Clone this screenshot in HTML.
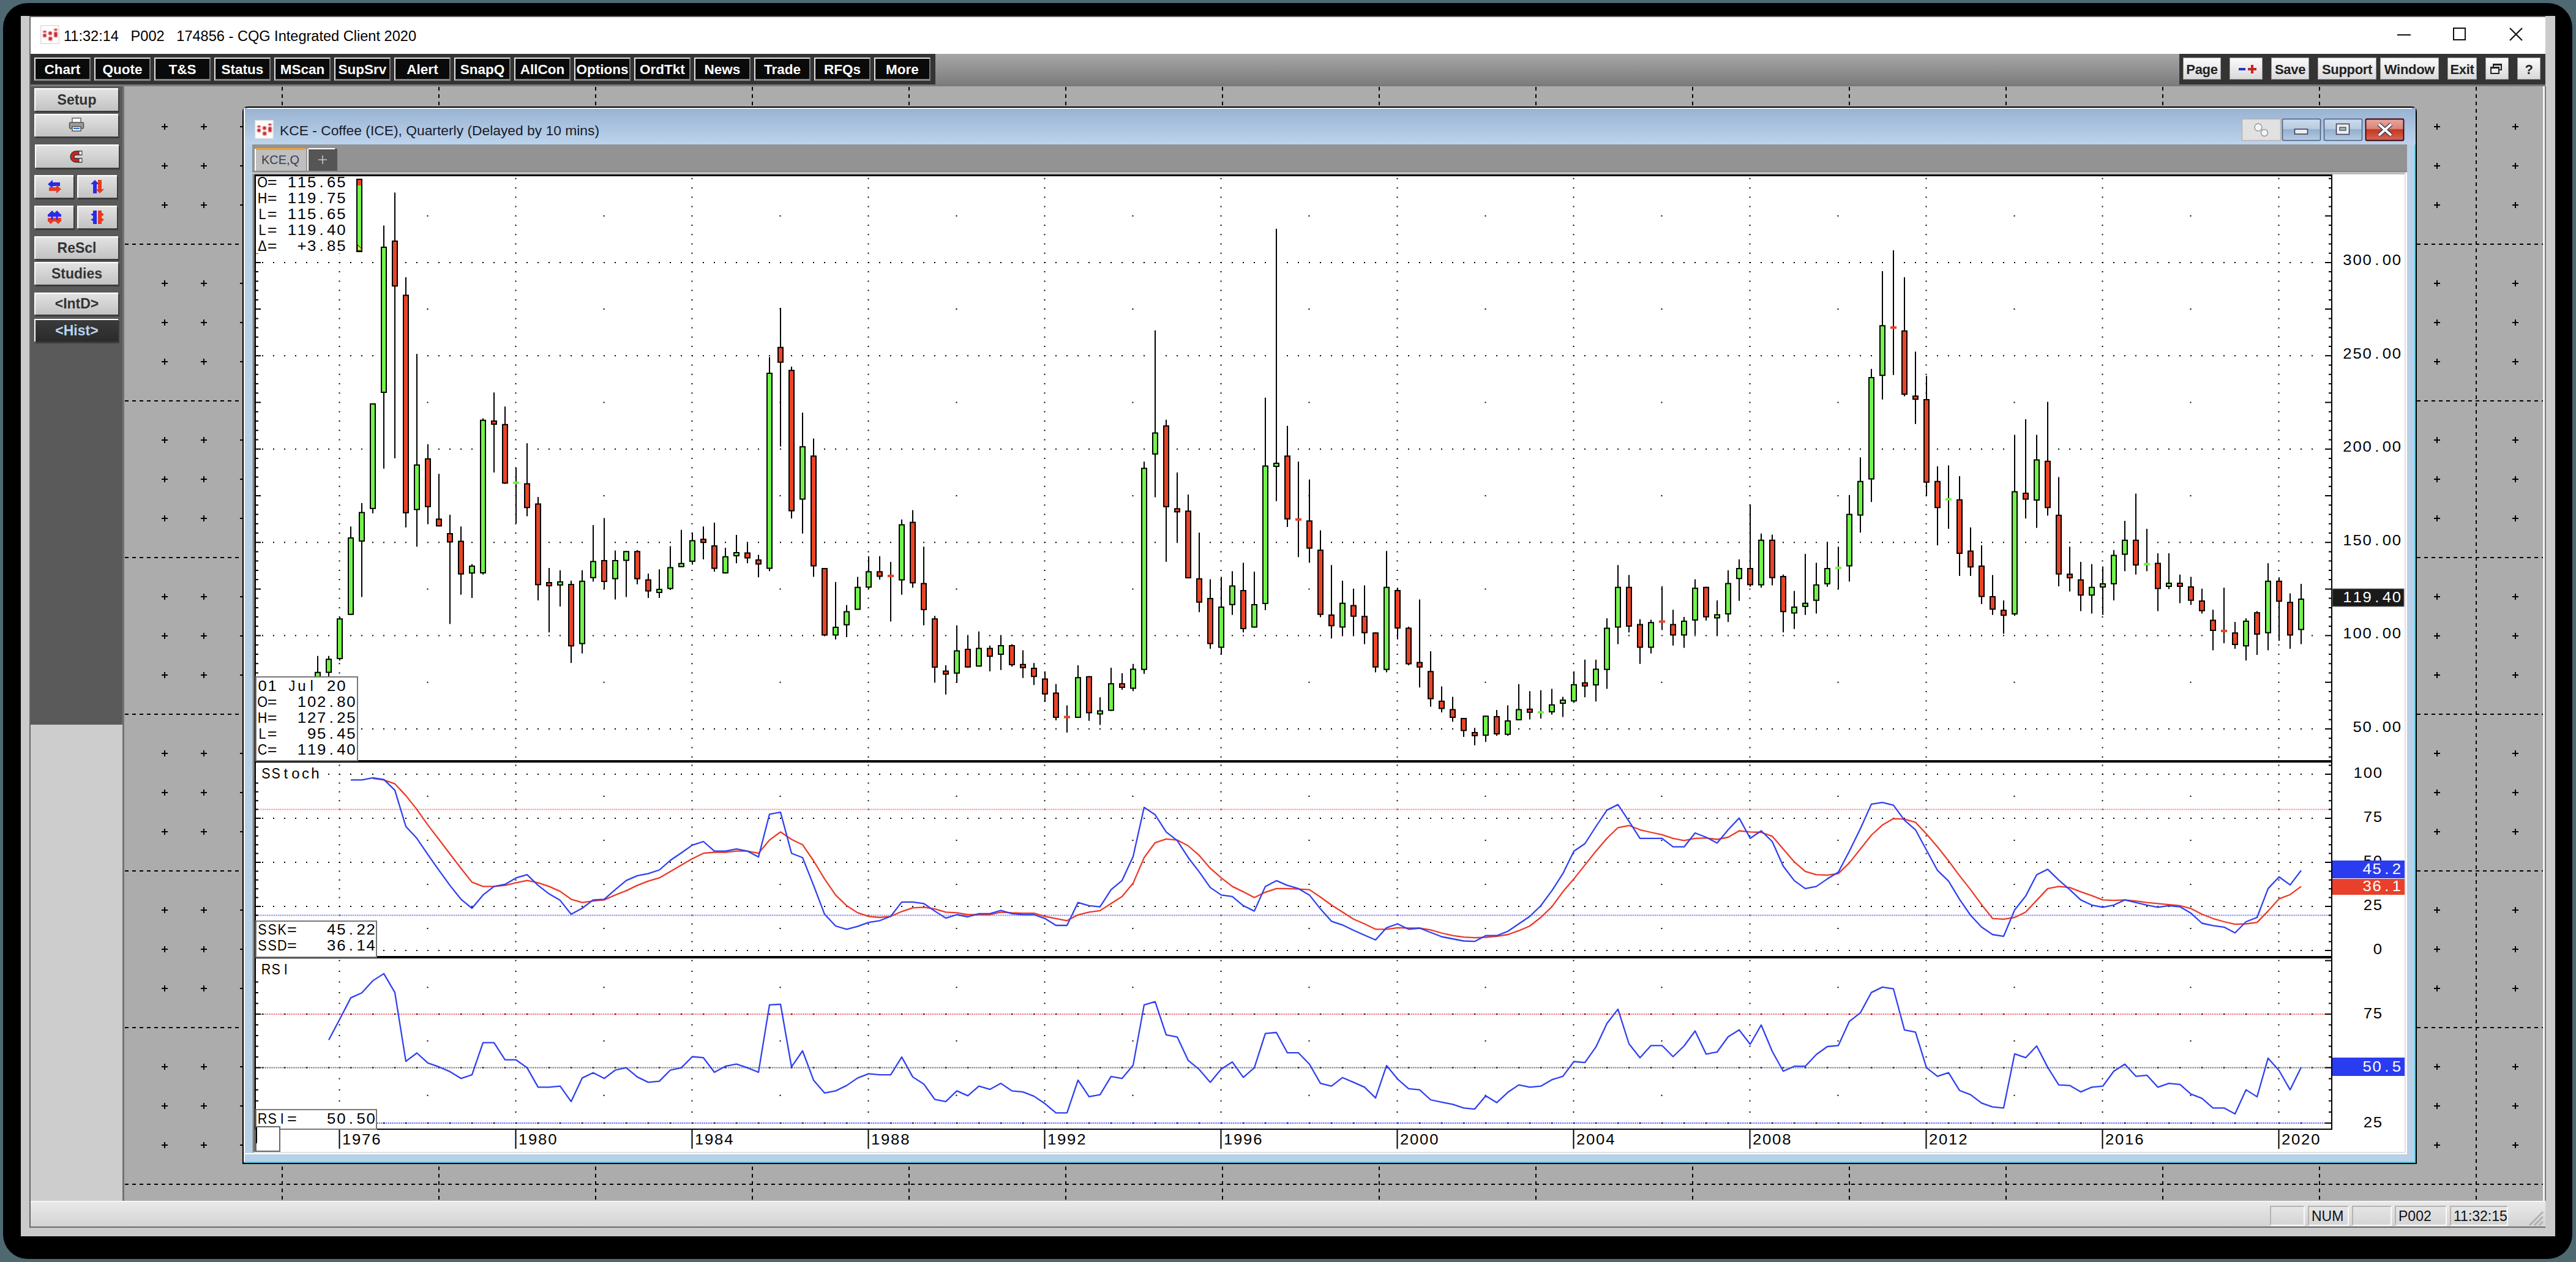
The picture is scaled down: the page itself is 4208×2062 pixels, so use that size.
<!DOCTYPE html><html><head><meta charset="utf-8"><style>html,body{margin:0;padding:0;}body{width:4208px;height:2062px;position:relative;overflow:hidden;background:#4e6971;font-family:"Liberation Sans",sans-serif;}</style></head><body>
<div style="position:absolute;left:5px;top:5px;width:4197px;height:2052px;background:#000;border-radius:40px;"></div>
<div style="position:absolute;left:34px;top:26px;width:4140px;height:1994px;background:#cbcbcb;"></div>
<div style="position:absolute;left:48px;top:26px;width:2px;height:1980px;background:#666;"></div>
<div style="position:absolute;left:50px;top:28px;width:4108px;height:60px;background:#fff;"></div>
<div style="position:absolute;left:48px;top:26px;width:4110px;height:2px;background:#666;"></div>
<svg style="position:absolute;left:66px;top:41px" width="31" height="31" viewBox="0 0 31 31"><rect x="0.75" y="0.75" width="29.5" height="29.5" fill="#fff" stroke="#dcdcdc" stroke-width="1.5"/><g fill="#c4303a" stroke="#f2b0b0" stroke-width="1.4"><ellipse cx="7" cy="10.7" rx="3" ry="1.8"/><rect x="4" y="14" width="6" height="6" rx="2"/><circle cx="16" cy="13.3" r="3.2"/><rect x="13" y="19" width="6.5" height="6.5" rx="2.5"/><ellipse cx="25" cy="7.5" rx="3" ry="1.8"/><rect x="22" y="11" width="6" height="9" rx="2"/></g></svg>
<svg style="position:absolute;left:100px;top:36px" width="700" height="44"><text x="4" y="31" font-family="'Liberation Sans', sans-serif" font-size="23.5" fill="#000" xml:space="preserve" textLength="576" lengthAdjust="spacingAndGlyphs">11:32:14   P002   174856 - CQG Integrated Client 2020</text></svg>
<div style="position:absolute;left:3916px;top:56px;width:22px;height:2px;background:#111;"></div>
<div style="position:absolute;left:4007px;top:45px;width:21px;height:21px;border:2px solid #111;box-sizing:border-box;"></div>
<svg style="position:absolute;left:4099px;top:45px" width="22" height="22"><path d="M1 1 L21 21 M21 1 L1 21" stroke="#111" stroke-width="2.2"/></svg>
<div style="position:absolute;left:50px;top:88px;width:4108px;height:50px;background:#343434;"></div>
<div style="position:absolute;left:1528px;top:88px;width:2032px;height:50px;background:linear-gradient(#a6a6a6,#7d7d7d);"></div>
<div style="position:absolute;left:56px;top:94px;width:92px;height:38px;box-sizing:border-box;background:#0a0a0a;border-top:2px solid #e6e6e6;border-left:2px solid #e6e6e6;border-right:2px solid #7a7a7a;border-bottom:3px solid #8a8a8a;color:#fff;font-family:'Liberation Sans', sans-serif;font-weight:bold;font-size:22.5px;line-height:35px;text-align:center;white-space:nowrap;letter-spacing:0px">Chart</div>
<div style="position:absolute;left:154px;top:94px;width:92px;height:38px;box-sizing:border-box;background:#0a0a0a;border-top:2px solid #e6e6e6;border-left:2px solid #e6e6e6;border-right:2px solid #7a7a7a;border-bottom:3px solid #8a8a8a;color:#fff;font-family:'Liberation Sans', sans-serif;font-weight:bold;font-size:22.5px;line-height:35px;text-align:center;white-space:nowrap;letter-spacing:0px">Quote</div>
<div style="position:absolute;left:252px;top:94px;width:92px;height:38px;box-sizing:border-box;background:#0a0a0a;border-top:2px solid #e6e6e6;border-left:2px solid #e6e6e6;border-right:2px solid #7a7a7a;border-bottom:3px solid #8a8a8a;color:#fff;font-family:'Liberation Sans', sans-serif;font-weight:bold;font-size:22.5px;line-height:35px;text-align:center;white-space:nowrap;letter-spacing:0px">T&amp;S</div>
<div style="position:absolute;left:350px;top:94px;width:92px;height:38px;box-sizing:border-box;background:#0a0a0a;border-top:2px solid #e6e6e6;border-left:2px solid #e6e6e6;border-right:2px solid #7a7a7a;border-bottom:3px solid #8a8a8a;color:#fff;font-family:'Liberation Sans', sans-serif;font-weight:bold;font-size:22.5px;line-height:35px;text-align:center;white-space:nowrap;letter-spacing:0px">Status</div>
<div style="position:absolute;left:448px;top:94px;width:92px;height:38px;box-sizing:border-box;background:#0a0a0a;border-top:2px solid #e6e6e6;border-left:2px solid #e6e6e6;border-right:2px solid #7a7a7a;border-bottom:3px solid #8a8a8a;color:#fff;font-family:'Liberation Sans', sans-serif;font-weight:bold;font-size:22.5px;line-height:35px;text-align:center;white-space:nowrap;letter-spacing:0px">MScan</div>
<div style="position:absolute;left:546px;top:94px;width:92px;height:38px;box-sizing:border-box;background:#0a0a0a;border-top:2px solid #e6e6e6;border-left:2px solid #e6e6e6;border-right:2px solid #7a7a7a;border-bottom:3px solid #8a8a8a;color:#fff;font-family:'Liberation Sans', sans-serif;font-weight:bold;font-size:22.5px;line-height:35px;text-align:center;white-space:nowrap;letter-spacing:0px">SupSrv</div>
<div style="position:absolute;left:644px;top:94px;width:92px;height:38px;box-sizing:border-box;background:#0a0a0a;border-top:2px solid #e6e6e6;border-left:2px solid #e6e6e6;border-right:2px solid #7a7a7a;border-bottom:3px solid #8a8a8a;color:#fff;font-family:'Liberation Sans', sans-serif;font-weight:bold;font-size:22.5px;line-height:35px;text-align:center;white-space:nowrap;letter-spacing:0px">Alert</div>
<div style="position:absolute;left:742px;top:94px;width:92px;height:38px;box-sizing:border-box;background:#0a0a0a;border-top:2px solid #e6e6e6;border-left:2px solid #e6e6e6;border-right:2px solid #7a7a7a;border-bottom:3px solid #8a8a8a;color:#fff;font-family:'Liberation Sans', sans-serif;font-weight:bold;font-size:22.5px;line-height:35px;text-align:center;white-space:nowrap;letter-spacing:0px">SnapQ</div>
<div style="position:absolute;left:840px;top:94px;width:92px;height:38px;box-sizing:border-box;background:#0a0a0a;border-top:2px solid #e6e6e6;border-left:2px solid #e6e6e6;border-right:2px solid #7a7a7a;border-bottom:3px solid #8a8a8a;color:#fff;font-family:'Liberation Sans', sans-serif;font-weight:bold;font-size:22.5px;line-height:35px;text-align:center;white-space:nowrap;letter-spacing:0px">AllCon</div>
<div style="position:absolute;left:938px;top:94px;width:92px;height:38px;box-sizing:border-box;background:#0a0a0a;border-top:2px solid #e6e6e6;border-left:2px solid #e6e6e6;border-right:2px solid #7a7a7a;border-bottom:3px solid #8a8a8a;color:#fff;font-family:'Liberation Sans', sans-serif;font-weight:bold;font-size:22.5px;line-height:35px;text-align:center;white-space:nowrap;letter-spacing:0px">Options</div>
<div style="position:absolute;left:1036px;top:94px;width:92px;height:38px;box-sizing:border-box;background:#0a0a0a;border-top:2px solid #e6e6e6;border-left:2px solid #e6e6e6;border-right:2px solid #7a7a7a;border-bottom:3px solid #8a8a8a;color:#fff;font-family:'Liberation Sans', sans-serif;font-weight:bold;font-size:22.5px;line-height:35px;text-align:center;white-space:nowrap;letter-spacing:0px">OrdTkt</div>
<div style="position:absolute;left:1134px;top:94px;width:92px;height:38px;box-sizing:border-box;background:#0a0a0a;border-top:2px solid #e6e6e6;border-left:2px solid #e6e6e6;border-right:2px solid #7a7a7a;border-bottom:3px solid #8a8a8a;color:#fff;font-family:'Liberation Sans', sans-serif;font-weight:bold;font-size:22.5px;line-height:35px;text-align:center;white-space:nowrap;letter-spacing:0px">News</div>
<div style="position:absolute;left:1232px;top:94px;width:92px;height:38px;box-sizing:border-box;background:#0a0a0a;border-top:2px solid #e6e6e6;border-left:2px solid #e6e6e6;border-right:2px solid #7a7a7a;border-bottom:3px solid #8a8a8a;color:#fff;font-family:'Liberation Sans', sans-serif;font-weight:bold;font-size:22.5px;line-height:35px;text-align:center;white-space:nowrap;letter-spacing:0px">Trade</div>
<div style="position:absolute;left:1330px;top:94px;width:92px;height:38px;box-sizing:border-box;background:#0a0a0a;border-top:2px solid #e6e6e6;border-left:2px solid #e6e6e6;border-right:2px solid #7a7a7a;border-bottom:3px solid #8a8a8a;color:#fff;font-family:'Liberation Sans', sans-serif;font-weight:bold;font-size:22.5px;line-height:35px;text-align:center;white-space:nowrap;letter-spacing:0px">RFQs</div>
<div style="position:absolute;left:1428px;top:94px;width:92px;height:38px;box-sizing:border-box;background:#0a0a0a;border-top:2px solid #e6e6e6;border-left:2px solid #e6e6e6;border-right:2px solid #7a7a7a;border-bottom:3px solid #8a8a8a;color:#fff;font-family:'Liberation Sans', sans-serif;font-weight:bold;font-size:22.5px;line-height:35px;text-align:center;white-space:nowrap;letter-spacing:0px">More</div>
<div style="position:absolute;left:3566px;top:94px;width:62px;height:36px;box-sizing:border-box;background:linear-gradient(#fbfbfb,#d9d9d9);border:1px solid #9a9a9a;color:#222;font-family:'Liberation Sans', sans-serif;font-weight:bold;font-size:22px;line-height:37px;text-align:center;white-space:nowrap;letter-spacing:-0.3px">Page</div>
<div style="position:absolute;left:3642px;top:94px;width:54px;height:36px;box-sizing:border-box;background:linear-gradient(#fbfbfb,#d9d9d9);border:1px solid #9a9a9a;color:#222;font-family:'Liberation Sans', sans-serif;font-weight:bold;font-size:22px;line-height:37px;text-align:center;white-space:nowrap;letter-spacing:-0.3px"></div>
<div style="position:absolute;left:3710px;top:94px;width:62px;height:36px;box-sizing:border-box;background:linear-gradient(#fbfbfb,#d9d9d9);border:1px solid #9a9a9a;color:#222;font-family:'Liberation Sans', sans-serif;font-weight:bold;font-size:22px;line-height:37px;text-align:center;white-space:nowrap;letter-spacing:-0.3px">Save</div>
<div style="position:absolute;left:3786px;top:94px;width:96px;height:36px;box-sizing:border-box;background:linear-gradient(#fbfbfb,#d9d9d9);border:1px solid #9a9a9a;color:#222;font-family:'Liberation Sans', sans-serif;font-weight:bold;font-size:22px;line-height:37px;text-align:center;white-space:nowrap;letter-spacing:-0.3px">Support</div>
<div style="position:absolute;left:3888px;top:94px;width:96px;height:36px;box-sizing:border-box;background:linear-gradient(#fbfbfb,#d9d9d9);border:1px solid #9a9a9a;color:#222;font-family:'Liberation Sans', sans-serif;font-weight:bold;font-size:22px;line-height:37px;text-align:center;white-space:nowrap;letter-spacing:-0.3px">Window</div>
<div style="position:absolute;left:3998px;top:94px;width:48px;height:36px;box-sizing:border-box;background:linear-gradient(#fbfbfb,#d9d9d9);border:1px solid #9a9a9a;color:#222;font-family:'Liberation Sans', sans-serif;font-weight:bold;font-size:22px;line-height:37px;text-align:center;white-space:nowrap;letter-spacing:-0.3px">Exit</div>
<div style="position:absolute;left:4060px;top:94px;width:38px;height:36px;box-sizing:border-box;background:linear-gradient(#fbfbfb,#d9d9d9);border:1px solid #9a9a9a;color:#222;font-family:'Liberation Sans', sans-serif;font-weight:bold;font-size:22px;line-height:37px;text-align:center;white-space:nowrap;letter-spacing:-0.3px"></div>
<div style="position:absolute;left:4112px;top:94px;width:38px;height:36px;box-sizing:border-box;background:linear-gradient(#fbfbfb,#d9d9d9);border:1px solid #9a9a9a;color:#222;font-family:'Liberation Sans', sans-serif;font-weight:bold;font-size:22px;line-height:37px;text-align:center;white-space:nowrap;letter-spacing:-0.3px">?</div>
<div style="position:absolute;left:3657px;top:111px;width:11px;height:4px;background:#2233cc;"></div>
<div style="position:absolute;left:3672px;top:111px;width:14px;height:4px;background:#cc2222;"></div>
<div style="position:absolute;left:3677px;top:106px;width:4px;height:14px;background:#cc2222;"></div>
<div style="position:absolute;left:4072px;top:104px;width:15px;height:11px;border:2px solid #222;border-top-width:3px;box-sizing:border-box;"></div>
<div style="position:absolute;left:4068px;top:109px;width:15px;height:12px;border:2px solid #222;border-top-width:3px;box-sizing:border-box;background:#eee;"></div>
<div style="position:absolute;left:50px;top:138px;width:4108px;height:3px;background:#7a7a7a;"></div>
<div style="position:absolute;left:50px;top:141px;width:151px;height:1043px;background:#5a5a5a;"></div>
<div style="position:absolute;left:50px;top:1184px;width:151px;height:779px;background:#cdcdcd;"></div>
<div style="position:absolute;left:200px;top:141px;width:3px;height:1822px;background:#737373;"></div>
<div style="position:absolute;left:56px;top:144px;width:137px;height:37px;box-sizing:border-box;background:linear-gradient(#e2e2e2,#c2c2c2);border-top:2px solid #fff;border-left:2px solid #fff;box-shadow:2px 3px 0 #3c3c3c;color:#333;font-family:'Liberation Sans', sans-serif;font-weight:bold;font-size:23px;line-height:34px;text-align:center;white-space:nowrap">Setup</div>
<div style="position:absolute;left:56px;top:186px;width:137px;height:37px;box-sizing:border-box;background:linear-gradient(#e2e2e2,#c2c2c2);border-top:2px solid #fff;border-left:2px solid #fff;box-shadow:2px 3px 0 #3c3c3c;color:#333;font-family:'Liberation Sans', sans-serif;font-weight:bold;font-size:23px;line-height:34px;text-align:center;white-space:nowrap"></div>
<div style="position:absolute;left:57px;top:236px;width:137px;height:38px;box-sizing:border-box;background:linear-gradient(#e2e2e2,#c2c2c2);border-top:2px solid #fff;border-left:2px solid #fff;box-shadow:2px 3px 0 #3c3c3c;color:#333;font-family:'Liberation Sans', sans-serif;font-weight:bold;font-size:23px;line-height:35px;text-align:center;white-space:nowrap"></div>
<div style="position:absolute;left:56px;top:286px;width:64px;height:37px;box-sizing:border-box;background:linear-gradient(#e2e2e2,#c2c2c2);border-top:2px solid #fff;border-left:2px solid #fff;box-shadow:2px 3px 0 #3c3c3c;color:#333;font-family:'Liberation Sans', sans-serif;font-weight:bold;font-size:23px;line-height:34px;text-align:center;white-space:nowrap"></div>
<div style="position:absolute;left:126px;top:286px;width:65px;height:37px;box-sizing:border-box;background:linear-gradient(#e2e2e2,#c2c2c2);border-top:2px solid #fff;border-left:2px solid #fff;box-shadow:2px 3px 0 #3c3c3c;color:#333;font-family:'Liberation Sans', sans-serif;font-weight:bold;font-size:23px;line-height:34px;text-align:center;white-space:nowrap"></div>
<div style="position:absolute;left:56px;top:336px;width:64px;height:37px;box-sizing:border-box;background:linear-gradient(#e2e2e2,#c2c2c2);border-top:2px solid #fff;border-left:2px solid #fff;box-shadow:2px 3px 0 #3c3c3c;color:#333;font-family:'Liberation Sans', sans-serif;font-weight:bold;font-size:23px;line-height:34px;text-align:center;white-space:nowrap"></div>
<div style="position:absolute;left:126px;top:336px;width:65px;height:37px;box-sizing:border-box;background:linear-gradient(#e2e2e2,#c2c2c2);border-top:2px solid #fff;border-left:2px solid #fff;box-shadow:2px 3px 0 #3c3c3c;color:#333;font-family:'Liberation Sans', sans-serif;font-weight:bold;font-size:23px;line-height:34px;text-align:center;white-space:nowrap"></div>
<div style="position:absolute;left:56px;top:386px;width:137px;height:37px;box-sizing:border-box;background:linear-gradient(#e2e2e2,#c2c2c2);border-top:2px solid #fff;border-left:2px solid #fff;box-shadow:2px 3px 0 #3c3c3c;color:#333;font-family:'Liberation Sans', sans-serif;font-weight:bold;font-size:23px;line-height:34px;text-align:center;white-space:nowrap">ReScl</div>
<div style="position:absolute;left:56px;top:428px;width:137px;height:37px;box-sizing:border-box;background:linear-gradient(#e2e2e2,#c2c2c2);border-top:2px solid #fff;border-left:2px solid #fff;box-shadow:2px 3px 0 #3c3c3c;color:#333;font-family:'Liberation Sans', sans-serif;font-weight:bold;font-size:23px;line-height:34px;text-align:center;white-space:nowrap">Studies</div>
<div style="position:absolute;left:56px;top:478px;width:137px;height:36px;box-sizing:border-box;background:linear-gradient(#e2e2e2,#c2c2c2);border-top:2px solid #fff;border-left:2px solid #fff;box-shadow:2px 3px 0 #3c3c3c;color:#333;font-family:'Liberation Sans', sans-serif;font-weight:bold;font-size:23px;line-height:33px;text-align:center;white-space:nowrap">&lt;IntD&gt;</div>
<div style="position:absolute;left:56px;top:521px;width:137px;height:37px;box-sizing:border-box;background:linear-gradient(#3a3a3a,#2a2a2a);border-top:2px solid #fff;border-left:2px solid #fff;box-shadow:2px 3px 0 #3c3c3c;color:#b8d4f0;font-family:'Liberation Sans', sans-serif;font-weight:bold;font-size:23px;line-height:34px;text-align:center;white-space:nowrap">&lt;Hist&gt;</div>
<svg style="position:absolute;left:112px;top:192px" width="26" height="24" viewBox="0 0 26 24"><rect x="6" y="1" width="14" height="8" fill="#fff" stroke="#666" stroke-width="1.5"/><rect x="1.5" y="8" width="23" height="10" rx="2" fill="#9a9a9a" stroke="#555" stroke-width="1.5"/><rect x="6" y="15" width="14" height="7" fill="#fff" stroke="#555" stroke-width="1.5"/><rect x="8" y="17" width="10" height="2" fill="#2a6fd0"/></svg>
<svg style="position:absolute;left:113px;top:244px" width="26" height="24" viewBox="0 0 26 24"><path d="M20 3 H11 A9 9 0 0 0 11 21 H20 V15 H11 A3 3 0 0 1 11 9 H20 Z" fill="#d42020" stroke="#333" stroke-width="1.3"/><rect x="16" y="3" width="5" height="6" fill="#eee" stroke="#333" stroke-width="1"/><rect x="16" y="15" width="5" height="6" fill="#eee" stroke="#333" stroke-width="1"/></svg>
<svg style="position:absolute;left:0;top:0" width="220" height="400"><path d="M78 301 L86 294 V298 H98 V304 H86 V308 Z" fill="#2a2ae8"/><path d="M100 309 L92 302 V306 H80 V312 H92 V316 Z" fill="#e83a22"/><path d="M155 294 L148 301 H152 V316 H158 V301 H162 Z" fill="#2a2ae8"/><path d="M163 316 L156 309 H160 V294 H166 V309 H170 Z" fill="#e83a22"/><path d="M78 356 H100 V362 H78 Z M83 366 L78 361 H88 Z M95 366 L90 361 H100 Z" fill="#e83a22"/><path d="M78 350 H100 V354 H78 Z M85 344 L79 350 H91 Z M93 344 L87 350 H99 Z M83.5 354 H86.5 V359 H83.5 Z M91.5 354 H94.5 V359 H91.5 Z" fill="#2a2ae8"/><g fill="#e83a22"><rect x="160" y="344" width="6" height="22"/><path d="M170 350.5 L163 345 V356 Z"/><path d="M170 359 L163 353.5 V364.5 Z"/></g><g fill="#2a2ae8"><rect x="152" y="344" width="6" height="22"/><path d="M148 350.5 L158 345 V356 Z"/><path d="M148 359 L158 353.5 V364.5 Z"/></g></svg>
<div style="position:absolute;left:203px;top:141px;width:3953px;height:1821px;background:#acacac;"></div>
<div style="position:absolute;left:4154px;top:141px;width:3px;height:1821px;background:#f4f4f4;"></div>
<div style="position:absolute;left:4157px;top:141px;width:2px;height:1821px;background:#7a7a7a;"></div>
<svg style="position:absolute;left:203px;top:141px" width="3953" height="1821"><g stroke="#000" stroke-width="2" stroke-dasharray="6 6"><line x1="258" y1="1" x2="258" y2="1821" /><line x1="514" y1="1" x2="514" y2="1821" /><line x1="770" y1="1" x2="770" y2="1821" /><line x1="1026" y1="1" x2="1026" y2="1821" /><line x1="1282" y1="1" x2="1282" y2="1821" /><line x1="1538" y1="1" x2="1538" y2="1821" /><line x1="1794" y1="1" x2="1794" y2="1821" /><line x1="2050" y1="1" x2="2050" y2="1821" /><line x1="2306" y1="1" x2="2306" y2="1821" /><line x1="2562" y1="1" x2="2562" y2="1821" /><line x1="2818" y1="1" x2="2818" y2="1821" /><line x1="3074" y1="1" x2="3074" y2="1821" /><line x1="3330" y1="1" x2="3330" y2="1821" /><line x1="3586" y1="1" x2="3586" y2="1821" /><line x1="3842" y1="1" x2="3842" y2="1821" /><line x1="1" y1="258" x2="3951" y2="258" /><line x1="1" y1="514" x2="3951" y2="514" /><line x1="1" y1="770" x2="3951" y2="770" /><line x1="1" y1="1026" x2="3951" y2="1026" /><line x1="1" y1="1282" x2="3951" y2="1282" /><line x1="1" y1="1538" x2="3951" y2="1538" /><line x1="1" y1="1794" x2="3951" y2="1794" /></g><path d="M61 66h10M66 61v10M61 130h10M66 125v10M61 194h10M66 189v10M61 322h10M66 317v10M61 386h10M66 381v10M61 450h10M66 445v10M61 578h10M66 573v10M61 642h10M66 637v10M61 706h10M66 701v10M61 834h10M66 829v10M61 898h10M66 893v10M61 962h10M66 957v10M61 1090h10M66 1085v10M61 1154h10M66 1149v10M61 1218h10M66 1213v10M61 1346h10M66 1341v10M61 1410h10M66 1405v10M61 1474h10M66 1469v10M61 1602h10M66 1597v10M61 1666h10M66 1661v10M61 1730h10M66 1725v10M125 66h10M130 61v10M125 130h10M130 125v10M125 194h10M130 189v10M125 322h10M130 317v10M125 386h10M130 381v10M125 450h10M130 445v10M125 578h10M130 573v10M125 642h10M130 637v10M125 706h10M130 701v10M125 834h10M130 829v10M125 898h10M130 893v10M125 962h10M130 957v10M125 1090h10M130 1085v10M125 1154h10M130 1149v10M125 1218h10M130 1213v10M125 1346h10M130 1341v10M125 1410h10M130 1405v10M125 1474h10M130 1469v10M125 1602h10M130 1597v10M125 1666h10M130 1661v10M125 1730h10M130 1725v10M189 66h10M194 61v10M189 130h10M194 125v10M189 194h10M194 189v10M189 322h10M194 317v10M189 386h10M194 381v10M189 450h10M194 445v10M189 578h10M194 573v10M189 642h10M194 637v10M189 706h10M194 701v10M189 834h10M194 829v10M189 898h10M194 893v10M189 962h10M194 957v10M189 1090h10M194 1085v10M189 1154h10M194 1149v10M189 1218h10M194 1213v10M189 1346h10M194 1341v10M189 1410h10M194 1405v10M189 1474h10M194 1469v10M189 1602h10M194 1597v10M189 1666h10M194 1661v10M189 1730h10M194 1725v10M317 66h10M322 61v10M317 130h10M322 125v10M317 194h10M322 189v10M317 322h10M322 317v10M317 386h10M322 381v10M317 450h10M322 445v10M317 578h10M322 573v10M317 642h10M322 637v10M317 706h10M322 701v10M317 834h10M322 829v10M317 898h10M322 893v10M317 962h10M322 957v10M317 1090h10M322 1085v10M317 1154h10M322 1149v10M317 1218h10M322 1213v10M317 1346h10M322 1341v10M317 1410h10M322 1405v10M317 1474h10M322 1469v10M317 1602h10M322 1597v10M317 1666h10M322 1661v10M317 1730h10M322 1725v10M381 66h10M386 61v10M381 130h10M386 125v10M381 194h10M386 189v10M381 322h10M386 317v10M381 386h10M386 381v10M381 450h10M386 445v10M381 578h10M386 573v10M381 642h10M386 637v10M381 706h10M386 701v10M381 834h10M386 829v10M381 898h10M386 893v10M381 962h10M386 957v10M381 1090h10M386 1085v10M381 1154h10M386 1149v10M381 1218h10M386 1213v10M381 1346h10M386 1341v10M381 1410h10M386 1405v10M381 1474h10M386 1469v10M381 1602h10M386 1597v10M381 1666h10M386 1661v10M381 1730h10M386 1725v10M445 66h10M450 61v10M445 130h10M450 125v10M445 194h10M450 189v10M445 322h10M450 317v10M445 386h10M450 381v10M445 450h10M450 445v10M445 578h10M450 573v10M445 642h10M450 637v10M445 706h10M450 701v10M445 834h10M450 829v10M445 898h10M450 893v10M445 962h10M450 957v10M445 1090h10M450 1085v10M445 1154h10M450 1149v10M445 1218h10M450 1213v10M445 1346h10M450 1341v10M445 1410h10M450 1405v10M445 1474h10M450 1469v10M445 1602h10M450 1597v10M445 1666h10M450 1661v10M445 1730h10M450 1725v10M573 66h10M578 61v10M573 130h10M578 125v10M573 194h10M578 189v10M573 322h10M578 317v10M573 386h10M578 381v10M573 450h10M578 445v10M573 578h10M578 573v10M573 642h10M578 637v10M573 706h10M578 701v10M573 834h10M578 829v10M573 898h10M578 893v10M573 962h10M578 957v10M573 1090h10M578 1085v10M573 1154h10M578 1149v10M573 1218h10M578 1213v10M573 1346h10M578 1341v10M573 1410h10M578 1405v10M573 1474h10M578 1469v10M573 1602h10M578 1597v10M573 1666h10M578 1661v10M573 1730h10M578 1725v10M637 66h10M642 61v10M637 130h10M642 125v10M637 194h10M642 189v10M637 322h10M642 317v10M637 386h10M642 381v10M637 450h10M642 445v10M637 578h10M642 573v10M637 642h10M642 637v10M637 706h10M642 701v10M637 834h10M642 829v10M637 898h10M642 893v10M637 962h10M642 957v10M637 1090h10M642 1085v10M637 1154h10M642 1149v10M637 1218h10M642 1213v10M637 1346h10M642 1341v10M637 1410h10M642 1405v10M637 1474h10M642 1469v10M637 1602h10M642 1597v10M637 1666h10M642 1661v10M637 1730h10M642 1725v10M701 66h10M706 61v10M701 130h10M706 125v10M701 194h10M706 189v10M701 322h10M706 317v10M701 386h10M706 381v10M701 450h10M706 445v10M701 578h10M706 573v10M701 642h10M706 637v10M701 706h10M706 701v10M701 834h10M706 829v10M701 898h10M706 893v10M701 962h10M706 957v10M701 1090h10M706 1085v10M701 1154h10M706 1149v10M701 1218h10M706 1213v10M701 1346h10M706 1341v10M701 1410h10M706 1405v10M701 1474h10M706 1469v10M701 1602h10M706 1597v10M701 1666h10M706 1661v10M701 1730h10M706 1725v10M829 66h10M834 61v10M829 130h10M834 125v10M829 194h10M834 189v10M829 322h10M834 317v10M829 386h10M834 381v10M829 450h10M834 445v10M829 578h10M834 573v10M829 642h10M834 637v10M829 706h10M834 701v10M829 834h10M834 829v10M829 898h10M834 893v10M829 962h10M834 957v10M829 1090h10M834 1085v10M829 1154h10M834 1149v10M829 1218h10M834 1213v10M829 1346h10M834 1341v10M829 1410h10M834 1405v10M829 1474h10M834 1469v10M829 1602h10M834 1597v10M829 1666h10M834 1661v10M829 1730h10M834 1725v10M893 66h10M898 61v10M893 130h10M898 125v10M893 194h10M898 189v10M893 322h10M898 317v10M893 386h10M898 381v10M893 450h10M898 445v10M893 578h10M898 573v10M893 642h10M898 637v10M893 706h10M898 701v10M893 834h10M898 829v10M893 898h10M898 893v10M893 962h10M898 957v10M893 1090h10M898 1085v10M893 1154h10M898 1149v10M893 1218h10M898 1213v10M893 1346h10M898 1341v10M893 1410h10M898 1405v10M893 1474h10M898 1469v10M893 1602h10M898 1597v10M893 1666h10M898 1661v10M893 1730h10M898 1725v10M957 66h10M962 61v10M957 130h10M962 125v10M957 194h10M962 189v10M957 322h10M962 317v10M957 386h10M962 381v10M957 450h10M962 445v10M957 578h10M962 573v10M957 642h10M962 637v10M957 706h10M962 701v10M957 834h10M962 829v10M957 898h10M962 893v10M957 962h10M962 957v10M957 1090h10M962 1085v10M957 1154h10M962 1149v10M957 1218h10M962 1213v10M957 1346h10M962 1341v10M957 1410h10M962 1405v10M957 1474h10M962 1469v10M957 1602h10M962 1597v10M957 1666h10M962 1661v10M957 1730h10M962 1725v10M1085 66h10M1090 61v10M1085 130h10M1090 125v10M1085 194h10M1090 189v10M1085 322h10M1090 317v10M1085 386h10M1090 381v10M1085 450h10M1090 445v10M1085 578h10M1090 573v10M1085 642h10M1090 637v10M1085 706h10M1090 701v10M1085 834h10M1090 829v10M1085 898h10M1090 893v10M1085 962h10M1090 957v10M1085 1090h10M1090 1085v10M1085 1154h10M1090 1149v10M1085 1218h10M1090 1213v10M1085 1346h10M1090 1341v10M1085 1410h10M1090 1405v10M1085 1474h10M1090 1469v10M1085 1602h10M1090 1597v10M1085 1666h10M1090 1661v10M1085 1730h10M1090 1725v10M1149 66h10M1154 61v10M1149 130h10M1154 125v10M1149 194h10M1154 189v10M1149 322h10M1154 317v10M1149 386h10M1154 381v10M1149 450h10M1154 445v10M1149 578h10M1154 573v10M1149 642h10M1154 637v10M1149 706h10M1154 701v10M1149 834h10M1154 829v10M1149 898h10M1154 893v10M1149 962h10M1154 957v10M1149 1090h10M1154 1085v10M1149 1154h10M1154 1149v10M1149 1218h10M1154 1213v10M1149 1346h10M1154 1341v10M1149 1410h10M1154 1405v10M1149 1474h10M1154 1469v10M1149 1602h10M1154 1597v10M1149 1666h10M1154 1661v10M1149 1730h10M1154 1725v10M1213 66h10M1218 61v10M1213 130h10M1218 125v10M1213 194h10M1218 189v10M1213 322h10M1218 317v10M1213 386h10M1218 381v10M1213 450h10M1218 445v10M1213 578h10M1218 573v10M1213 642h10M1218 637v10M1213 706h10M1218 701v10M1213 834h10M1218 829v10M1213 898h10M1218 893v10M1213 962h10M1218 957v10M1213 1090h10M1218 1085v10M1213 1154h10M1218 1149v10M1213 1218h10M1218 1213v10M1213 1346h10M1218 1341v10M1213 1410h10M1218 1405v10M1213 1474h10M1218 1469v10M1213 1602h10M1218 1597v10M1213 1666h10M1218 1661v10M1213 1730h10M1218 1725v10M1341 66h10M1346 61v10M1341 130h10M1346 125v10M1341 194h10M1346 189v10M1341 322h10M1346 317v10M1341 386h10M1346 381v10M1341 450h10M1346 445v10M1341 578h10M1346 573v10M1341 642h10M1346 637v10M1341 706h10M1346 701v10M1341 834h10M1346 829v10M1341 898h10M1346 893v10M1341 962h10M1346 957v10M1341 1090h10M1346 1085v10M1341 1154h10M1346 1149v10M1341 1218h10M1346 1213v10M1341 1346h10M1346 1341v10M1341 1410h10M1346 1405v10M1341 1474h10M1346 1469v10M1341 1602h10M1346 1597v10M1341 1666h10M1346 1661v10M1341 1730h10M1346 1725v10M1405 66h10M1410 61v10M1405 130h10M1410 125v10M1405 194h10M1410 189v10M1405 322h10M1410 317v10M1405 386h10M1410 381v10M1405 450h10M1410 445v10M1405 578h10M1410 573v10M1405 642h10M1410 637v10M1405 706h10M1410 701v10M1405 834h10M1410 829v10M1405 898h10M1410 893v10M1405 962h10M1410 957v10M1405 1090h10M1410 1085v10M1405 1154h10M1410 1149v10M1405 1218h10M1410 1213v10M1405 1346h10M1410 1341v10M1405 1410h10M1410 1405v10M1405 1474h10M1410 1469v10M1405 1602h10M1410 1597v10M1405 1666h10M1410 1661v10M1405 1730h10M1410 1725v10M1469 66h10M1474 61v10M1469 130h10M1474 125v10M1469 194h10M1474 189v10M1469 322h10M1474 317v10M1469 386h10M1474 381v10M1469 450h10M1474 445v10M1469 578h10M1474 573v10M1469 642h10M1474 637v10M1469 706h10M1474 701v10M1469 834h10M1474 829v10M1469 898h10M1474 893v10M1469 962h10M1474 957v10M1469 1090h10M1474 1085v10M1469 1154h10M1474 1149v10M1469 1218h10M1474 1213v10M1469 1346h10M1474 1341v10M1469 1410h10M1474 1405v10M1469 1474h10M1474 1469v10M1469 1602h10M1474 1597v10M1469 1666h10M1474 1661v10M1469 1730h10M1474 1725v10M1597 66h10M1602 61v10M1597 130h10M1602 125v10M1597 194h10M1602 189v10M1597 322h10M1602 317v10M1597 386h10M1602 381v10M1597 450h10M1602 445v10M1597 578h10M1602 573v10M1597 642h10M1602 637v10M1597 706h10M1602 701v10M1597 834h10M1602 829v10M1597 898h10M1602 893v10M1597 962h10M1602 957v10M1597 1090h10M1602 1085v10M1597 1154h10M1602 1149v10M1597 1218h10M1602 1213v10M1597 1346h10M1602 1341v10M1597 1410h10M1602 1405v10M1597 1474h10M1602 1469v10M1597 1602h10M1602 1597v10M1597 1666h10M1602 1661v10M1597 1730h10M1602 1725v10M1661 66h10M1666 61v10M1661 130h10M1666 125v10M1661 194h10M1666 189v10M1661 322h10M1666 317v10M1661 386h10M1666 381v10M1661 450h10M1666 445v10M1661 578h10M1666 573v10M1661 642h10M1666 637v10M1661 706h10M1666 701v10M1661 834h10M1666 829v10M1661 898h10M1666 893v10M1661 962h10M1666 957v10M1661 1090h10M1666 1085v10M1661 1154h10M1666 1149v10M1661 1218h10M1666 1213v10M1661 1346h10M1666 1341v10M1661 1410h10M1666 1405v10M1661 1474h10M1666 1469v10M1661 1602h10M1666 1597v10M1661 1666h10M1666 1661v10M1661 1730h10M1666 1725v10M1725 66h10M1730 61v10M1725 130h10M1730 125v10M1725 194h10M1730 189v10M1725 322h10M1730 317v10M1725 386h10M1730 381v10M1725 450h10M1730 445v10M1725 578h10M1730 573v10M1725 642h10M1730 637v10M1725 706h10M1730 701v10M1725 834h10M1730 829v10M1725 898h10M1730 893v10M1725 962h10M1730 957v10M1725 1090h10M1730 1085v10M1725 1154h10M1730 1149v10M1725 1218h10M1730 1213v10M1725 1346h10M1730 1341v10M1725 1410h10M1730 1405v10M1725 1474h10M1730 1469v10M1725 1602h10M1730 1597v10M1725 1666h10M1730 1661v10M1725 1730h10M1730 1725v10M1853 66h10M1858 61v10M1853 130h10M1858 125v10M1853 194h10M1858 189v10M1853 322h10M1858 317v10M1853 386h10M1858 381v10M1853 450h10M1858 445v10M1853 578h10M1858 573v10M1853 642h10M1858 637v10M1853 706h10M1858 701v10M1853 834h10M1858 829v10M1853 898h10M1858 893v10M1853 962h10M1858 957v10M1853 1090h10M1858 1085v10M1853 1154h10M1858 1149v10M1853 1218h10M1858 1213v10M1853 1346h10M1858 1341v10M1853 1410h10M1858 1405v10M1853 1474h10M1858 1469v10M1853 1602h10M1858 1597v10M1853 1666h10M1858 1661v10M1853 1730h10M1858 1725v10M1917 66h10M1922 61v10M1917 130h10M1922 125v10M1917 194h10M1922 189v10M1917 322h10M1922 317v10M1917 386h10M1922 381v10M1917 450h10M1922 445v10M1917 578h10M1922 573v10M1917 642h10M1922 637v10M1917 706h10M1922 701v10M1917 834h10M1922 829v10M1917 898h10M1922 893v10M1917 962h10M1922 957v10M1917 1090h10M1922 1085v10M1917 1154h10M1922 1149v10M1917 1218h10M1922 1213v10M1917 1346h10M1922 1341v10M1917 1410h10M1922 1405v10M1917 1474h10M1922 1469v10M1917 1602h10M1922 1597v10M1917 1666h10M1922 1661v10M1917 1730h10M1922 1725v10M1981 66h10M1986 61v10M1981 130h10M1986 125v10M1981 194h10M1986 189v10M1981 322h10M1986 317v10M1981 386h10M1986 381v10M1981 450h10M1986 445v10M1981 578h10M1986 573v10M1981 642h10M1986 637v10M1981 706h10M1986 701v10M1981 834h10M1986 829v10M1981 898h10M1986 893v10M1981 962h10M1986 957v10M1981 1090h10M1986 1085v10M1981 1154h10M1986 1149v10M1981 1218h10M1986 1213v10M1981 1346h10M1986 1341v10M1981 1410h10M1986 1405v10M1981 1474h10M1986 1469v10M1981 1602h10M1986 1597v10M1981 1666h10M1986 1661v10M1981 1730h10M1986 1725v10M2109 66h10M2114 61v10M2109 130h10M2114 125v10M2109 194h10M2114 189v10M2109 322h10M2114 317v10M2109 386h10M2114 381v10M2109 450h10M2114 445v10M2109 578h10M2114 573v10M2109 642h10M2114 637v10M2109 706h10M2114 701v10M2109 834h10M2114 829v10M2109 898h10M2114 893v10M2109 962h10M2114 957v10M2109 1090h10M2114 1085v10M2109 1154h10M2114 1149v10M2109 1218h10M2114 1213v10M2109 1346h10M2114 1341v10M2109 1410h10M2114 1405v10M2109 1474h10M2114 1469v10M2109 1602h10M2114 1597v10M2109 1666h10M2114 1661v10M2109 1730h10M2114 1725v10M2173 66h10M2178 61v10M2173 130h10M2178 125v10M2173 194h10M2178 189v10M2173 322h10M2178 317v10M2173 386h10M2178 381v10M2173 450h10M2178 445v10M2173 578h10M2178 573v10M2173 642h10M2178 637v10M2173 706h10M2178 701v10M2173 834h10M2178 829v10M2173 898h10M2178 893v10M2173 962h10M2178 957v10M2173 1090h10M2178 1085v10M2173 1154h10M2178 1149v10M2173 1218h10M2178 1213v10M2173 1346h10M2178 1341v10M2173 1410h10M2178 1405v10M2173 1474h10M2178 1469v10M2173 1602h10M2178 1597v10M2173 1666h10M2178 1661v10M2173 1730h10M2178 1725v10M2237 66h10M2242 61v10M2237 130h10M2242 125v10M2237 194h10M2242 189v10M2237 322h10M2242 317v10M2237 386h10M2242 381v10M2237 450h10M2242 445v10M2237 578h10M2242 573v10M2237 642h10M2242 637v10M2237 706h10M2242 701v10M2237 834h10M2242 829v10M2237 898h10M2242 893v10M2237 962h10M2242 957v10M2237 1090h10M2242 1085v10M2237 1154h10M2242 1149v10M2237 1218h10M2242 1213v10M2237 1346h10M2242 1341v10M2237 1410h10M2242 1405v10M2237 1474h10M2242 1469v10M2237 1602h10M2242 1597v10M2237 1666h10M2242 1661v10M2237 1730h10M2242 1725v10M2365 66h10M2370 61v10M2365 130h10M2370 125v10M2365 194h10M2370 189v10M2365 322h10M2370 317v10M2365 386h10M2370 381v10M2365 450h10M2370 445v10M2365 578h10M2370 573v10M2365 642h10M2370 637v10M2365 706h10M2370 701v10M2365 834h10M2370 829v10M2365 898h10M2370 893v10M2365 962h10M2370 957v10M2365 1090h10M2370 1085v10M2365 1154h10M2370 1149v10M2365 1218h10M2370 1213v10M2365 1346h10M2370 1341v10M2365 1410h10M2370 1405v10M2365 1474h10M2370 1469v10M2365 1602h10M2370 1597v10M2365 1666h10M2370 1661v10M2365 1730h10M2370 1725v10M2429 66h10M2434 61v10M2429 130h10M2434 125v10M2429 194h10M2434 189v10M2429 322h10M2434 317v10M2429 386h10M2434 381v10M2429 450h10M2434 445v10M2429 578h10M2434 573v10M2429 642h10M2434 637v10M2429 706h10M2434 701v10M2429 834h10M2434 829v10M2429 898h10M2434 893v10M2429 962h10M2434 957v10M2429 1090h10M2434 1085v10M2429 1154h10M2434 1149v10M2429 1218h10M2434 1213v10M2429 1346h10M2434 1341v10M2429 1410h10M2434 1405v10M2429 1474h10M2434 1469v10M2429 1602h10M2434 1597v10M2429 1666h10M2434 1661v10M2429 1730h10M2434 1725v10M2493 66h10M2498 61v10M2493 130h10M2498 125v10M2493 194h10M2498 189v10M2493 322h10M2498 317v10M2493 386h10M2498 381v10M2493 450h10M2498 445v10M2493 578h10M2498 573v10M2493 642h10M2498 637v10M2493 706h10M2498 701v10M2493 834h10M2498 829v10M2493 898h10M2498 893v10M2493 962h10M2498 957v10M2493 1090h10M2498 1085v10M2493 1154h10M2498 1149v10M2493 1218h10M2498 1213v10M2493 1346h10M2498 1341v10M2493 1410h10M2498 1405v10M2493 1474h10M2498 1469v10M2493 1602h10M2498 1597v10M2493 1666h10M2498 1661v10M2493 1730h10M2498 1725v10M2621 66h10M2626 61v10M2621 130h10M2626 125v10M2621 194h10M2626 189v10M2621 322h10M2626 317v10M2621 386h10M2626 381v10M2621 450h10M2626 445v10M2621 578h10M2626 573v10M2621 642h10M2626 637v10M2621 706h10M2626 701v10M2621 834h10M2626 829v10M2621 898h10M2626 893v10M2621 962h10M2626 957v10M2621 1090h10M2626 1085v10M2621 1154h10M2626 1149v10M2621 1218h10M2626 1213v10M2621 1346h10M2626 1341v10M2621 1410h10M2626 1405v10M2621 1474h10M2626 1469v10M2621 1602h10M2626 1597v10M2621 1666h10M2626 1661v10M2621 1730h10M2626 1725v10M2685 66h10M2690 61v10M2685 130h10M2690 125v10M2685 194h10M2690 189v10M2685 322h10M2690 317v10M2685 386h10M2690 381v10M2685 450h10M2690 445v10M2685 578h10M2690 573v10M2685 642h10M2690 637v10M2685 706h10M2690 701v10M2685 834h10M2690 829v10M2685 898h10M2690 893v10M2685 962h10M2690 957v10M2685 1090h10M2690 1085v10M2685 1154h10M2690 1149v10M2685 1218h10M2690 1213v10M2685 1346h10M2690 1341v10M2685 1410h10M2690 1405v10M2685 1474h10M2690 1469v10M2685 1602h10M2690 1597v10M2685 1666h10M2690 1661v10M2685 1730h10M2690 1725v10M2749 66h10M2754 61v10M2749 130h10M2754 125v10M2749 194h10M2754 189v10M2749 322h10M2754 317v10M2749 386h10M2754 381v10M2749 450h10M2754 445v10M2749 578h10M2754 573v10M2749 642h10M2754 637v10M2749 706h10M2754 701v10M2749 834h10M2754 829v10M2749 898h10M2754 893v10M2749 962h10M2754 957v10M2749 1090h10M2754 1085v10M2749 1154h10M2754 1149v10M2749 1218h10M2754 1213v10M2749 1346h10M2754 1341v10M2749 1410h10M2754 1405v10M2749 1474h10M2754 1469v10M2749 1602h10M2754 1597v10M2749 1666h10M2754 1661v10M2749 1730h10M2754 1725v10M2877 66h10M2882 61v10M2877 130h10M2882 125v10M2877 194h10M2882 189v10M2877 322h10M2882 317v10M2877 386h10M2882 381v10M2877 450h10M2882 445v10M2877 578h10M2882 573v10M2877 642h10M2882 637v10M2877 706h10M2882 701v10M2877 834h10M2882 829v10M2877 898h10M2882 893v10M2877 962h10M2882 957v10M2877 1090h10M2882 1085v10M2877 1154h10M2882 1149v10M2877 1218h10M2882 1213v10M2877 1346h10M2882 1341v10M2877 1410h10M2882 1405v10M2877 1474h10M2882 1469v10M2877 1602h10M2882 1597v10M2877 1666h10M2882 1661v10M2877 1730h10M2882 1725v10M2941 66h10M2946 61v10M2941 130h10M2946 125v10M2941 194h10M2946 189v10M2941 322h10M2946 317v10M2941 386h10M2946 381v10M2941 450h10M2946 445v10M2941 578h10M2946 573v10M2941 642h10M2946 637v10M2941 706h10M2946 701v10M2941 834h10M2946 829v10M2941 898h10M2946 893v10M2941 962h10M2946 957v10M2941 1090h10M2946 1085v10M2941 1154h10M2946 1149v10M2941 1218h10M2946 1213v10M2941 1346h10M2946 1341v10M2941 1410h10M2946 1405v10M2941 1474h10M2946 1469v10M2941 1602h10M2946 1597v10M2941 1666h10M2946 1661v10M2941 1730h10M2946 1725v10M3005 66h10M3010 61v10M3005 130h10M3010 125v10M3005 194h10M3010 189v10M3005 322h10M3010 317v10M3005 386h10M3010 381v10M3005 450h10M3010 445v10M3005 578h10M3010 573v10M3005 642h10M3010 637v10M3005 706h10M3010 701v10M3005 834h10M3010 829v10M3005 898h10M3010 893v10M3005 962h10M3010 957v10M3005 1090h10M3010 1085v10M3005 1154h10M3010 1149v10M3005 1218h10M3010 1213v10M3005 1346h10M3010 1341v10M3005 1410h10M3010 1405v10M3005 1474h10M3010 1469v10M3005 1602h10M3010 1597v10M3005 1666h10M3010 1661v10M3005 1730h10M3010 1725v10M3133 66h10M3138 61v10M3133 130h10M3138 125v10M3133 194h10M3138 189v10M3133 322h10M3138 317v10M3133 386h10M3138 381v10M3133 450h10M3138 445v10M3133 578h10M3138 573v10M3133 642h10M3138 637v10M3133 706h10M3138 701v10M3133 834h10M3138 829v10M3133 898h10M3138 893v10M3133 962h10M3138 957v10M3133 1090h10M3138 1085v10M3133 1154h10M3138 1149v10M3133 1218h10M3138 1213v10M3133 1346h10M3138 1341v10M3133 1410h10M3138 1405v10M3133 1474h10M3138 1469v10M3133 1602h10M3138 1597v10M3133 1666h10M3138 1661v10M3133 1730h10M3138 1725v10M3197 66h10M3202 61v10M3197 130h10M3202 125v10M3197 194h10M3202 189v10M3197 322h10M3202 317v10M3197 386h10M3202 381v10M3197 450h10M3202 445v10M3197 578h10M3202 573v10M3197 642h10M3202 637v10M3197 706h10M3202 701v10M3197 834h10M3202 829v10M3197 898h10M3202 893v10M3197 962h10M3202 957v10M3197 1090h10M3202 1085v10M3197 1154h10M3202 1149v10M3197 1218h10M3202 1213v10M3197 1346h10M3202 1341v10M3197 1410h10M3202 1405v10M3197 1474h10M3202 1469v10M3197 1602h10M3202 1597v10M3197 1666h10M3202 1661v10M3197 1730h10M3202 1725v10M3261 66h10M3266 61v10M3261 130h10M3266 125v10M3261 194h10M3266 189v10M3261 322h10M3266 317v10M3261 386h10M3266 381v10M3261 450h10M3266 445v10M3261 578h10M3266 573v10M3261 642h10M3266 637v10M3261 706h10M3266 701v10M3261 834h10M3266 829v10M3261 898h10M3266 893v10M3261 962h10M3266 957v10M3261 1090h10M3266 1085v10M3261 1154h10M3266 1149v10M3261 1218h10M3266 1213v10M3261 1346h10M3266 1341v10M3261 1410h10M3266 1405v10M3261 1474h10M3266 1469v10M3261 1602h10M3266 1597v10M3261 1666h10M3266 1661v10M3261 1730h10M3266 1725v10M3389 66h10M3394 61v10M3389 130h10M3394 125v10M3389 194h10M3394 189v10M3389 322h10M3394 317v10M3389 386h10M3394 381v10M3389 450h10M3394 445v10M3389 578h10M3394 573v10M3389 642h10M3394 637v10M3389 706h10M3394 701v10M3389 834h10M3394 829v10M3389 898h10M3394 893v10M3389 962h10M3394 957v10M3389 1090h10M3394 1085v10M3389 1154h10M3394 1149v10M3389 1218h10M3394 1213v10M3389 1346h10M3394 1341v10M3389 1410h10M3394 1405v10M3389 1474h10M3394 1469v10M3389 1602h10M3394 1597v10M3389 1666h10M3394 1661v10M3389 1730h10M3394 1725v10M3453 66h10M3458 61v10M3453 130h10M3458 125v10M3453 194h10M3458 189v10M3453 322h10M3458 317v10M3453 386h10M3458 381v10M3453 450h10M3458 445v10M3453 578h10M3458 573v10M3453 642h10M3458 637v10M3453 706h10M3458 701v10M3453 834h10M3458 829v10M3453 898h10M3458 893v10M3453 962h10M3458 957v10M3453 1090h10M3458 1085v10M3453 1154h10M3458 1149v10M3453 1218h10M3458 1213v10M3453 1346h10M3458 1341v10M3453 1410h10M3458 1405v10M3453 1474h10M3458 1469v10M3453 1602h10M3458 1597v10M3453 1666h10M3458 1661v10M3453 1730h10M3458 1725v10M3517 66h10M3522 61v10M3517 130h10M3522 125v10M3517 194h10M3522 189v10M3517 322h10M3522 317v10M3517 386h10M3522 381v10M3517 450h10M3522 445v10M3517 578h10M3522 573v10M3517 642h10M3522 637v10M3517 706h10M3522 701v10M3517 834h10M3522 829v10M3517 898h10M3522 893v10M3517 962h10M3522 957v10M3517 1090h10M3522 1085v10M3517 1154h10M3522 1149v10M3517 1218h10M3522 1213v10M3517 1346h10M3522 1341v10M3517 1410h10M3522 1405v10M3517 1474h10M3522 1469v10M3517 1602h10M3522 1597v10M3517 1666h10M3522 1661v10M3517 1730h10M3522 1725v10M3645 66h10M3650 61v10M3645 130h10M3650 125v10M3645 194h10M3650 189v10M3645 322h10M3650 317v10M3645 386h10M3650 381v10M3645 450h10M3650 445v10M3645 578h10M3650 573v10M3645 642h10M3650 637v10M3645 706h10M3650 701v10M3645 834h10M3650 829v10M3645 898h10M3650 893v10M3645 962h10M3650 957v10M3645 1090h10M3650 1085v10M3645 1154h10M3650 1149v10M3645 1218h10M3650 1213v10M3645 1346h10M3650 1341v10M3645 1410h10M3650 1405v10M3645 1474h10M3650 1469v10M3645 1602h10M3650 1597v10M3645 1666h10M3650 1661v10M3645 1730h10M3650 1725v10M3709 66h10M3714 61v10M3709 130h10M3714 125v10M3709 194h10M3714 189v10M3709 322h10M3714 317v10M3709 386h10M3714 381v10M3709 450h10M3714 445v10M3709 578h10M3714 573v10M3709 642h10M3714 637v10M3709 706h10M3714 701v10M3709 834h10M3714 829v10M3709 898h10M3714 893v10M3709 962h10M3714 957v10M3709 1090h10M3714 1085v10M3709 1154h10M3714 1149v10M3709 1218h10M3714 1213v10M3709 1346h10M3714 1341v10M3709 1410h10M3714 1405v10M3709 1474h10M3714 1469v10M3709 1602h10M3714 1597v10M3709 1666h10M3714 1661v10M3709 1730h10M3714 1725v10M3773 66h10M3778 61v10M3773 130h10M3778 125v10M3773 194h10M3778 189v10M3773 322h10M3778 317v10M3773 386h10M3778 381v10M3773 450h10M3778 445v10M3773 578h10M3778 573v10M3773 642h10M3778 637v10M3773 706h10M3778 701v10M3773 834h10M3778 829v10M3773 898h10M3778 893v10M3773 962h10M3778 957v10M3773 1090h10M3778 1085v10M3773 1154h10M3778 1149v10M3773 1218h10M3778 1213v10M3773 1346h10M3778 1341v10M3773 1410h10M3778 1405v10M3773 1474h10M3778 1469v10M3773 1602h10M3778 1597v10M3773 1666h10M3778 1661v10M3773 1730h10M3778 1725v10M3901 66h10M3906 61v10M3901 130h10M3906 125v10M3901 194h10M3906 189v10M3901 322h10M3906 317v10M3901 386h10M3906 381v10M3901 450h10M3906 445v10M3901 578h10M3906 573v10M3901 642h10M3906 637v10M3901 706h10M3906 701v10M3901 834h10M3906 829v10M3901 898h10M3906 893v10M3901 962h10M3906 957v10M3901 1090h10M3906 1085v10M3901 1154h10M3906 1149v10M3901 1218h10M3906 1213v10M3901 1346h10M3906 1341v10M3901 1410h10M3906 1405v10M3901 1474h10M3906 1469v10M3901 1602h10M3906 1597v10M3901 1666h10M3906 1661v10M3901 1730h10M3906 1725v10" stroke="#000" stroke-width="2" fill="none"/></svg>
<div style="position:absolute;left:50px;top:1962px;width:4108px;height:2px;background:#f4f4f4;"></div>
<div style="position:absolute;left:50px;top:1964px;width:4108px;height:41px;background:linear-gradient(#e9e9e9,#d3d3d3);"></div>
<div style="position:absolute;left:50px;top:2004px;width:4108px;height:2px;background:#6a6a6a;"></div>
<div style="position:absolute;left:3708px;top:1970px;width:57px;height:33px;box-sizing:border-box;border-top:2px solid #b4b4b4;border-left:2px solid #b4b4b4;border-right:2px solid #fafafa;border-bottom:2px solid #fafafa;color:#111;font-family:'Liberation Sans', sans-serif;font-size:23px;line-height:30px;padding-left:4px;white-space:nowrap"></div>
<div style="position:absolute;left:3770px;top:1970px;width:67px;height:33px;box-sizing:border-box;border-top:2px solid #b4b4b4;border-left:2px solid #b4b4b4;border-right:2px solid #fafafa;border-bottom:2px solid #fafafa;color:#111;font-family:'Liberation Sans', sans-serif;font-size:23px;line-height:30px;padding-left:4px;white-space:nowrap">NUM</div>
<div style="position:absolute;left:3842px;top:1970px;width:65px;height:33px;box-sizing:border-box;border-top:2px solid #b4b4b4;border-left:2px solid #b4b4b4;border-right:2px solid #fafafa;border-bottom:2px solid #fafafa;color:#111;font-family:'Liberation Sans', sans-serif;font-size:23px;line-height:30px;padding-left:4px;white-space:nowrap"></div>
<div style="position:absolute;left:3912px;top:1970px;width:85px;height:33px;box-sizing:border-box;border-top:2px solid #b4b4b4;border-left:2px solid #b4b4b4;border-right:2px solid #fafafa;border-bottom:2px solid #fafafa;color:#111;font-family:'Liberation Sans', sans-serif;font-size:23px;line-height:30px;padding-left:4px;white-space:nowrap">P002</div>
<div style="position:absolute;left:4002px;top:1970px;width:95px;height:33px;box-sizing:border-box;border-top:2px solid #b4b4b4;border-left:2px solid #b4b4b4;border-right:2px solid #fafafa;border-bottom:2px solid #fafafa;color:#111;font-family:'Liberation Sans', sans-serif;font-size:23px;line-height:30px;padding-left:4px;white-space:nowrap">11:32:15</div>
<svg style="position:absolute;left:4126px;top:1974px" width="30" height="30"><path d="M28 6 L6 28 M28 14 L14 28 M28 22 L22 28" stroke="#b0b0b0" stroke-width="3"/></svg>
<svg style="position:absolute;left:0;top:0" width="4208" height="2062"><defs><linearGradient id="tg" x1="0" y1="0" x2="0" y2="1"><stop offset="0" stop-color="#97b2d1"/><stop offset="1" stop-color="#bdd4ed"/></linearGradient><linearGradient id="bmin" x1="0" y1="0" x2="0" y2="1"><stop offset="0" stop-color="#cddcec"/><stop offset="0.45" stop-color="#b7cbe2"/><stop offset="0.5" stop-color="#93afcd"/><stop offset="1" stop-color="#b5cbe3"/></linearGradient><linearGradient id="bcls" x1="0" y1="0" x2="0" y2="1"><stop offset="0" stop-color="#eaa69c"/><stop offset="0.45" stop-color="#d88578"/><stop offset="0.5" stop-color="#c4371f"/><stop offset="1" stop-color="#d46a58"/></linearGradient></defs><path d="M397 1901 V183 Q397 175 405 175 H3939 Q3947 175 3947 183 V1901 Z" fill="#b9d0e9" stroke="#000" stroke-width="2"/><rect x="398" y="176" width="3548" height="60" fill="url(#tg)"/><rect x="398" y="177" width="2" height="1722" fill="#fff"/><rect x="404" y="176" width="3536" height="2" fill="#fff" opacity="0.8"/><rect x="398" y="1898" width="3548" height="2" fill="#52d2ea"/><rect x="3944" y="236" width="2" height="1663" fill="#52d2ea"/><g transform="translate(416,196)"><rect x="0.75" y="0.75" width="29.5" height="29.5" fill="#fff" stroke="#dcdcdc" stroke-width="1.5"/><g fill="#c4303a" stroke="#f2b0b0" stroke-width="1.4"><ellipse cx="7" cy="10.7" rx="3" ry="1.8"/><rect x="4" y="14" width="6" height="6" rx="2"/><circle cx="16" cy="13.3" r="3.2"/><rect x="13" y="19" width="6.5" height="6.5" rx="2.5"/><ellipse cx="25" cy="7.5" rx="3" ry="1.8"/><rect x="22" y="11" width="6" height="9" rx="2"/></g></g><text x="457" y="221" font-family='"Liberation Sans", sans-serif' font-size="22.5" fill="#1a1a2a" textLength="522" lengthAdjust="spacingAndGlyphs">KCE - Coffee (ICE), Quarterly (Delayed by 10 mins)</text><rect x="3662.5" y="194.5" width="63" height="35" fill="#e1e1e1" stroke="#b4b4b4" stroke-width="1.5"/><g fill="#f4f4f4" stroke="#9a9a9a" stroke-width="1.5"><circle cx="3689" cy="208" r="6"/><circle cx="3699" cy="217" r="5.5"/></g><rect x="3728.5" y="194.5" width="62" height="35" rx="2" fill="url(#bmin)" stroke="#4b5b7b" stroke-width="1.5"/><rect x="3748.5" y="211" width="21" height="8" fill="#eee" stroke="#3a3a5a" stroke-width="1.5"/><rect x="3796.5" y="194.5" width="62" height="35" rx="2" fill="url(#bmin)" stroke="#4b5b7b" stroke-width="1.5"/><rect x="3816.5" y="202.5" width="21" height="17" fill="#eee" stroke="#3a3a5a" stroke-width="1.5"/><rect x="3822" y="208" width="10" height="5" fill="#9bb" stroke="#3a3a5a" stroke-width="1.2"/><rect x="3864.5" y="194.5" width="62" height="35" rx="2" fill="url(#bcls)" stroke="#3a0010" stroke-width="1.8"/><path d="M3886 203 L3906 221 M3906 203 L3886 221" stroke="#3a3a5a" stroke-width="7"/><path d="M3886 203 L3906 221 M3906 203 L3886 221" stroke="#fff" stroke-width="4"/><rect x="412" y="236" width="3520" height="43" fill="#939393"/><rect x="412" y="279" width="3520" height="2" fill="#858585"/><rect x="412" y="281" width="3520" height="4" fill="#bdbdbd"/><rect x="416" y="243" width="84" height="36" fill="#bfbfbf"/><rect x="416" y="243" width="2" height="36" fill="#fff"/><rect x="418" y="242" width="80" height="3" fill="#f0a030"/><text x="427" y="268" font-family='"Liberation Sans", sans-serif' font-size="20.5" fill="#3a3a5a" textLength="62" lengthAdjust="spacingAndGlyphs">KCE,Q</text><rect x="502" y="243" width="49" height="36" fill="#555"/><rect x="502" y="243" width="2" height="36" fill="#fff"/><rect x="504" y="242" width="43" height="2" fill="#fff"/><path d="M520 261 H534 M527 254 V268" stroke="#c8c8c8" stroke-width="1.6"/><rect x="412" y="285" width="2" height="1599" fill="#a0a0a0"/><rect x="414" y="285" width="4" height="1599" fill="#6e6e6e"/><rect x="418" y="285" width="3510" height="1597" fill="#fff"/><rect x="3928" y="282" width="2" height="1602" fill="#e0e0e0"/><rect x="3930" y="282" width="2" height="1604" fill="#fff"/><rect x="414" y="1882" width="3516" height="2" fill="#e0e0e0"/><rect x="400" y="1884" width="3532" height="2" fill="#fff"/><path d="M428.0 1190.0h2v2h-2zM446.0 1190.0h2v2h-2zM464.0 1190.0h2v2h-2zM482.0 1190.0h2v2h-2zM500.0 1190.0h2v2h-2zM518.0 1190.0h2v2h-2zM536.0 1190.0h2v2h-2zM554.0 1190.0h2v2h-2zM572.0 1190.0h2v2h-2zM590.0 1190.0h2v2h-2zM608.0 1190.0h2v2h-2zM626.0 1190.0h2v2h-2zM644.0 1190.0h2v2h-2zM662.0 1190.0h2v2h-2zM680.0 1190.0h2v2h-2zM698.0 1190.0h2v2h-2zM716.0 1190.0h2v2h-2zM734.0 1190.0h2v2h-2zM752.0 1190.0h2v2h-2zM770.0 1190.0h2v2h-2zM788.0 1190.0h2v2h-2zM806.0 1190.0h2v2h-2zM824.0 1190.0h2v2h-2zM842.0 1190.0h2v2h-2zM860.0 1190.0h2v2h-2zM878.0 1190.0h2v2h-2zM896.0 1190.0h2v2h-2zM914.0 1190.0h2v2h-2zM932.0 1190.0h2v2h-2zM950.0 1190.0h2v2h-2zM968.0 1190.0h2v2h-2zM986.0 1190.0h2v2h-2zM1004.0 1190.0h2v2h-2zM1022.0 1190.0h2v2h-2zM1040.0 1190.0h2v2h-2zM1058.0 1190.0h2v2h-2zM1076.0 1190.0h2v2h-2zM1094.0 1190.0h2v2h-2zM1112.0 1190.0h2v2h-2zM1130.0 1190.0h2v2h-2zM1148.0 1190.0h2v2h-2zM1166.0 1190.0h2v2h-2zM1184.0 1190.0h2v2h-2zM1202.0 1190.0h2v2h-2zM1220.0 1190.0h2v2h-2zM1238.0 1190.0h2v2h-2zM1256.0 1190.0h2v2h-2zM1274.0 1190.0h2v2h-2zM1292.0 1190.0h2v2h-2zM1310.0 1190.0h2v2h-2zM1328.0 1190.0h2v2h-2zM1346.0 1190.0h2v2h-2zM1364.0 1190.0h2v2h-2zM1382.0 1190.0h2v2h-2zM1400.0 1190.0h2v2h-2zM1418.0 1190.0h2v2h-2zM1436.0 1190.0h2v2h-2zM1454.0 1190.0h2v2h-2zM1472.0 1190.0h2v2h-2zM1490.0 1190.0h2v2h-2zM1508.0 1190.0h2v2h-2zM1526.0 1190.0h2v2h-2zM1544.0 1190.0h2v2h-2zM1562.0 1190.0h2v2h-2zM1580.0 1190.0h2v2h-2zM1598.0 1190.0h2v2h-2zM1616.0 1190.0h2v2h-2zM1634.0 1190.0h2v2h-2zM1652.0 1190.0h2v2h-2zM1670.0 1190.0h2v2h-2zM1688.0 1190.0h2v2h-2zM1706.0 1190.0h2v2h-2zM1724.0 1190.0h2v2h-2zM1742.0 1190.0h2v2h-2zM1760.0 1190.0h2v2h-2zM1778.0 1190.0h2v2h-2zM1796.0 1190.0h2v2h-2zM1814.0 1190.0h2v2h-2zM1832.0 1190.0h2v2h-2zM1850.0 1190.0h2v2h-2zM1868.0 1190.0h2v2h-2zM1886.0 1190.0h2v2h-2zM1904.0 1190.0h2v2h-2zM1922.0 1190.0h2v2h-2zM1940.0 1190.0h2v2h-2zM1958.0 1190.0h2v2h-2zM1976.0 1190.0h2v2h-2zM1994.0 1190.0h2v2h-2zM2012.0 1190.0h2v2h-2zM2030.0 1190.0h2v2h-2zM2048.0 1190.0h2v2h-2zM2066.0 1190.0h2v2h-2zM2084.0 1190.0h2v2h-2zM2102.0 1190.0h2v2h-2zM2120.0 1190.0h2v2h-2zM2138.0 1190.0h2v2h-2zM2156.0 1190.0h2v2h-2zM2174.0 1190.0h2v2h-2zM2192.0 1190.0h2v2h-2zM2210.0 1190.0h2v2h-2zM2228.0 1190.0h2v2h-2zM2246.0 1190.0h2v2h-2zM2264.0 1190.0h2v2h-2zM2282.0 1190.0h2v2h-2zM2300.0 1190.0h2v2h-2zM2318.0 1190.0h2v2h-2zM2336.0 1190.0h2v2h-2zM2354.0 1190.0h2v2h-2zM2372.0 1190.0h2v2h-2zM2390.0 1190.0h2v2h-2zM2408.0 1190.0h2v2h-2zM2426.0 1190.0h2v2h-2zM2444.0 1190.0h2v2h-2zM2462.0 1190.0h2v2h-2zM2480.0 1190.0h2v2h-2zM2498.0 1190.0h2v2h-2zM2516.0 1190.0h2v2h-2zM2534.0 1190.0h2v2h-2zM2552.0 1190.0h2v2h-2zM2570.0 1190.0h2v2h-2zM2588.0 1190.0h2v2h-2zM2606.0 1190.0h2v2h-2zM2624.0 1190.0h2v2h-2zM2642.0 1190.0h2v2h-2zM2660.0 1190.0h2v2h-2zM2678.0 1190.0h2v2h-2zM2696.0 1190.0h2v2h-2zM2714.0 1190.0h2v2h-2zM2732.0 1190.0h2v2h-2zM2750.0 1190.0h2v2h-2zM2768.0 1190.0h2v2h-2zM2786.0 1190.0h2v2h-2zM2804.0 1190.0h2v2h-2zM2822.0 1190.0h2v2h-2zM2840.0 1190.0h2v2h-2zM2858.0 1190.0h2v2h-2zM2876.0 1190.0h2v2h-2zM2894.0 1190.0h2v2h-2zM2912.0 1190.0h2v2h-2zM2930.0 1190.0h2v2h-2zM2948.0 1190.0h2v2h-2zM2966.0 1190.0h2v2h-2zM2984.0 1190.0h2v2h-2zM3002.0 1190.0h2v2h-2zM3020.0 1190.0h2v2h-2zM3038.0 1190.0h2v2h-2zM3056.0 1190.0h2v2h-2zM3074.0 1190.0h2v2h-2zM3092.0 1190.0h2v2h-2zM3110.0 1190.0h2v2h-2zM3128.0 1190.0h2v2h-2zM3146.0 1190.0h2v2h-2zM3164.0 1190.0h2v2h-2zM3182.0 1190.0h2v2h-2zM3200.0 1190.0h2v2h-2zM3218.0 1190.0h2v2h-2zM3236.0 1190.0h2v2h-2zM3254.0 1190.0h2v2h-2zM3272.0 1190.0h2v2h-2zM3290.0 1190.0h2v2h-2zM3308.0 1190.0h2v2h-2zM3326.0 1190.0h2v2h-2zM3344.0 1190.0h2v2h-2zM3362.0 1190.0h2v2h-2zM3380.0 1190.0h2v2h-2zM3398.0 1190.0h2v2h-2zM3416.0 1190.0h2v2h-2zM3434.0 1190.0h2v2h-2zM3452.0 1190.0h2v2h-2zM3470.0 1190.0h2v2h-2zM3488.0 1190.0h2v2h-2zM3506.0 1190.0h2v2h-2zM3524.0 1190.0h2v2h-2zM3542.0 1190.0h2v2h-2zM3560.0 1190.0h2v2h-2zM3578.0 1190.0h2v2h-2zM3596.0 1190.0h2v2h-2zM3614.0 1190.0h2v2h-2zM3632.0 1190.0h2v2h-2zM3650.0 1190.0h2v2h-2zM3668.0 1190.0h2v2h-2zM3686.0 1190.0h2v2h-2zM3704.0 1190.0h2v2h-2zM3722.0 1190.0h2v2h-2zM3740.0 1190.0h2v2h-2zM3758.0 1190.0h2v2h-2zM3776.0 1190.0h2v2h-2zM428.0 1037.6h2v2h-2zM446.0 1037.6h2v2h-2zM464.0 1037.6h2v2h-2zM482.0 1037.6h2v2h-2zM500.0 1037.6h2v2h-2zM518.0 1037.6h2v2h-2zM536.0 1037.6h2v2h-2zM554.0 1037.6h2v2h-2zM572.0 1037.6h2v2h-2zM590.0 1037.6h2v2h-2zM608.0 1037.6h2v2h-2zM626.0 1037.6h2v2h-2zM644.0 1037.6h2v2h-2zM662.0 1037.6h2v2h-2zM680.0 1037.6h2v2h-2zM698.0 1037.6h2v2h-2zM716.0 1037.6h2v2h-2zM734.0 1037.6h2v2h-2zM752.0 1037.6h2v2h-2zM770.0 1037.6h2v2h-2zM788.0 1037.6h2v2h-2zM806.0 1037.6h2v2h-2zM824.0 1037.6h2v2h-2zM842.0 1037.6h2v2h-2zM860.0 1037.6h2v2h-2zM878.0 1037.6h2v2h-2zM896.0 1037.6h2v2h-2zM914.0 1037.6h2v2h-2zM932.0 1037.6h2v2h-2zM950.0 1037.6h2v2h-2zM968.0 1037.6h2v2h-2zM986.0 1037.6h2v2h-2zM1004.0 1037.6h2v2h-2zM1022.0 1037.6h2v2h-2zM1040.0 1037.6h2v2h-2zM1058.0 1037.6h2v2h-2zM1076.0 1037.6h2v2h-2zM1094.0 1037.6h2v2h-2zM1112.0 1037.6h2v2h-2zM1130.0 1037.6h2v2h-2zM1148.0 1037.6h2v2h-2zM1166.0 1037.6h2v2h-2zM1184.0 1037.6h2v2h-2zM1202.0 1037.6h2v2h-2zM1220.0 1037.6h2v2h-2zM1238.0 1037.6h2v2h-2zM1256.0 1037.6h2v2h-2zM1274.0 1037.6h2v2h-2zM1292.0 1037.6h2v2h-2zM1310.0 1037.6h2v2h-2zM1328.0 1037.6h2v2h-2zM1346.0 1037.6h2v2h-2zM1364.0 1037.6h2v2h-2zM1382.0 1037.6h2v2h-2zM1400.0 1037.6h2v2h-2zM1418.0 1037.6h2v2h-2zM1436.0 1037.6h2v2h-2zM1454.0 1037.6h2v2h-2zM1472.0 1037.6h2v2h-2zM1490.0 1037.6h2v2h-2zM1508.0 1037.6h2v2h-2zM1526.0 1037.6h2v2h-2zM1544.0 1037.6h2v2h-2zM1562.0 1037.6h2v2h-2zM1580.0 1037.6h2v2h-2zM1598.0 1037.6h2v2h-2zM1616.0 1037.6h2v2h-2zM1634.0 1037.6h2v2h-2zM1652.0 1037.6h2v2h-2zM1670.0 1037.6h2v2h-2zM1688.0 1037.6h2v2h-2zM1706.0 1037.6h2v2h-2zM1724.0 1037.6h2v2h-2zM1742.0 1037.6h2v2h-2zM1760.0 1037.6h2v2h-2zM1778.0 1037.6h2v2h-2zM1796.0 1037.6h2v2h-2zM1814.0 1037.6h2v2h-2zM1832.0 1037.6h2v2h-2zM1850.0 1037.6h2v2h-2zM1868.0 1037.6h2v2h-2zM1886.0 1037.6h2v2h-2zM1904.0 1037.6h2v2h-2zM1922.0 1037.6h2v2h-2zM1940.0 1037.6h2v2h-2zM1958.0 1037.6h2v2h-2zM1976.0 1037.6h2v2h-2zM1994.0 1037.6h2v2h-2zM2012.0 1037.6h2v2h-2zM2030.0 1037.6h2v2h-2zM2048.0 1037.6h2v2h-2zM2066.0 1037.6h2v2h-2zM2084.0 1037.6h2v2h-2zM2102.0 1037.6h2v2h-2zM2120.0 1037.6h2v2h-2zM2138.0 1037.6h2v2h-2zM2156.0 1037.6h2v2h-2zM2174.0 1037.6h2v2h-2zM2192.0 1037.6h2v2h-2zM2210.0 1037.6h2v2h-2zM2228.0 1037.6h2v2h-2zM2246.0 1037.6h2v2h-2zM2264.0 1037.6h2v2h-2zM2282.0 1037.6h2v2h-2zM2300.0 1037.6h2v2h-2zM2318.0 1037.6h2v2h-2zM2336.0 1037.6h2v2h-2zM2354.0 1037.6h2v2h-2zM2372.0 1037.6h2v2h-2zM2390.0 1037.6h2v2h-2zM2408.0 1037.6h2v2h-2zM2426.0 1037.6h2v2h-2zM2444.0 1037.6h2v2h-2zM2462.0 1037.6h2v2h-2zM2480.0 1037.6h2v2h-2zM2498.0 1037.6h2v2h-2zM2516.0 1037.6h2v2h-2zM2534.0 1037.6h2v2h-2zM2552.0 1037.6h2v2h-2zM2570.0 1037.6h2v2h-2zM2588.0 1037.6h2v2h-2zM2606.0 1037.6h2v2h-2zM2624.0 1037.6h2v2h-2zM2642.0 1037.6h2v2h-2zM2660.0 1037.6h2v2h-2zM2678.0 1037.6h2v2h-2zM2696.0 1037.6h2v2h-2zM2714.0 1037.6h2v2h-2zM2732.0 1037.6h2v2h-2zM2750.0 1037.6h2v2h-2zM2768.0 1037.6h2v2h-2zM2786.0 1037.6h2v2h-2zM2804.0 1037.6h2v2h-2zM2822.0 1037.6h2v2h-2zM2840.0 1037.6h2v2h-2zM2858.0 1037.6h2v2h-2zM2876.0 1037.6h2v2h-2zM2894.0 1037.6h2v2h-2zM2912.0 1037.6h2v2h-2zM2930.0 1037.6h2v2h-2zM2948.0 1037.6h2v2h-2zM2966.0 1037.6h2v2h-2zM2984.0 1037.6h2v2h-2zM3002.0 1037.6h2v2h-2zM3020.0 1037.6h2v2h-2zM3038.0 1037.6h2v2h-2zM3056.0 1037.6h2v2h-2zM3074.0 1037.6h2v2h-2zM3092.0 1037.6h2v2h-2zM3110.0 1037.6h2v2h-2zM3128.0 1037.6h2v2h-2zM3146.0 1037.6h2v2h-2zM3164.0 1037.6h2v2h-2zM3182.0 1037.6h2v2h-2zM3200.0 1037.6h2v2h-2zM3218.0 1037.6h2v2h-2zM3236.0 1037.6h2v2h-2zM3254.0 1037.6h2v2h-2zM3272.0 1037.6h2v2h-2zM3290.0 1037.6h2v2h-2zM3308.0 1037.6h2v2h-2zM3326.0 1037.6h2v2h-2zM3344.0 1037.6h2v2h-2zM3362.0 1037.6h2v2h-2zM3380.0 1037.6h2v2h-2zM3398.0 1037.6h2v2h-2zM3416.0 1037.6h2v2h-2zM3434.0 1037.6h2v2h-2zM3452.0 1037.6h2v2h-2zM3470.0 1037.6h2v2h-2zM3488.0 1037.6h2v2h-2zM3506.0 1037.6h2v2h-2zM3524.0 1037.6h2v2h-2zM3542.0 1037.6h2v2h-2zM3560.0 1037.6h2v2h-2zM3578.0 1037.6h2v2h-2zM3596.0 1037.6h2v2h-2zM3614.0 1037.6h2v2h-2zM3632.0 1037.6h2v2h-2zM3650.0 1037.6h2v2h-2zM3668.0 1037.6h2v2h-2zM3686.0 1037.6h2v2h-2zM3704.0 1037.6h2v2h-2zM3722.0 1037.6h2v2h-2zM3740.0 1037.6h2v2h-2zM3758.0 1037.6h2v2h-2zM3776.0 1037.6h2v2h-2zM428.0 885.2h2v2h-2zM446.0 885.2h2v2h-2zM464.0 885.2h2v2h-2zM482.0 885.2h2v2h-2zM500.0 885.2h2v2h-2zM518.0 885.2h2v2h-2zM536.0 885.2h2v2h-2zM554.0 885.2h2v2h-2zM572.0 885.2h2v2h-2zM590.0 885.2h2v2h-2zM608.0 885.2h2v2h-2zM626.0 885.2h2v2h-2zM644.0 885.2h2v2h-2zM662.0 885.2h2v2h-2zM680.0 885.2h2v2h-2zM698.0 885.2h2v2h-2zM716.0 885.2h2v2h-2zM734.0 885.2h2v2h-2zM752.0 885.2h2v2h-2zM770.0 885.2h2v2h-2zM788.0 885.2h2v2h-2zM806.0 885.2h2v2h-2zM824.0 885.2h2v2h-2zM842.0 885.2h2v2h-2zM860.0 885.2h2v2h-2zM878.0 885.2h2v2h-2zM896.0 885.2h2v2h-2zM914.0 885.2h2v2h-2zM932.0 885.2h2v2h-2zM950.0 885.2h2v2h-2zM968.0 885.2h2v2h-2zM986.0 885.2h2v2h-2zM1004.0 885.2h2v2h-2zM1022.0 885.2h2v2h-2zM1040.0 885.2h2v2h-2zM1058.0 885.2h2v2h-2zM1076.0 885.2h2v2h-2zM1094.0 885.2h2v2h-2zM1112.0 885.2h2v2h-2zM1130.0 885.2h2v2h-2zM1148.0 885.2h2v2h-2zM1166.0 885.2h2v2h-2zM1184.0 885.2h2v2h-2zM1202.0 885.2h2v2h-2zM1220.0 885.2h2v2h-2zM1238.0 885.2h2v2h-2zM1256.0 885.2h2v2h-2zM1274.0 885.2h2v2h-2zM1292.0 885.2h2v2h-2zM1310.0 885.2h2v2h-2zM1328.0 885.2h2v2h-2zM1346.0 885.2h2v2h-2zM1364.0 885.2h2v2h-2zM1382.0 885.2h2v2h-2zM1400.0 885.2h2v2h-2zM1418.0 885.2h2v2h-2zM1436.0 885.2h2v2h-2zM1454.0 885.2h2v2h-2zM1472.0 885.2h2v2h-2zM1490.0 885.2h2v2h-2zM1508.0 885.2h2v2h-2zM1526.0 885.2h2v2h-2zM1544.0 885.2h2v2h-2zM1562.0 885.2h2v2h-2zM1580.0 885.2h2v2h-2zM1598.0 885.2h2v2h-2zM1616.0 885.2h2v2h-2zM1634.0 885.2h2v2h-2zM1652.0 885.2h2v2h-2zM1670.0 885.2h2v2h-2zM1688.0 885.2h2v2h-2zM1706.0 885.2h2v2h-2zM1724.0 885.2h2v2h-2zM1742.0 885.2h2v2h-2zM1760.0 885.2h2v2h-2zM1778.0 885.2h2v2h-2zM1796.0 885.2h2v2h-2zM1814.0 885.2h2v2h-2zM1832.0 885.2h2v2h-2zM1850.0 885.2h2v2h-2zM1868.0 885.2h2v2h-2zM1886.0 885.2h2v2h-2zM1904.0 885.2h2v2h-2zM1922.0 885.2h2v2h-2zM1940.0 885.2h2v2h-2zM1958.0 885.2h2v2h-2zM1976.0 885.2h2v2h-2zM1994.0 885.2h2v2h-2zM2012.0 885.2h2v2h-2zM2030.0 885.2h2v2h-2zM2048.0 885.2h2v2h-2zM2066.0 885.2h2v2h-2zM2084.0 885.2h2v2h-2zM2102.0 885.2h2v2h-2zM2120.0 885.2h2v2h-2zM2138.0 885.2h2v2h-2zM2156.0 885.2h2v2h-2zM2174.0 885.2h2v2h-2zM2192.0 885.2h2v2h-2zM2210.0 885.2h2v2h-2zM2228.0 885.2h2v2h-2zM2246.0 885.2h2v2h-2zM2264.0 885.2h2v2h-2zM2282.0 885.2h2v2h-2zM2300.0 885.2h2v2h-2zM2318.0 885.2h2v2h-2zM2336.0 885.2h2v2h-2zM2354.0 885.2h2v2h-2zM2372.0 885.2h2v2h-2zM2390.0 885.2h2v2h-2zM2408.0 885.2h2v2h-2zM2426.0 885.2h2v2h-2zM2444.0 885.2h2v2h-2zM2462.0 885.2h2v2h-2zM2480.0 885.2h2v2h-2zM2498.0 885.2h2v2h-2zM2516.0 885.2h2v2h-2zM2534.0 885.2h2v2h-2zM2552.0 885.2h2v2h-2zM2570.0 885.2h2v2h-2zM2588.0 885.2h2v2h-2zM2606.0 885.2h2v2h-2zM2624.0 885.2h2v2h-2zM2642.0 885.2h2v2h-2zM2660.0 885.2h2v2h-2zM2678.0 885.2h2v2h-2zM2696.0 885.2h2v2h-2zM2714.0 885.2h2v2h-2zM2732.0 885.2h2v2h-2zM2750.0 885.2h2v2h-2zM2768.0 885.2h2v2h-2zM2786.0 885.2h2v2h-2zM2804.0 885.2h2v2h-2zM2822.0 885.2h2v2h-2zM2840.0 885.2h2v2h-2zM2858.0 885.2h2v2h-2zM2876.0 885.2h2v2h-2zM2894.0 885.2h2v2h-2zM2912.0 885.2h2v2h-2zM2930.0 885.2h2v2h-2zM2948.0 885.2h2v2h-2zM2966.0 885.2h2v2h-2zM2984.0 885.2h2v2h-2zM3002.0 885.2h2v2h-2zM3020.0 885.2h2v2h-2zM3038.0 885.2h2v2h-2zM3056.0 885.2h2v2h-2zM3074.0 885.2h2v2h-2zM3092.0 885.2h2v2h-2zM3110.0 885.2h2v2h-2zM3128.0 885.2h2v2h-2zM3146.0 885.2h2v2h-2zM3164.0 885.2h2v2h-2zM3182.0 885.2h2v2h-2zM3200.0 885.2h2v2h-2zM3218.0 885.2h2v2h-2zM3236.0 885.2h2v2h-2zM3254.0 885.2h2v2h-2zM3272.0 885.2h2v2h-2zM3290.0 885.2h2v2h-2zM3308.0 885.2h2v2h-2zM3326.0 885.2h2v2h-2zM3344.0 885.2h2v2h-2zM3362.0 885.2h2v2h-2zM3380.0 885.2h2v2h-2zM3398.0 885.2h2v2h-2zM3416.0 885.2h2v2h-2zM3434.0 885.2h2v2h-2zM3452.0 885.2h2v2h-2zM3470.0 885.2h2v2h-2zM3488.0 885.2h2v2h-2zM3506.0 885.2h2v2h-2zM3524.0 885.2h2v2h-2zM3542.0 885.2h2v2h-2zM3560.0 885.2h2v2h-2zM3578.0 885.2h2v2h-2zM3596.0 885.2h2v2h-2zM3614.0 885.2h2v2h-2zM3632.0 885.2h2v2h-2zM3650.0 885.2h2v2h-2zM3668.0 885.2h2v2h-2zM3686.0 885.2h2v2h-2zM3704.0 885.2h2v2h-2zM3722.0 885.2h2v2h-2zM3740.0 885.2h2v2h-2zM3758.0 885.2h2v2h-2zM3776.0 885.2h2v2h-2zM428.0 732.7h2v2h-2zM446.0 732.7h2v2h-2zM464.0 732.7h2v2h-2zM482.0 732.7h2v2h-2zM500.0 732.7h2v2h-2zM518.0 732.7h2v2h-2zM536.0 732.7h2v2h-2zM554.0 732.7h2v2h-2zM572.0 732.7h2v2h-2zM590.0 732.7h2v2h-2zM608.0 732.7h2v2h-2zM626.0 732.7h2v2h-2zM644.0 732.7h2v2h-2zM662.0 732.7h2v2h-2zM680.0 732.7h2v2h-2zM698.0 732.7h2v2h-2zM716.0 732.7h2v2h-2zM734.0 732.7h2v2h-2zM752.0 732.7h2v2h-2zM770.0 732.7h2v2h-2zM788.0 732.7h2v2h-2zM806.0 732.7h2v2h-2zM824.0 732.7h2v2h-2zM842.0 732.7h2v2h-2zM860.0 732.7h2v2h-2zM878.0 732.7h2v2h-2zM896.0 732.7h2v2h-2zM914.0 732.7h2v2h-2zM932.0 732.7h2v2h-2zM950.0 732.7h2v2h-2zM968.0 732.7h2v2h-2zM986.0 732.7h2v2h-2zM1004.0 732.7h2v2h-2zM1022.0 732.7h2v2h-2zM1040.0 732.7h2v2h-2zM1058.0 732.7h2v2h-2zM1076.0 732.7h2v2h-2zM1094.0 732.7h2v2h-2zM1112.0 732.7h2v2h-2zM1130.0 732.7h2v2h-2zM1148.0 732.7h2v2h-2zM1166.0 732.7h2v2h-2zM1184.0 732.7h2v2h-2zM1202.0 732.7h2v2h-2zM1220.0 732.7h2v2h-2zM1238.0 732.7h2v2h-2zM1256.0 732.7h2v2h-2zM1274.0 732.7h2v2h-2zM1292.0 732.7h2v2h-2zM1310.0 732.7h2v2h-2zM1328.0 732.7h2v2h-2zM1346.0 732.7h2v2h-2zM1364.0 732.7h2v2h-2zM1382.0 732.7h2v2h-2zM1400.0 732.7h2v2h-2zM1418.0 732.7h2v2h-2zM1436.0 732.7h2v2h-2zM1454.0 732.7h2v2h-2zM1472.0 732.7h2v2h-2zM1490.0 732.7h2v2h-2zM1508.0 732.7h2v2h-2zM1526.0 732.7h2v2h-2zM1544.0 732.7h2v2h-2zM1562.0 732.7h2v2h-2zM1580.0 732.7h2v2h-2zM1598.0 732.7h2v2h-2zM1616.0 732.7h2v2h-2zM1634.0 732.7h2v2h-2zM1652.0 732.7h2v2h-2zM1670.0 732.7h2v2h-2zM1688.0 732.7h2v2h-2zM1706.0 732.7h2v2h-2zM1724.0 732.7h2v2h-2zM1742.0 732.7h2v2h-2zM1760.0 732.7h2v2h-2zM1778.0 732.7h2v2h-2zM1796.0 732.7h2v2h-2zM1814.0 732.7h2v2h-2zM1832.0 732.7h2v2h-2zM1850.0 732.7h2v2h-2zM1868.0 732.7h2v2h-2zM1886.0 732.7h2v2h-2zM1904.0 732.7h2v2h-2zM1922.0 732.7h2v2h-2zM1940.0 732.7h2v2h-2zM1958.0 732.7h2v2h-2zM1976.0 732.7h2v2h-2zM1994.0 732.7h2v2h-2zM2012.0 732.7h2v2h-2zM2030.0 732.7h2v2h-2zM2048.0 732.7h2v2h-2zM2066.0 732.7h2v2h-2zM2084.0 732.7h2v2h-2zM2102.0 732.7h2v2h-2zM2120.0 732.7h2v2h-2zM2138.0 732.7h2v2h-2zM2156.0 732.7h2v2h-2zM2174.0 732.7h2v2h-2zM2192.0 732.7h2v2h-2zM2210.0 732.7h2v2h-2zM2228.0 732.7h2v2h-2zM2246.0 732.7h2v2h-2zM2264.0 732.7h2v2h-2zM2282.0 732.7h2v2h-2zM2300.0 732.7h2v2h-2zM2318.0 732.7h2v2h-2zM2336.0 732.7h2v2h-2zM2354.0 732.7h2v2h-2zM2372.0 732.7h2v2h-2zM2390.0 732.7h2v2h-2zM2408.0 732.7h2v2h-2zM2426.0 732.7h2v2h-2zM2444.0 732.7h2v2h-2zM2462.0 732.7h2v2h-2zM2480.0 732.7h2v2h-2zM2498.0 732.7h2v2h-2zM2516.0 732.7h2v2h-2zM2534.0 732.7h2v2h-2zM2552.0 732.7h2v2h-2zM2570.0 732.7h2v2h-2zM2588.0 732.7h2v2h-2zM2606.0 732.7h2v2h-2zM2624.0 732.7h2v2h-2zM2642.0 732.7h2v2h-2zM2660.0 732.7h2v2h-2zM2678.0 732.7h2v2h-2zM2696.0 732.7h2v2h-2zM2714.0 732.7h2v2h-2zM2732.0 732.7h2v2h-2zM2750.0 732.7h2v2h-2zM2768.0 732.7h2v2h-2zM2786.0 732.7h2v2h-2zM2804.0 732.7h2v2h-2zM2822.0 732.7h2v2h-2zM2840.0 732.7h2v2h-2zM2858.0 732.7h2v2h-2zM2876.0 732.7h2v2h-2zM2894.0 732.7h2v2h-2zM2912.0 732.7h2v2h-2zM2930.0 732.7h2v2h-2zM2948.0 732.7h2v2h-2zM2966.0 732.7h2v2h-2zM2984.0 732.7h2v2h-2zM3002.0 732.7h2v2h-2zM3020.0 732.7h2v2h-2zM3038.0 732.7h2v2h-2zM3056.0 732.7h2v2h-2zM3074.0 732.7h2v2h-2zM3092.0 732.7h2v2h-2zM3110.0 732.7h2v2h-2zM3128.0 732.7h2v2h-2zM3146.0 732.7h2v2h-2zM3164.0 732.7h2v2h-2zM3182.0 732.7h2v2h-2zM3200.0 732.7h2v2h-2zM3218.0 732.7h2v2h-2zM3236.0 732.7h2v2h-2zM3254.0 732.7h2v2h-2zM3272.0 732.7h2v2h-2zM3290.0 732.7h2v2h-2zM3308.0 732.7h2v2h-2zM3326.0 732.7h2v2h-2zM3344.0 732.7h2v2h-2zM3362.0 732.7h2v2h-2zM3380.0 732.7h2v2h-2zM3398.0 732.7h2v2h-2zM3416.0 732.7h2v2h-2zM3434.0 732.7h2v2h-2zM3452.0 732.7h2v2h-2zM3470.0 732.7h2v2h-2zM3488.0 732.7h2v2h-2zM3506.0 732.7h2v2h-2zM3524.0 732.7h2v2h-2zM3542.0 732.7h2v2h-2zM3560.0 732.7h2v2h-2zM3578.0 732.7h2v2h-2zM3596.0 732.7h2v2h-2zM3614.0 732.7h2v2h-2zM3632.0 732.7h2v2h-2zM3650.0 732.7h2v2h-2zM3668.0 732.7h2v2h-2zM3686.0 732.7h2v2h-2zM3704.0 732.7h2v2h-2zM3722.0 732.7h2v2h-2zM3740.0 732.7h2v2h-2zM3758.0 732.7h2v2h-2zM3776.0 732.7h2v2h-2zM428.0 580.3h2v2h-2zM446.0 580.3h2v2h-2zM464.0 580.3h2v2h-2zM482.0 580.3h2v2h-2zM500.0 580.3h2v2h-2zM518.0 580.3h2v2h-2zM536.0 580.3h2v2h-2zM554.0 580.3h2v2h-2zM572.0 580.3h2v2h-2zM590.0 580.3h2v2h-2zM608.0 580.3h2v2h-2zM626.0 580.3h2v2h-2zM644.0 580.3h2v2h-2zM662.0 580.3h2v2h-2zM680.0 580.3h2v2h-2zM698.0 580.3h2v2h-2zM716.0 580.3h2v2h-2zM734.0 580.3h2v2h-2zM752.0 580.3h2v2h-2zM770.0 580.3h2v2h-2zM788.0 580.3h2v2h-2zM806.0 580.3h2v2h-2zM824.0 580.3h2v2h-2zM842.0 580.3h2v2h-2zM860.0 580.3h2v2h-2zM878.0 580.3h2v2h-2zM896.0 580.3h2v2h-2zM914.0 580.3h2v2h-2zM932.0 580.3h2v2h-2zM950.0 580.3h2v2h-2zM968.0 580.3h2v2h-2zM986.0 580.3h2v2h-2zM1004.0 580.3h2v2h-2zM1022.0 580.3h2v2h-2zM1040.0 580.3h2v2h-2zM1058.0 580.3h2v2h-2zM1076.0 580.3h2v2h-2zM1094.0 580.3h2v2h-2zM1112.0 580.3h2v2h-2zM1130.0 580.3h2v2h-2zM1148.0 580.3h2v2h-2zM1166.0 580.3h2v2h-2zM1184.0 580.3h2v2h-2zM1202.0 580.3h2v2h-2zM1220.0 580.3h2v2h-2zM1238.0 580.3h2v2h-2zM1256.0 580.3h2v2h-2zM1274.0 580.3h2v2h-2zM1292.0 580.3h2v2h-2zM1310.0 580.3h2v2h-2zM1328.0 580.3h2v2h-2zM1346.0 580.3h2v2h-2zM1364.0 580.3h2v2h-2zM1382.0 580.3h2v2h-2zM1400.0 580.3h2v2h-2zM1418.0 580.3h2v2h-2zM1436.0 580.3h2v2h-2zM1454.0 580.3h2v2h-2zM1472.0 580.3h2v2h-2zM1490.0 580.3h2v2h-2zM1508.0 580.3h2v2h-2zM1526.0 580.3h2v2h-2zM1544.0 580.3h2v2h-2zM1562.0 580.3h2v2h-2zM1580.0 580.3h2v2h-2zM1598.0 580.3h2v2h-2zM1616.0 580.3h2v2h-2zM1634.0 580.3h2v2h-2zM1652.0 580.3h2v2h-2zM1670.0 580.3h2v2h-2zM1688.0 580.3h2v2h-2zM1706.0 580.3h2v2h-2zM1724.0 580.3h2v2h-2zM1742.0 580.3h2v2h-2zM1760.0 580.3h2v2h-2zM1778.0 580.3h2v2h-2zM1796.0 580.3h2v2h-2zM1814.0 580.3h2v2h-2zM1832.0 580.3h2v2h-2zM1850.0 580.3h2v2h-2zM1868.0 580.3h2v2h-2zM1886.0 580.3h2v2h-2zM1904.0 580.3h2v2h-2zM1922.0 580.3h2v2h-2zM1940.0 580.3h2v2h-2zM1958.0 580.3h2v2h-2zM1976.0 580.3h2v2h-2zM1994.0 580.3h2v2h-2zM2012.0 580.3h2v2h-2zM2030.0 580.3h2v2h-2zM2048.0 580.3h2v2h-2zM2066.0 580.3h2v2h-2zM2084.0 580.3h2v2h-2zM2102.0 580.3h2v2h-2zM2120.0 580.3h2v2h-2zM2138.0 580.3h2v2h-2zM2156.0 580.3h2v2h-2zM2174.0 580.3h2v2h-2zM2192.0 580.3h2v2h-2zM2210.0 580.3h2v2h-2zM2228.0 580.3h2v2h-2zM2246.0 580.3h2v2h-2zM2264.0 580.3h2v2h-2zM2282.0 580.3h2v2h-2zM2300.0 580.3h2v2h-2zM2318.0 580.3h2v2h-2zM2336.0 580.3h2v2h-2zM2354.0 580.3h2v2h-2zM2372.0 580.3h2v2h-2zM2390.0 580.3h2v2h-2zM2408.0 580.3h2v2h-2zM2426.0 580.3h2v2h-2zM2444.0 580.3h2v2h-2zM2462.0 580.3h2v2h-2zM2480.0 580.3h2v2h-2zM2498.0 580.3h2v2h-2zM2516.0 580.3h2v2h-2zM2534.0 580.3h2v2h-2zM2552.0 580.3h2v2h-2zM2570.0 580.3h2v2h-2zM2588.0 580.3h2v2h-2zM2606.0 580.3h2v2h-2zM2624.0 580.3h2v2h-2zM2642.0 580.3h2v2h-2zM2660.0 580.3h2v2h-2zM2678.0 580.3h2v2h-2zM2696.0 580.3h2v2h-2zM2714.0 580.3h2v2h-2zM2732.0 580.3h2v2h-2zM2750.0 580.3h2v2h-2zM2768.0 580.3h2v2h-2zM2786.0 580.3h2v2h-2zM2804.0 580.3h2v2h-2zM2822.0 580.3h2v2h-2zM2840.0 580.3h2v2h-2zM2858.0 580.3h2v2h-2zM2876.0 580.3h2v2h-2zM2894.0 580.3h2v2h-2zM2912.0 580.3h2v2h-2zM2930.0 580.3h2v2h-2zM2948.0 580.3h2v2h-2zM2966.0 580.3h2v2h-2zM2984.0 580.3h2v2h-2zM3002.0 580.3h2v2h-2zM3020.0 580.3h2v2h-2zM3038.0 580.3h2v2h-2zM3056.0 580.3h2v2h-2zM3074.0 580.3h2v2h-2zM3092.0 580.3h2v2h-2zM3110.0 580.3h2v2h-2zM3128.0 580.3h2v2h-2zM3146.0 580.3h2v2h-2zM3164.0 580.3h2v2h-2zM3182.0 580.3h2v2h-2zM3200.0 580.3h2v2h-2zM3218.0 580.3h2v2h-2zM3236.0 580.3h2v2h-2zM3254.0 580.3h2v2h-2zM3272.0 580.3h2v2h-2zM3290.0 580.3h2v2h-2zM3308.0 580.3h2v2h-2zM3326.0 580.3h2v2h-2zM3344.0 580.3h2v2h-2zM3362.0 580.3h2v2h-2zM3380.0 580.3h2v2h-2zM3398.0 580.3h2v2h-2zM3416.0 580.3h2v2h-2zM3434.0 580.3h2v2h-2zM3452.0 580.3h2v2h-2zM3470.0 580.3h2v2h-2zM3488.0 580.3h2v2h-2zM3506.0 580.3h2v2h-2zM3524.0 580.3h2v2h-2zM3542.0 580.3h2v2h-2zM3560.0 580.3h2v2h-2zM3578.0 580.3h2v2h-2zM3596.0 580.3h2v2h-2zM3614.0 580.3h2v2h-2zM3632.0 580.3h2v2h-2zM3650.0 580.3h2v2h-2zM3668.0 580.3h2v2h-2zM3686.0 580.3h2v2h-2zM3704.0 580.3h2v2h-2zM3722.0 580.3h2v2h-2zM3740.0 580.3h2v2h-2zM3758.0 580.3h2v2h-2zM3776.0 580.3h2v2h-2zM428.0 427.9h2v2h-2zM446.0 427.9h2v2h-2zM464.0 427.9h2v2h-2zM482.0 427.9h2v2h-2zM500.0 427.9h2v2h-2zM518.0 427.9h2v2h-2zM536.0 427.9h2v2h-2zM554.0 427.9h2v2h-2zM572.0 427.9h2v2h-2zM590.0 427.9h2v2h-2zM608.0 427.9h2v2h-2zM626.0 427.9h2v2h-2zM644.0 427.9h2v2h-2zM662.0 427.9h2v2h-2zM680.0 427.9h2v2h-2zM698.0 427.9h2v2h-2zM716.0 427.9h2v2h-2zM734.0 427.9h2v2h-2zM752.0 427.9h2v2h-2zM770.0 427.9h2v2h-2zM788.0 427.9h2v2h-2zM806.0 427.9h2v2h-2zM824.0 427.9h2v2h-2zM842.0 427.9h2v2h-2zM860.0 427.9h2v2h-2zM878.0 427.9h2v2h-2zM896.0 427.9h2v2h-2zM914.0 427.9h2v2h-2zM932.0 427.9h2v2h-2zM950.0 427.9h2v2h-2zM968.0 427.9h2v2h-2zM986.0 427.9h2v2h-2zM1004.0 427.9h2v2h-2zM1022.0 427.9h2v2h-2zM1040.0 427.9h2v2h-2zM1058.0 427.9h2v2h-2zM1076.0 427.9h2v2h-2zM1094.0 427.9h2v2h-2zM1112.0 427.9h2v2h-2zM1130.0 427.9h2v2h-2zM1148.0 427.9h2v2h-2zM1166.0 427.9h2v2h-2zM1184.0 427.9h2v2h-2zM1202.0 427.9h2v2h-2zM1220.0 427.9h2v2h-2zM1238.0 427.9h2v2h-2zM1256.0 427.9h2v2h-2zM1274.0 427.9h2v2h-2zM1292.0 427.9h2v2h-2zM1310.0 427.9h2v2h-2zM1328.0 427.9h2v2h-2zM1346.0 427.9h2v2h-2zM1364.0 427.9h2v2h-2zM1382.0 427.9h2v2h-2zM1400.0 427.9h2v2h-2zM1418.0 427.9h2v2h-2zM1436.0 427.9h2v2h-2zM1454.0 427.9h2v2h-2zM1472.0 427.9h2v2h-2zM1490.0 427.9h2v2h-2zM1508.0 427.9h2v2h-2zM1526.0 427.9h2v2h-2zM1544.0 427.9h2v2h-2zM1562.0 427.9h2v2h-2zM1580.0 427.9h2v2h-2zM1598.0 427.9h2v2h-2zM1616.0 427.9h2v2h-2zM1634.0 427.9h2v2h-2zM1652.0 427.9h2v2h-2zM1670.0 427.9h2v2h-2zM1688.0 427.9h2v2h-2zM1706.0 427.9h2v2h-2zM1724.0 427.9h2v2h-2zM1742.0 427.9h2v2h-2zM1760.0 427.9h2v2h-2zM1778.0 427.9h2v2h-2zM1796.0 427.9h2v2h-2zM1814.0 427.9h2v2h-2zM1832.0 427.9h2v2h-2zM1850.0 427.9h2v2h-2zM1868.0 427.9h2v2h-2zM1886.0 427.9h2v2h-2zM1904.0 427.9h2v2h-2zM1922.0 427.9h2v2h-2zM1940.0 427.9h2v2h-2zM1958.0 427.9h2v2h-2zM1976.0 427.9h2v2h-2zM1994.0 427.9h2v2h-2zM2012.0 427.9h2v2h-2zM2030.0 427.9h2v2h-2zM2048.0 427.9h2v2h-2zM2066.0 427.9h2v2h-2zM2084.0 427.9h2v2h-2zM2102.0 427.9h2v2h-2zM2120.0 427.9h2v2h-2zM2138.0 427.9h2v2h-2zM2156.0 427.9h2v2h-2zM2174.0 427.9h2v2h-2zM2192.0 427.9h2v2h-2zM2210.0 427.9h2v2h-2zM2228.0 427.9h2v2h-2zM2246.0 427.9h2v2h-2zM2264.0 427.9h2v2h-2zM2282.0 427.9h2v2h-2zM2300.0 427.9h2v2h-2zM2318.0 427.9h2v2h-2zM2336.0 427.9h2v2h-2zM2354.0 427.9h2v2h-2zM2372.0 427.9h2v2h-2zM2390.0 427.9h2v2h-2zM2408.0 427.9h2v2h-2zM2426.0 427.9h2v2h-2zM2444.0 427.9h2v2h-2zM2462.0 427.9h2v2h-2zM2480.0 427.9h2v2h-2zM2498.0 427.9h2v2h-2zM2516.0 427.9h2v2h-2zM2534.0 427.9h2v2h-2zM2552.0 427.9h2v2h-2zM2570.0 427.9h2v2h-2zM2588.0 427.9h2v2h-2zM2606.0 427.9h2v2h-2zM2624.0 427.9h2v2h-2zM2642.0 427.9h2v2h-2zM2660.0 427.9h2v2h-2zM2678.0 427.9h2v2h-2zM2696.0 427.9h2v2h-2zM2714.0 427.9h2v2h-2zM2732.0 427.9h2v2h-2zM2750.0 427.9h2v2h-2zM2768.0 427.9h2v2h-2zM2786.0 427.9h2v2h-2zM2804.0 427.9h2v2h-2zM2822.0 427.9h2v2h-2zM2840.0 427.9h2v2h-2zM2858.0 427.9h2v2h-2zM2876.0 427.9h2v2h-2zM2894.0 427.9h2v2h-2zM2912.0 427.9h2v2h-2zM2930.0 427.9h2v2h-2zM2948.0 427.9h2v2h-2zM2966.0 427.9h2v2h-2zM2984.0 427.9h2v2h-2zM3002.0 427.9h2v2h-2zM3020.0 427.9h2v2h-2zM3038.0 427.9h2v2h-2zM3056.0 427.9h2v2h-2zM3074.0 427.9h2v2h-2zM3092.0 427.9h2v2h-2zM3110.0 427.9h2v2h-2zM3128.0 427.9h2v2h-2zM3146.0 427.9h2v2h-2zM3164.0 427.9h2v2h-2zM3182.0 427.9h2v2h-2zM3200.0 427.9h2v2h-2zM3218.0 427.9h2v2h-2zM3236.0 427.9h2v2h-2zM3254.0 427.9h2v2h-2zM3272.0 427.9h2v2h-2zM3290.0 427.9h2v2h-2zM3308.0 427.9h2v2h-2zM3326.0 427.9h2v2h-2zM3344.0 427.9h2v2h-2zM3362.0 427.9h2v2h-2zM3380.0 427.9h2v2h-2zM3398.0 427.9h2v2h-2zM3416.0 427.9h2v2h-2zM3434.0 427.9h2v2h-2zM3452.0 427.9h2v2h-2zM3470.0 427.9h2v2h-2zM3488.0 427.9h2v2h-2zM3506.0 427.9h2v2h-2zM3524.0 427.9h2v2h-2zM3542.0 427.9h2v2h-2zM3560.0 427.9h2v2h-2zM3578.0 427.9h2v2h-2zM3596.0 427.9h2v2h-2zM3614.0 427.9h2v2h-2zM3632.0 427.9h2v2h-2zM3650.0 427.9h2v2h-2zM3668.0 427.9h2v2h-2zM3686.0 427.9h2v2h-2zM3704.0 427.9h2v2h-2zM3722.0 427.9h2v2h-2zM3740.0 427.9h2v2h-2zM3758.0 427.9h2v2h-2zM3776.0 427.9h2v2h-2zM553.5 1235.7h2v2h-2zM553.5 1220.5h2v2h-2zM553.5 1205.2h2v2h-2zM553.5 1190.0h2v2h-2zM553.5 1174.8h2v2h-2zM553.5 1159.5h2v2h-2zM553.5 1144.3h2v2h-2zM553.5 1129.0h2v2h-2zM553.5 1113.8h2v2h-2zM553.5 1098.5h2v2h-2zM553.5 1083.3h2v2h-2zM553.5 1068.1h2v2h-2zM553.5 1052.8h2v2h-2zM553.5 1037.6h2v2h-2zM553.5 1022.3h2v2h-2zM553.5 1007.1h2v2h-2zM553.5 991.9h2v2h-2zM553.5 976.6h2v2h-2zM553.5 961.4h2v2h-2zM553.5 946.1h2v2h-2zM553.5 930.9h2v2h-2zM553.5 915.6h2v2h-2zM553.5 900.4h2v2h-2zM553.5 885.2h2v2h-2zM553.5 869.9h2v2h-2zM553.5 854.7h2v2h-2zM553.5 839.4h2v2h-2zM553.5 824.2h2v2h-2zM553.5 809.0h2v2h-2zM553.5 793.7h2v2h-2zM553.5 778.5h2v2h-2zM553.5 763.2h2v2h-2zM553.5 748.0h2v2h-2zM553.5 732.7h2v2h-2zM553.5 717.5h2v2h-2zM553.5 702.3h2v2h-2zM553.5 687.0h2v2h-2zM553.5 671.8h2v2h-2zM553.5 656.5h2v2h-2zM553.5 641.3h2v2h-2zM553.5 626.0h2v2h-2zM553.5 610.8h2v2h-2zM553.5 595.6h2v2h-2zM553.5 580.3h2v2h-2zM553.5 565.1h2v2h-2zM553.5 549.8h2v2h-2zM553.5 534.6h2v2h-2zM553.5 519.4h2v2h-2zM553.5 504.1h2v2h-2zM553.5 488.9h2v2h-2zM553.5 473.6h2v2h-2zM553.5 458.4h2v2h-2zM553.5 443.1h2v2h-2zM553.5 427.9h2v2h-2zM553.5 412.7h2v2h-2zM553.5 397.4h2v2h-2zM553.5 382.2h2v2h-2zM553.5 366.9h2v2h-2zM553.5 351.7h2v2h-2zM553.5 336.4h2v2h-2zM553.5 321.2h2v2h-2zM553.5 306.0h2v2h-2zM553.5 290.7h2v2h-2zM841.5 1235.7h2v2h-2zM841.5 1220.5h2v2h-2zM841.5 1205.2h2v2h-2zM841.5 1190.0h2v2h-2zM841.5 1174.8h2v2h-2zM841.5 1159.5h2v2h-2zM841.5 1144.3h2v2h-2zM841.5 1129.0h2v2h-2zM841.5 1113.8h2v2h-2zM841.5 1098.5h2v2h-2zM841.5 1083.3h2v2h-2zM841.5 1068.1h2v2h-2zM841.5 1052.8h2v2h-2zM841.5 1037.6h2v2h-2zM841.5 1022.3h2v2h-2zM841.5 1007.1h2v2h-2zM841.5 991.9h2v2h-2zM841.5 976.6h2v2h-2zM841.5 961.4h2v2h-2zM841.5 946.1h2v2h-2zM841.5 930.9h2v2h-2zM841.5 915.6h2v2h-2zM841.5 900.4h2v2h-2zM841.5 885.2h2v2h-2zM841.5 869.9h2v2h-2zM841.5 854.7h2v2h-2zM841.5 839.4h2v2h-2zM841.5 824.2h2v2h-2zM841.5 809.0h2v2h-2zM841.5 793.7h2v2h-2zM841.5 778.5h2v2h-2zM841.5 763.2h2v2h-2zM841.5 748.0h2v2h-2zM841.5 732.7h2v2h-2zM841.5 717.5h2v2h-2zM841.5 702.3h2v2h-2zM841.5 687.0h2v2h-2zM841.5 671.8h2v2h-2zM841.5 656.5h2v2h-2zM841.5 641.3h2v2h-2zM841.5 626.0h2v2h-2zM841.5 610.8h2v2h-2zM841.5 595.6h2v2h-2zM841.5 580.3h2v2h-2zM841.5 565.1h2v2h-2zM841.5 549.8h2v2h-2zM841.5 534.6h2v2h-2zM841.5 519.4h2v2h-2zM841.5 504.1h2v2h-2zM841.5 488.9h2v2h-2zM841.5 473.6h2v2h-2zM841.5 458.4h2v2h-2zM841.5 443.1h2v2h-2zM841.5 427.9h2v2h-2zM841.5 412.7h2v2h-2zM841.5 397.4h2v2h-2zM841.5 382.2h2v2h-2zM841.5 366.9h2v2h-2zM841.5 351.7h2v2h-2zM841.5 336.4h2v2h-2zM841.5 321.2h2v2h-2zM841.5 306.0h2v2h-2zM841.5 290.7h2v2h-2zM1129.5 1235.7h2v2h-2zM1129.5 1220.5h2v2h-2zM1129.5 1205.2h2v2h-2zM1129.5 1190.0h2v2h-2zM1129.5 1174.8h2v2h-2zM1129.5 1159.5h2v2h-2zM1129.5 1144.3h2v2h-2zM1129.5 1129.0h2v2h-2zM1129.5 1113.8h2v2h-2zM1129.5 1098.5h2v2h-2zM1129.5 1083.3h2v2h-2zM1129.5 1068.1h2v2h-2zM1129.5 1052.8h2v2h-2zM1129.5 1037.6h2v2h-2zM1129.5 1022.3h2v2h-2zM1129.5 1007.1h2v2h-2zM1129.5 991.9h2v2h-2zM1129.5 976.6h2v2h-2zM1129.5 961.4h2v2h-2zM1129.5 946.1h2v2h-2zM1129.5 930.9h2v2h-2zM1129.5 915.6h2v2h-2zM1129.5 900.4h2v2h-2zM1129.5 885.2h2v2h-2zM1129.5 869.9h2v2h-2zM1129.5 854.7h2v2h-2zM1129.5 839.4h2v2h-2zM1129.5 824.2h2v2h-2zM1129.5 809.0h2v2h-2zM1129.5 793.7h2v2h-2zM1129.5 778.5h2v2h-2zM1129.5 763.2h2v2h-2zM1129.5 748.0h2v2h-2zM1129.5 732.7h2v2h-2zM1129.5 717.5h2v2h-2zM1129.5 702.3h2v2h-2zM1129.5 687.0h2v2h-2zM1129.5 671.8h2v2h-2zM1129.5 656.5h2v2h-2zM1129.5 641.3h2v2h-2zM1129.5 626.0h2v2h-2zM1129.5 610.8h2v2h-2zM1129.5 595.6h2v2h-2zM1129.5 580.3h2v2h-2zM1129.5 565.1h2v2h-2zM1129.5 549.8h2v2h-2zM1129.5 534.6h2v2h-2zM1129.5 519.4h2v2h-2zM1129.5 504.1h2v2h-2zM1129.5 488.9h2v2h-2zM1129.5 473.6h2v2h-2zM1129.5 458.4h2v2h-2zM1129.5 443.1h2v2h-2zM1129.5 427.9h2v2h-2zM1129.5 412.7h2v2h-2zM1129.5 397.4h2v2h-2zM1129.5 382.2h2v2h-2zM1129.5 366.9h2v2h-2zM1129.5 351.7h2v2h-2zM1129.5 336.4h2v2h-2zM1129.5 321.2h2v2h-2zM1129.5 306.0h2v2h-2zM1129.5 290.7h2v2h-2zM1417.5 1235.7h2v2h-2zM1417.5 1220.5h2v2h-2zM1417.5 1205.2h2v2h-2zM1417.5 1190.0h2v2h-2zM1417.5 1174.8h2v2h-2zM1417.5 1159.5h2v2h-2zM1417.5 1144.3h2v2h-2zM1417.5 1129.0h2v2h-2zM1417.5 1113.8h2v2h-2zM1417.5 1098.5h2v2h-2zM1417.5 1083.3h2v2h-2zM1417.5 1068.1h2v2h-2zM1417.5 1052.8h2v2h-2zM1417.5 1037.6h2v2h-2zM1417.5 1022.3h2v2h-2zM1417.5 1007.1h2v2h-2zM1417.5 991.9h2v2h-2zM1417.5 976.6h2v2h-2zM1417.5 961.4h2v2h-2zM1417.5 946.1h2v2h-2zM1417.5 930.9h2v2h-2zM1417.5 915.6h2v2h-2zM1417.5 900.4h2v2h-2zM1417.5 885.2h2v2h-2zM1417.5 869.9h2v2h-2zM1417.5 854.7h2v2h-2zM1417.5 839.4h2v2h-2zM1417.5 824.2h2v2h-2zM1417.5 809.0h2v2h-2zM1417.5 793.7h2v2h-2zM1417.5 778.5h2v2h-2zM1417.5 763.2h2v2h-2zM1417.5 748.0h2v2h-2zM1417.5 732.7h2v2h-2zM1417.5 717.5h2v2h-2zM1417.5 702.3h2v2h-2zM1417.5 687.0h2v2h-2zM1417.5 671.8h2v2h-2zM1417.5 656.5h2v2h-2zM1417.5 641.3h2v2h-2zM1417.5 626.0h2v2h-2zM1417.5 610.8h2v2h-2zM1417.5 595.6h2v2h-2zM1417.5 580.3h2v2h-2zM1417.5 565.1h2v2h-2zM1417.5 549.8h2v2h-2zM1417.5 534.6h2v2h-2zM1417.5 519.4h2v2h-2zM1417.5 504.1h2v2h-2zM1417.5 488.9h2v2h-2zM1417.5 473.6h2v2h-2zM1417.5 458.4h2v2h-2zM1417.5 443.1h2v2h-2zM1417.5 427.9h2v2h-2zM1417.5 412.7h2v2h-2zM1417.5 397.4h2v2h-2zM1417.5 382.2h2v2h-2zM1417.5 366.9h2v2h-2zM1417.5 351.7h2v2h-2zM1417.5 336.4h2v2h-2zM1417.5 321.2h2v2h-2zM1417.5 306.0h2v2h-2zM1417.5 290.7h2v2h-2zM1705.5 1235.7h2v2h-2zM1705.5 1220.5h2v2h-2zM1705.5 1205.2h2v2h-2zM1705.5 1190.0h2v2h-2zM1705.5 1174.8h2v2h-2zM1705.5 1159.5h2v2h-2zM1705.5 1144.3h2v2h-2zM1705.5 1129.0h2v2h-2zM1705.5 1113.8h2v2h-2zM1705.5 1098.5h2v2h-2zM1705.5 1083.3h2v2h-2zM1705.5 1068.1h2v2h-2zM1705.5 1052.8h2v2h-2zM1705.5 1037.6h2v2h-2zM1705.5 1022.3h2v2h-2zM1705.5 1007.1h2v2h-2zM1705.5 991.9h2v2h-2zM1705.5 976.6h2v2h-2zM1705.5 961.4h2v2h-2zM1705.5 946.1h2v2h-2zM1705.5 930.9h2v2h-2zM1705.5 915.6h2v2h-2zM1705.5 900.4h2v2h-2zM1705.5 885.2h2v2h-2zM1705.5 869.9h2v2h-2zM1705.5 854.7h2v2h-2zM1705.5 839.4h2v2h-2zM1705.5 824.2h2v2h-2zM1705.5 809.0h2v2h-2zM1705.5 793.7h2v2h-2zM1705.5 778.5h2v2h-2zM1705.5 763.2h2v2h-2zM1705.5 748.0h2v2h-2zM1705.5 732.7h2v2h-2zM1705.5 717.5h2v2h-2zM1705.5 702.3h2v2h-2zM1705.5 687.0h2v2h-2zM1705.5 671.8h2v2h-2zM1705.5 656.5h2v2h-2zM1705.5 641.3h2v2h-2zM1705.5 626.0h2v2h-2zM1705.5 610.8h2v2h-2zM1705.5 595.6h2v2h-2zM1705.5 580.3h2v2h-2zM1705.5 565.1h2v2h-2zM1705.5 549.8h2v2h-2zM1705.5 534.6h2v2h-2zM1705.5 519.4h2v2h-2zM1705.5 504.1h2v2h-2zM1705.5 488.9h2v2h-2zM1705.5 473.6h2v2h-2zM1705.5 458.4h2v2h-2zM1705.5 443.1h2v2h-2zM1705.5 427.9h2v2h-2zM1705.5 412.7h2v2h-2zM1705.5 397.4h2v2h-2zM1705.5 382.2h2v2h-2zM1705.5 366.9h2v2h-2zM1705.5 351.7h2v2h-2zM1705.5 336.4h2v2h-2zM1705.5 321.2h2v2h-2zM1705.5 306.0h2v2h-2zM1705.5 290.7h2v2h-2zM1993.5 1235.7h2v2h-2zM1993.5 1220.5h2v2h-2zM1993.5 1205.2h2v2h-2zM1993.5 1190.0h2v2h-2zM1993.5 1174.8h2v2h-2zM1993.5 1159.5h2v2h-2zM1993.5 1144.3h2v2h-2zM1993.5 1129.0h2v2h-2zM1993.5 1113.8h2v2h-2zM1993.5 1098.5h2v2h-2zM1993.5 1083.3h2v2h-2zM1993.5 1068.1h2v2h-2zM1993.5 1052.8h2v2h-2zM1993.5 1037.6h2v2h-2zM1993.5 1022.3h2v2h-2zM1993.5 1007.1h2v2h-2zM1993.5 991.9h2v2h-2zM1993.5 976.6h2v2h-2zM1993.5 961.4h2v2h-2zM1993.5 946.1h2v2h-2zM1993.5 930.9h2v2h-2zM1993.5 915.6h2v2h-2zM1993.5 900.4h2v2h-2zM1993.5 885.2h2v2h-2zM1993.5 869.9h2v2h-2zM1993.5 854.7h2v2h-2zM1993.5 839.4h2v2h-2zM1993.5 824.2h2v2h-2zM1993.5 809.0h2v2h-2zM1993.5 793.7h2v2h-2zM1993.5 778.5h2v2h-2zM1993.5 763.2h2v2h-2zM1993.5 748.0h2v2h-2zM1993.5 732.7h2v2h-2zM1993.5 717.5h2v2h-2zM1993.5 702.3h2v2h-2zM1993.5 687.0h2v2h-2zM1993.5 671.8h2v2h-2zM1993.5 656.5h2v2h-2zM1993.5 641.3h2v2h-2zM1993.5 626.0h2v2h-2zM1993.5 610.8h2v2h-2zM1993.5 595.6h2v2h-2zM1993.5 580.3h2v2h-2zM1993.5 565.1h2v2h-2zM1993.5 549.8h2v2h-2zM1993.5 534.6h2v2h-2zM1993.5 519.4h2v2h-2zM1993.5 504.1h2v2h-2zM1993.5 488.9h2v2h-2zM1993.5 473.6h2v2h-2zM1993.5 458.4h2v2h-2zM1993.5 443.1h2v2h-2zM1993.5 427.9h2v2h-2zM1993.5 412.7h2v2h-2zM1993.5 397.4h2v2h-2zM1993.5 382.2h2v2h-2zM1993.5 366.9h2v2h-2zM1993.5 351.7h2v2h-2zM1993.5 336.4h2v2h-2zM1993.5 321.2h2v2h-2zM1993.5 306.0h2v2h-2zM1993.5 290.7h2v2h-2zM2281.5 1235.7h2v2h-2zM2281.5 1220.5h2v2h-2zM2281.5 1205.2h2v2h-2zM2281.5 1190.0h2v2h-2zM2281.5 1174.8h2v2h-2zM2281.5 1159.5h2v2h-2zM2281.5 1144.3h2v2h-2zM2281.5 1129.0h2v2h-2zM2281.5 1113.8h2v2h-2zM2281.5 1098.5h2v2h-2zM2281.5 1083.3h2v2h-2zM2281.5 1068.1h2v2h-2zM2281.5 1052.8h2v2h-2zM2281.5 1037.6h2v2h-2zM2281.5 1022.3h2v2h-2zM2281.5 1007.1h2v2h-2zM2281.5 991.9h2v2h-2zM2281.5 976.6h2v2h-2zM2281.5 961.4h2v2h-2zM2281.5 946.1h2v2h-2zM2281.5 930.9h2v2h-2zM2281.5 915.6h2v2h-2zM2281.5 900.4h2v2h-2zM2281.5 885.2h2v2h-2zM2281.5 869.9h2v2h-2zM2281.5 854.7h2v2h-2zM2281.5 839.4h2v2h-2zM2281.5 824.2h2v2h-2zM2281.5 809.0h2v2h-2zM2281.5 793.7h2v2h-2zM2281.5 778.5h2v2h-2zM2281.5 763.2h2v2h-2zM2281.5 748.0h2v2h-2zM2281.5 732.7h2v2h-2zM2281.5 717.5h2v2h-2zM2281.5 702.3h2v2h-2zM2281.5 687.0h2v2h-2zM2281.5 671.8h2v2h-2zM2281.5 656.5h2v2h-2zM2281.5 641.3h2v2h-2zM2281.5 626.0h2v2h-2zM2281.5 610.8h2v2h-2zM2281.5 595.6h2v2h-2zM2281.5 580.3h2v2h-2zM2281.5 565.1h2v2h-2zM2281.5 549.8h2v2h-2zM2281.5 534.6h2v2h-2zM2281.5 519.4h2v2h-2zM2281.5 504.1h2v2h-2zM2281.5 488.9h2v2h-2zM2281.5 473.6h2v2h-2zM2281.5 458.4h2v2h-2zM2281.5 443.1h2v2h-2zM2281.5 427.9h2v2h-2zM2281.5 412.7h2v2h-2zM2281.5 397.4h2v2h-2zM2281.5 382.2h2v2h-2zM2281.5 366.9h2v2h-2zM2281.5 351.7h2v2h-2zM2281.5 336.4h2v2h-2zM2281.5 321.2h2v2h-2zM2281.5 306.0h2v2h-2zM2281.5 290.7h2v2h-2zM2569.5 1235.7h2v2h-2zM2569.5 1220.5h2v2h-2zM2569.5 1205.2h2v2h-2zM2569.5 1190.0h2v2h-2zM2569.5 1174.8h2v2h-2zM2569.5 1159.5h2v2h-2zM2569.5 1144.3h2v2h-2zM2569.5 1129.0h2v2h-2zM2569.5 1113.8h2v2h-2zM2569.5 1098.5h2v2h-2zM2569.5 1083.3h2v2h-2zM2569.5 1068.1h2v2h-2zM2569.5 1052.8h2v2h-2zM2569.5 1037.6h2v2h-2zM2569.5 1022.3h2v2h-2zM2569.5 1007.1h2v2h-2zM2569.5 991.9h2v2h-2zM2569.5 976.6h2v2h-2zM2569.5 961.4h2v2h-2zM2569.5 946.1h2v2h-2zM2569.5 930.9h2v2h-2zM2569.5 915.6h2v2h-2zM2569.5 900.4h2v2h-2zM2569.5 885.2h2v2h-2zM2569.5 869.9h2v2h-2zM2569.5 854.7h2v2h-2zM2569.5 839.4h2v2h-2zM2569.5 824.2h2v2h-2zM2569.5 809.0h2v2h-2zM2569.5 793.7h2v2h-2zM2569.5 778.5h2v2h-2zM2569.5 763.2h2v2h-2zM2569.5 748.0h2v2h-2zM2569.5 732.7h2v2h-2zM2569.5 717.5h2v2h-2zM2569.5 702.3h2v2h-2zM2569.5 687.0h2v2h-2zM2569.5 671.8h2v2h-2zM2569.5 656.5h2v2h-2zM2569.5 641.3h2v2h-2zM2569.5 626.0h2v2h-2zM2569.5 610.8h2v2h-2zM2569.5 595.6h2v2h-2zM2569.5 580.3h2v2h-2zM2569.5 565.1h2v2h-2zM2569.5 549.8h2v2h-2zM2569.5 534.6h2v2h-2zM2569.5 519.4h2v2h-2zM2569.5 504.1h2v2h-2zM2569.5 488.9h2v2h-2zM2569.5 473.6h2v2h-2zM2569.5 458.4h2v2h-2zM2569.5 443.1h2v2h-2zM2569.5 427.9h2v2h-2zM2569.5 412.7h2v2h-2zM2569.5 397.4h2v2h-2zM2569.5 382.2h2v2h-2zM2569.5 366.9h2v2h-2zM2569.5 351.7h2v2h-2zM2569.5 336.4h2v2h-2zM2569.5 321.2h2v2h-2zM2569.5 306.0h2v2h-2zM2569.5 290.7h2v2h-2zM2857.5 1235.7h2v2h-2zM2857.5 1220.5h2v2h-2zM2857.5 1205.2h2v2h-2zM2857.5 1190.0h2v2h-2zM2857.5 1174.8h2v2h-2zM2857.5 1159.5h2v2h-2zM2857.5 1144.3h2v2h-2zM2857.5 1129.0h2v2h-2zM2857.5 1113.8h2v2h-2zM2857.5 1098.5h2v2h-2zM2857.5 1083.3h2v2h-2zM2857.5 1068.1h2v2h-2zM2857.5 1052.8h2v2h-2zM2857.5 1037.6h2v2h-2zM2857.5 1022.3h2v2h-2zM2857.5 1007.1h2v2h-2zM2857.5 991.9h2v2h-2zM2857.5 976.6h2v2h-2zM2857.5 961.4h2v2h-2zM2857.5 946.1h2v2h-2zM2857.5 930.9h2v2h-2zM2857.5 915.6h2v2h-2zM2857.5 900.4h2v2h-2zM2857.5 885.2h2v2h-2zM2857.5 869.9h2v2h-2zM2857.5 854.7h2v2h-2zM2857.5 839.4h2v2h-2zM2857.5 824.2h2v2h-2zM2857.5 809.0h2v2h-2zM2857.5 793.7h2v2h-2zM2857.5 778.5h2v2h-2zM2857.5 763.2h2v2h-2zM2857.5 748.0h2v2h-2zM2857.5 732.7h2v2h-2zM2857.5 717.5h2v2h-2zM2857.5 702.3h2v2h-2zM2857.5 687.0h2v2h-2zM2857.5 671.8h2v2h-2zM2857.5 656.5h2v2h-2zM2857.5 641.3h2v2h-2zM2857.5 626.0h2v2h-2zM2857.5 610.8h2v2h-2zM2857.5 595.6h2v2h-2zM2857.5 580.3h2v2h-2zM2857.5 565.1h2v2h-2zM2857.5 549.8h2v2h-2zM2857.5 534.6h2v2h-2zM2857.5 519.4h2v2h-2zM2857.5 504.1h2v2h-2zM2857.5 488.9h2v2h-2zM2857.5 473.6h2v2h-2zM2857.5 458.4h2v2h-2zM2857.5 443.1h2v2h-2zM2857.5 427.9h2v2h-2zM2857.5 412.7h2v2h-2zM2857.5 397.4h2v2h-2zM2857.5 382.2h2v2h-2zM2857.5 366.9h2v2h-2zM2857.5 351.7h2v2h-2zM2857.5 336.4h2v2h-2zM2857.5 321.2h2v2h-2zM2857.5 306.0h2v2h-2zM2857.5 290.7h2v2h-2zM3145.5 1235.7h2v2h-2zM3145.5 1220.5h2v2h-2zM3145.5 1205.2h2v2h-2zM3145.5 1190.0h2v2h-2zM3145.5 1174.8h2v2h-2zM3145.5 1159.5h2v2h-2zM3145.5 1144.3h2v2h-2zM3145.5 1129.0h2v2h-2zM3145.5 1113.8h2v2h-2zM3145.5 1098.5h2v2h-2zM3145.5 1083.3h2v2h-2zM3145.5 1068.1h2v2h-2zM3145.5 1052.8h2v2h-2zM3145.5 1037.6h2v2h-2zM3145.5 1022.3h2v2h-2zM3145.5 1007.1h2v2h-2zM3145.5 991.9h2v2h-2zM3145.5 976.6h2v2h-2zM3145.5 961.4h2v2h-2zM3145.5 946.1h2v2h-2zM3145.5 930.9h2v2h-2zM3145.5 915.6h2v2h-2zM3145.5 900.4h2v2h-2zM3145.5 885.2h2v2h-2zM3145.5 869.9h2v2h-2zM3145.5 854.7h2v2h-2zM3145.5 839.4h2v2h-2zM3145.5 824.2h2v2h-2zM3145.5 809.0h2v2h-2zM3145.5 793.7h2v2h-2zM3145.5 778.5h2v2h-2zM3145.5 763.2h2v2h-2zM3145.5 748.0h2v2h-2zM3145.5 732.7h2v2h-2zM3145.5 717.5h2v2h-2zM3145.5 702.3h2v2h-2zM3145.5 687.0h2v2h-2zM3145.5 671.8h2v2h-2zM3145.5 656.5h2v2h-2zM3145.5 641.3h2v2h-2zM3145.5 626.0h2v2h-2zM3145.5 610.8h2v2h-2zM3145.5 595.6h2v2h-2zM3145.5 580.3h2v2h-2zM3145.5 565.1h2v2h-2zM3145.5 549.8h2v2h-2zM3145.5 534.6h2v2h-2zM3145.5 519.4h2v2h-2zM3145.5 504.1h2v2h-2zM3145.5 488.9h2v2h-2zM3145.5 473.6h2v2h-2zM3145.5 458.4h2v2h-2zM3145.5 443.1h2v2h-2zM3145.5 427.9h2v2h-2zM3145.5 412.7h2v2h-2zM3145.5 397.4h2v2h-2zM3145.5 382.2h2v2h-2zM3145.5 366.9h2v2h-2zM3145.5 351.7h2v2h-2zM3145.5 336.4h2v2h-2zM3145.5 321.2h2v2h-2zM3145.5 306.0h2v2h-2zM3145.5 290.7h2v2h-2zM3433.5 1235.7h2v2h-2zM3433.5 1220.5h2v2h-2zM3433.5 1205.2h2v2h-2zM3433.5 1190.0h2v2h-2zM3433.5 1174.8h2v2h-2zM3433.5 1159.5h2v2h-2zM3433.5 1144.3h2v2h-2zM3433.5 1129.0h2v2h-2zM3433.5 1113.8h2v2h-2zM3433.5 1098.5h2v2h-2zM3433.5 1083.3h2v2h-2zM3433.5 1068.1h2v2h-2zM3433.5 1052.8h2v2h-2zM3433.5 1037.6h2v2h-2zM3433.5 1022.3h2v2h-2zM3433.5 1007.1h2v2h-2zM3433.5 991.9h2v2h-2zM3433.5 976.6h2v2h-2zM3433.5 961.4h2v2h-2zM3433.5 946.1h2v2h-2zM3433.5 930.9h2v2h-2zM3433.5 915.6h2v2h-2zM3433.5 900.4h2v2h-2zM3433.5 885.2h2v2h-2zM3433.5 869.9h2v2h-2zM3433.5 854.7h2v2h-2zM3433.5 839.4h2v2h-2zM3433.5 824.2h2v2h-2zM3433.5 809.0h2v2h-2zM3433.5 793.7h2v2h-2zM3433.5 778.5h2v2h-2zM3433.5 763.2h2v2h-2zM3433.5 748.0h2v2h-2zM3433.5 732.7h2v2h-2zM3433.5 717.5h2v2h-2zM3433.5 702.3h2v2h-2zM3433.5 687.0h2v2h-2zM3433.5 671.8h2v2h-2zM3433.5 656.5h2v2h-2zM3433.5 641.3h2v2h-2zM3433.5 626.0h2v2h-2zM3433.5 610.8h2v2h-2zM3433.5 595.6h2v2h-2zM3433.5 580.3h2v2h-2zM3433.5 565.1h2v2h-2zM3433.5 549.8h2v2h-2zM3433.5 534.6h2v2h-2zM3433.5 519.4h2v2h-2zM3433.5 504.1h2v2h-2zM3433.5 488.9h2v2h-2zM3433.5 473.6h2v2h-2zM3433.5 458.4h2v2h-2zM3433.5 443.1h2v2h-2zM3433.5 427.9h2v2h-2zM3433.5 412.7h2v2h-2zM3433.5 397.4h2v2h-2zM3433.5 382.2h2v2h-2zM3433.5 366.9h2v2h-2zM3433.5 351.7h2v2h-2zM3433.5 336.4h2v2h-2zM3433.5 321.2h2v2h-2zM3433.5 306.0h2v2h-2zM3433.5 290.7h2v2h-2zM3721.5 1235.7h2v2h-2zM3721.5 1220.5h2v2h-2zM3721.5 1205.2h2v2h-2zM3721.5 1190.0h2v2h-2zM3721.5 1174.8h2v2h-2zM3721.5 1159.5h2v2h-2zM3721.5 1144.3h2v2h-2zM3721.5 1129.0h2v2h-2zM3721.5 1113.8h2v2h-2zM3721.5 1098.5h2v2h-2zM3721.5 1083.3h2v2h-2zM3721.5 1068.1h2v2h-2zM3721.5 1052.8h2v2h-2zM3721.5 1037.6h2v2h-2zM3721.5 1022.3h2v2h-2zM3721.5 1007.1h2v2h-2zM3721.5 991.9h2v2h-2zM3721.5 976.6h2v2h-2zM3721.5 961.4h2v2h-2zM3721.5 946.1h2v2h-2zM3721.5 930.9h2v2h-2zM3721.5 915.6h2v2h-2zM3721.5 900.4h2v2h-2zM3721.5 885.2h2v2h-2zM3721.5 869.9h2v2h-2zM3721.5 854.7h2v2h-2zM3721.5 839.4h2v2h-2zM3721.5 824.2h2v2h-2zM3721.5 809.0h2v2h-2zM3721.5 793.7h2v2h-2zM3721.5 778.5h2v2h-2zM3721.5 763.2h2v2h-2zM3721.5 748.0h2v2h-2zM3721.5 732.7h2v2h-2zM3721.5 717.5h2v2h-2zM3721.5 702.3h2v2h-2zM3721.5 687.0h2v2h-2zM3721.5 671.8h2v2h-2zM3721.5 656.5h2v2h-2zM3721.5 641.3h2v2h-2zM3721.5 626.0h2v2h-2zM3721.5 610.8h2v2h-2zM3721.5 595.6h2v2h-2zM3721.5 580.3h2v2h-2zM3721.5 565.1h2v2h-2zM3721.5 549.8h2v2h-2zM3721.5 534.6h2v2h-2zM3721.5 519.4h2v2h-2zM3721.5 504.1h2v2h-2zM3721.5 488.9h2v2h-2zM3721.5 473.6h2v2h-2zM3721.5 458.4h2v2h-2zM3721.5 443.1h2v2h-2zM3721.5 427.9h2v2h-2zM3721.5 412.7h2v2h-2zM3721.5 397.4h2v2h-2zM3721.5 382.2h2v2h-2zM3721.5 366.9h2v2h-2zM3721.5 351.7h2v2h-2zM3721.5 336.4h2v2h-2zM3721.5 321.2h2v2h-2zM3721.5 306.0h2v2h-2zM3721.5 290.7h2v2h-2zM697.5 1113.8h2v2h-2zM697.5 961.4h2v2h-2zM697.5 809.0h2v2h-2zM697.5 656.5h2v2h-2zM697.5 504.1h2v2h-2zM697.5 351.7h2v2h-2zM985.5 1113.8h2v2h-2zM985.5 961.4h2v2h-2zM985.5 809.0h2v2h-2zM985.5 656.5h2v2h-2zM985.5 504.1h2v2h-2zM985.5 351.7h2v2h-2zM1273.5 1113.8h2v2h-2zM1273.5 961.4h2v2h-2zM1273.5 809.0h2v2h-2zM1273.5 656.5h2v2h-2zM1273.5 504.1h2v2h-2zM1273.5 351.7h2v2h-2zM1561.5 1113.8h2v2h-2zM1561.5 961.4h2v2h-2zM1561.5 809.0h2v2h-2zM1561.5 656.5h2v2h-2zM1561.5 504.1h2v2h-2zM1561.5 351.7h2v2h-2zM1849.5 1113.8h2v2h-2zM1849.5 961.4h2v2h-2zM1849.5 809.0h2v2h-2zM1849.5 656.5h2v2h-2zM1849.5 504.1h2v2h-2zM1849.5 351.7h2v2h-2zM2137.5 1113.8h2v2h-2zM2137.5 961.4h2v2h-2zM2137.5 809.0h2v2h-2zM2137.5 656.5h2v2h-2zM2137.5 504.1h2v2h-2zM2137.5 351.7h2v2h-2zM2425.5 1113.8h2v2h-2zM2425.5 961.4h2v2h-2zM2425.5 809.0h2v2h-2zM2425.5 656.5h2v2h-2zM2425.5 504.1h2v2h-2zM2425.5 351.7h2v2h-2zM2713.5 1113.8h2v2h-2zM2713.5 961.4h2v2h-2zM2713.5 809.0h2v2h-2zM2713.5 656.5h2v2h-2zM2713.5 504.1h2v2h-2zM2713.5 351.7h2v2h-2zM3001.5 1113.8h2v2h-2zM3001.5 961.4h2v2h-2zM3001.5 809.0h2v2h-2zM3001.5 656.5h2v2h-2zM3001.5 504.1h2v2h-2zM3001.5 351.7h2v2h-2zM3289.5 1113.8h2v2h-2zM3289.5 961.4h2v2h-2zM3289.5 809.0h2v2h-2zM3289.5 656.5h2v2h-2zM3289.5 504.1h2v2h-2zM3289.5 351.7h2v2h-2zM3577.5 1113.8h2v2h-2zM3577.5 961.4h2v2h-2zM3577.5 809.0h2v2h-2zM3577.5 656.5h2v2h-2zM3577.5 504.1h2v2h-2zM3577.5 351.7h2v2h-2zM428.0 1552.0h2v2h-2zM446.0 1552.0h2v2h-2zM464.0 1552.0h2v2h-2zM482.0 1552.0h2v2h-2zM500.0 1552.0h2v2h-2zM518.0 1552.0h2v2h-2zM536.0 1552.0h2v2h-2zM554.0 1552.0h2v2h-2zM572.0 1552.0h2v2h-2zM590.0 1552.0h2v2h-2zM608.0 1552.0h2v2h-2zM626.0 1552.0h2v2h-2zM644.0 1552.0h2v2h-2zM662.0 1552.0h2v2h-2zM680.0 1552.0h2v2h-2zM698.0 1552.0h2v2h-2zM716.0 1552.0h2v2h-2zM734.0 1552.0h2v2h-2zM752.0 1552.0h2v2h-2zM770.0 1552.0h2v2h-2zM788.0 1552.0h2v2h-2zM806.0 1552.0h2v2h-2zM824.0 1552.0h2v2h-2zM842.0 1552.0h2v2h-2zM860.0 1552.0h2v2h-2zM878.0 1552.0h2v2h-2zM896.0 1552.0h2v2h-2zM914.0 1552.0h2v2h-2zM932.0 1552.0h2v2h-2zM950.0 1552.0h2v2h-2zM968.0 1552.0h2v2h-2zM986.0 1552.0h2v2h-2zM1004.0 1552.0h2v2h-2zM1022.0 1552.0h2v2h-2zM1040.0 1552.0h2v2h-2zM1058.0 1552.0h2v2h-2zM1076.0 1552.0h2v2h-2zM1094.0 1552.0h2v2h-2zM1112.0 1552.0h2v2h-2zM1130.0 1552.0h2v2h-2zM1148.0 1552.0h2v2h-2zM1166.0 1552.0h2v2h-2zM1184.0 1552.0h2v2h-2zM1202.0 1552.0h2v2h-2zM1220.0 1552.0h2v2h-2zM1238.0 1552.0h2v2h-2zM1256.0 1552.0h2v2h-2zM1274.0 1552.0h2v2h-2zM1292.0 1552.0h2v2h-2zM1310.0 1552.0h2v2h-2zM1328.0 1552.0h2v2h-2zM1346.0 1552.0h2v2h-2zM1364.0 1552.0h2v2h-2zM1382.0 1552.0h2v2h-2zM1400.0 1552.0h2v2h-2zM1418.0 1552.0h2v2h-2zM1436.0 1552.0h2v2h-2zM1454.0 1552.0h2v2h-2zM1472.0 1552.0h2v2h-2zM1490.0 1552.0h2v2h-2zM1508.0 1552.0h2v2h-2zM1526.0 1552.0h2v2h-2zM1544.0 1552.0h2v2h-2zM1562.0 1552.0h2v2h-2zM1580.0 1552.0h2v2h-2zM1598.0 1552.0h2v2h-2zM1616.0 1552.0h2v2h-2zM1634.0 1552.0h2v2h-2zM1652.0 1552.0h2v2h-2zM1670.0 1552.0h2v2h-2zM1688.0 1552.0h2v2h-2zM1706.0 1552.0h2v2h-2zM1724.0 1552.0h2v2h-2zM1742.0 1552.0h2v2h-2zM1760.0 1552.0h2v2h-2zM1778.0 1552.0h2v2h-2zM1796.0 1552.0h2v2h-2zM1814.0 1552.0h2v2h-2zM1832.0 1552.0h2v2h-2zM1850.0 1552.0h2v2h-2zM1868.0 1552.0h2v2h-2zM1886.0 1552.0h2v2h-2zM1904.0 1552.0h2v2h-2zM1922.0 1552.0h2v2h-2zM1940.0 1552.0h2v2h-2zM1958.0 1552.0h2v2h-2zM1976.0 1552.0h2v2h-2zM1994.0 1552.0h2v2h-2zM2012.0 1552.0h2v2h-2zM2030.0 1552.0h2v2h-2zM2048.0 1552.0h2v2h-2zM2066.0 1552.0h2v2h-2zM2084.0 1552.0h2v2h-2zM2102.0 1552.0h2v2h-2zM2120.0 1552.0h2v2h-2zM2138.0 1552.0h2v2h-2zM2156.0 1552.0h2v2h-2zM2174.0 1552.0h2v2h-2zM2192.0 1552.0h2v2h-2zM2210.0 1552.0h2v2h-2zM2228.0 1552.0h2v2h-2zM2246.0 1552.0h2v2h-2zM2264.0 1552.0h2v2h-2zM2282.0 1552.0h2v2h-2zM2300.0 1552.0h2v2h-2zM2318.0 1552.0h2v2h-2zM2336.0 1552.0h2v2h-2zM2354.0 1552.0h2v2h-2zM2372.0 1552.0h2v2h-2zM2390.0 1552.0h2v2h-2zM2408.0 1552.0h2v2h-2zM2426.0 1552.0h2v2h-2zM2444.0 1552.0h2v2h-2zM2462.0 1552.0h2v2h-2zM2480.0 1552.0h2v2h-2zM2498.0 1552.0h2v2h-2zM2516.0 1552.0h2v2h-2zM2534.0 1552.0h2v2h-2zM2552.0 1552.0h2v2h-2zM2570.0 1552.0h2v2h-2zM2588.0 1552.0h2v2h-2zM2606.0 1552.0h2v2h-2zM2624.0 1552.0h2v2h-2zM2642.0 1552.0h2v2h-2zM2660.0 1552.0h2v2h-2zM2678.0 1552.0h2v2h-2zM2696.0 1552.0h2v2h-2zM2714.0 1552.0h2v2h-2zM2732.0 1552.0h2v2h-2zM2750.0 1552.0h2v2h-2zM2768.0 1552.0h2v2h-2zM2786.0 1552.0h2v2h-2zM2804.0 1552.0h2v2h-2zM2822.0 1552.0h2v2h-2zM2840.0 1552.0h2v2h-2zM2858.0 1552.0h2v2h-2zM2876.0 1552.0h2v2h-2zM2894.0 1552.0h2v2h-2zM2912.0 1552.0h2v2h-2zM2930.0 1552.0h2v2h-2zM2948.0 1552.0h2v2h-2zM2966.0 1552.0h2v2h-2zM2984.0 1552.0h2v2h-2zM3002.0 1552.0h2v2h-2zM3020.0 1552.0h2v2h-2zM3038.0 1552.0h2v2h-2zM3056.0 1552.0h2v2h-2zM3074.0 1552.0h2v2h-2zM3092.0 1552.0h2v2h-2zM3110.0 1552.0h2v2h-2zM3128.0 1552.0h2v2h-2zM3146.0 1552.0h2v2h-2zM3164.0 1552.0h2v2h-2zM3182.0 1552.0h2v2h-2zM3200.0 1552.0h2v2h-2zM3218.0 1552.0h2v2h-2zM3236.0 1552.0h2v2h-2zM3254.0 1552.0h2v2h-2zM3272.0 1552.0h2v2h-2zM3290.0 1552.0h2v2h-2zM3308.0 1552.0h2v2h-2zM3326.0 1552.0h2v2h-2zM3344.0 1552.0h2v2h-2zM3362.0 1552.0h2v2h-2zM3380.0 1552.0h2v2h-2zM3398.0 1552.0h2v2h-2zM3416.0 1552.0h2v2h-2zM3434.0 1552.0h2v2h-2zM3452.0 1552.0h2v2h-2zM3470.0 1552.0h2v2h-2zM3488.0 1552.0h2v2h-2zM3506.0 1552.0h2v2h-2zM3524.0 1552.0h2v2h-2zM3542.0 1552.0h2v2h-2zM3560.0 1552.0h2v2h-2zM3578.0 1552.0h2v2h-2zM3596.0 1552.0h2v2h-2zM3614.0 1552.0h2v2h-2zM3632.0 1552.0h2v2h-2zM3650.0 1552.0h2v2h-2zM3668.0 1552.0h2v2h-2zM3686.0 1552.0h2v2h-2zM3704.0 1552.0h2v2h-2zM3722.0 1552.0h2v2h-2zM3740.0 1552.0h2v2h-2zM3758.0 1552.0h2v2h-2zM3776.0 1552.0h2v2h-2zM428.0 1480.0h2v2h-2zM446.0 1480.0h2v2h-2zM464.0 1480.0h2v2h-2zM482.0 1480.0h2v2h-2zM500.0 1480.0h2v2h-2zM518.0 1480.0h2v2h-2zM536.0 1480.0h2v2h-2zM554.0 1480.0h2v2h-2zM572.0 1480.0h2v2h-2zM590.0 1480.0h2v2h-2zM608.0 1480.0h2v2h-2zM626.0 1480.0h2v2h-2zM644.0 1480.0h2v2h-2zM662.0 1480.0h2v2h-2zM680.0 1480.0h2v2h-2zM698.0 1480.0h2v2h-2zM716.0 1480.0h2v2h-2zM734.0 1480.0h2v2h-2zM752.0 1480.0h2v2h-2zM770.0 1480.0h2v2h-2zM788.0 1480.0h2v2h-2zM806.0 1480.0h2v2h-2zM824.0 1480.0h2v2h-2zM842.0 1480.0h2v2h-2zM860.0 1480.0h2v2h-2zM878.0 1480.0h2v2h-2zM896.0 1480.0h2v2h-2zM914.0 1480.0h2v2h-2zM932.0 1480.0h2v2h-2zM950.0 1480.0h2v2h-2zM968.0 1480.0h2v2h-2zM986.0 1480.0h2v2h-2zM1004.0 1480.0h2v2h-2zM1022.0 1480.0h2v2h-2zM1040.0 1480.0h2v2h-2zM1058.0 1480.0h2v2h-2zM1076.0 1480.0h2v2h-2zM1094.0 1480.0h2v2h-2zM1112.0 1480.0h2v2h-2zM1130.0 1480.0h2v2h-2zM1148.0 1480.0h2v2h-2zM1166.0 1480.0h2v2h-2zM1184.0 1480.0h2v2h-2zM1202.0 1480.0h2v2h-2zM1220.0 1480.0h2v2h-2zM1238.0 1480.0h2v2h-2zM1256.0 1480.0h2v2h-2zM1274.0 1480.0h2v2h-2zM1292.0 1480.0h2v2h-2zM1310.0 1480.0h2v2h-2zM1328.0 1480.0h2v2h-2zM1346.0 1480.0h2v2h-2zM1364.0 1480.0h2v2h-2zM1382.0 1480.0h2v2h-2zM1400.0 1480.0h2v2h-2zM1418.0 1480.0h2v2h-2zM1436.0 1480.0h2v2h-2zM1454.0 1480.0h2v2h-2zM1472.0 1480.0h2v2h-2zM1490.0 1480.0h2v2h-2zM1508.0 1480.0h2v2h-2zM1526.0 1480.0h2v2h-2zM1544.0 1480.0h2v2h-2zM1562.0 1480.0h2v2h-2zM1580.0 1480.0h2v2h-2zM1598.0 1480.0h2v2h-2zM1616.0 1480.0h2v2h-2zM1634.0 1480.0h2v2h-2zM1652.0 1480.0h2v2h-2zM1670.0 1480.0h2v2h-2zM1688.0 1480.0h2v2h-2zM1706.0 1480.0h2v2h-2zM1724.0 1480.0h2v2h-2zM1742.0 1480.0h2v2h-2zM1760.0 1480.0h2v2h-2zM1778.0 1480.0h2v2h-2zM1796.0 1480.0h2v2h-2zM1814.0 1480.0h2v2h-2zM1832.0 1480.0h2v2h-2zM1850.0 1480.0h2v2h-2zM1868.0 1480.0h2v2h-2zM1886.0 1480.0h2v2h-2zM1904.0 1480.0h2v2h-2zM1922.0 1480.0h2v2h-2zM1940.0 1480.0h2v2h-2zM1958.0 1480.0h2v2h-2zM1976.0 1480.0h2v2h-2zM1994.0 1480.0h2v2h-2zM2012.0 1480.0h2v2h-2zM2030.0 1480.0h2v2h-2zM2048.0 1480.0h2v2h-2zM2066.0 1480.0h2v2h-2zM2084.0 1480.0h2v2h-2zM2102.0 1480.0h2v2h-2zM2120.0 1480.0h2v2h-2zM2138.0 1480.0h2v2h-2zM2156.0 1480.0h2v2h-2zM2174.0 1480.0h2v2h-2zM2192.0 1480.0h2v2h-2zM2210.0 1480.0h2v2h-2zM2228.0 1480.0h2v2h-2zM2246.0 1480.0h2v2h-2zM2264.0 1480.0h2v2h-2zM2282.0 1480.0h2v2h-2zM2300.0 1480.0h2v2h-2zM2318.0 1480.0h2v2h-2zM2336.0 1480.0h2v2h-2zM2354.0 1480.0h2v2h-2zM2372.0 1480.0h2v2h-2zM2390.0 1480.0h2v2h-2zM2408.0 1480.0h2v2h-2zM2426.0 1480.0h2v2h-2zM2444.0 1480.0h2v2h-2zM2462.0 1480.0h2v2h-2zM2480.0 1480.0h2v2h-2zM2498.0 1480.0h2v2h-2zM2516.0 1480.0h2v2h-2zM2534.0 1480.0h2v2h-2zM2552.0 1480.0h2v2h-2zM2570.0 1480.0h2v2h-2zM2588.0 1480.0h2v2h-2zM2606.0 1480.0h2v2h-2zM2624.0 1480.0h2v2h-2zM2642.0 1480.0h2v2h-2zM2660.0 1480.0h2v2h-2zM2678.0 1480.0h2v2h-2zM2696.0 1480.0h2v2h-2zM2714.0 1480.0h2v2h-2zM2732.0 1480.0h2v2h-2zM2750.0 1480.0h2v2h-2zM2768.0 1480.0h2v2h-2zM2786.0 1480.0h2v2h-2zM2804.0 1480.0h2v2h-2zM2822.0 1480.0h2v2h-2zM2840.0 1480.0h2v2h-2zM2858.0 1480.0h2v2h-2zM2876.0 1480.0h2v2h-2zM2894.0 1480.0h2v2h-2zM2912.0 1480.0h2v2h-2zM2930.0 1480.0h2v2h-2zM2948.0 1480.0h2v2h-2zM2966.0 1480.0h2v2h-2zM2984.0 1480.0h2v2h-2zM3002.0 1480.0h2v2h-2zM3020.0 1480.0h2v2h-2zM3038.0 1480.0h2v2h-2zM3056.0 1480.0h2v2h-2zM3074.0 1480.0h2v2h-2zM3092.0 1480.0h2v2h-2zM3110.0 1480.0h2v2h-2zM3128.0 1480.0h2v2h-2zM3146.0 1480.0h2v2h-2zM3164.0 1480.0h2v2h-2zM3182.0 1480.0h2v2h-2zM3200.0 1480.0h2v2h-2zM3218.0 1480.0h2v2h-2zM3236.0 1480.0h2v2h-2zM3254.0 1480.0h2v2h-2zM3272.0 1480.0h2v2h-2zM3290.0 1480.0h2v2h-2zM3308.0 1480.0h2v2h-2zM3326.0 1480.0h2v2h-2zM3344.0 1480.0h2v2h-2zM3362.0 1480.0h2v2h-2zM3380.0 1480.0h2v2h-2zM3398.0 1480.0h2v2h-2zM3416.0 1480.0h2v2h-2zM3434.0 1480.0h2v2h-2zM3452.0 1480.0h2v2h-2zM3470.0 1480.0h2v2h-2zM3488.0 1480.0h2v2h-2zM3506.0 1480.0h2v2h-2zM3524.0 1480.0h2v2h-2zM3542.0 1480.0h2v2h-2zM3560.0 1480.0h2v2h-2zM3578.0 1480.0h2v2h-2zM3596.0 1480.0h2v2h-2zM3614.0 1480.0h2v2h-2zM3632.0 1480.0h2v2h-2zM3650.0 1480.0h2v2h-2zM3668.0 1480.0h2v2h-2zM3686.0 1480.0h2v2h-2zM3704.0 1480.0h2v2h-2zM3722.0 1480.0h2v2h-2zM3740.0 1480.0h2v2h-2zM3758.0 1480.0h2v2h-2zM3776.0 1480.0h2v2h-2zM428.0 1408.0h2v2h-2zM446.0 1408.0h2v2h-2zM464.0 1408.0h2v2h-2zM482.0 1408.0h2v2h-2zM500.0 1408.0h2v2h-2zM518.0 1408.0h2v2h-2zM536.0 1408.0h2v2h-2zM554.0 1408.0h2v2h-2zM572.0 1408.0h2v2h-2zM590.0 1408.0h2v2h-2zM608.0 1408.0h2v2h-2zM626.0 1408.0h2v2h-2zM644.0 1408.0h2v2h-2zM662.0 1408.0h2v2h-2zM680.0 1408.0h2v2h-2zM698.0 1408.0h2v2h-2zM716.0 1408.0h2v2h-2zM734.0 1408.0h2v2h-2zM752.0 1408.0h2v2h-2zM770.0 1408.0h2v2h-2zM788.0 1408.0h2v2h-2zM806.0 1408.0h2v2h-2zM824.0 1408.0h2v2h-2zM842.0 1408.0h2v2h-2zM860.0 1408.0h2v2h-2zM878.0 1408.0h2v2h-2zM896.0 1408.0h2v2h-2zM914.0 1408.0h2v2h-2zM932.0 1408.0h2v2h-2zM950.0 1408.0h2v2h-2zM968.0 1408.0h2v2h-2zM986.0 1408.0h2v2h-2zM1004.0 1408.0h2v2h-2zM1022.0 1408.0h2v2h-2zM1040.0 1408.0h2v2h-2zM1058.0 1408.0h2v2h-2zM1076.0 1408.0h2v2h-2zM1094.0 1408.0h2v2h-2zM1112.0 1408.0h2v2h-2zM1130.0 1408.0h2v2h-2zM1148.0 1408.0h2v2h-2zM1166.0 1408.0h2v2h-2zM1184.0 1408.0h2v2h-2zM1202.0 1408.0h2v2h-2zM1220.0 1408.0h2v2h-2zM1238.0 1408.0h2v2h-2zM1256.0 1408.0h2v2h-2zM1274.0 1408.0h2v2h-2zM1292.0 1408.0h2v2h-2zM1310.0 1408.0h2v2h-2zM1328.0 1408.0h2v2h-2zM1346.0 1408.0h2v2h-2zM1364.0 1408.0h2v2h-2zM1382.0 1408.0h2v2h-2zM1400.0 1408.0h2v2h-2zM1418.0 1408.0h2v2h-2zM1436.0 1408.0h2v2h-2zM1454.0 1408.0h2v2h-2zM1472.0 1408.0h2v2h-2zM1490.0 1408.0h2v2h-2zM1508.0 1408.0h2v2h-2zM1526.0 1408.0h2v2h-2zM1544.0 1408.0h2v2h-2zM1562.0 1408.0h2v2h-2zM1580.0 1408.0h2v2h-2zM1598.0 1408.0h2v2h-2zM1616.0 1408.0h2v2h-2zM1634.0 1408.0h2v2h-2zM1652.0 1408.0h2v2h-2zM1670.0 1408.0h2v2h-2zM1688.0 1408.0h2v2h-2zM1706.0 1408.0h2v2h-2zM1724.0 1408.0h2v2h-2zM1742.0 1408.0h2v2h-2zM1760.0 1408.0h2v2h-2zM1778.0 1408.0h2v2h-2zM1796.0 1408.0h2v2h-2zM1814.0 1408.0h2v2h-2zM1832.0 1408.0h2v2h-2zM1850.0 1408.0h2v2h-2zM1868.0 1408.0h2v2h-2zM1886.0 1408.0h2v2h-2zM1904.0 1408.0h2v2h-2zM1922.0 1408.0h2v2h-2zM1940.0 1408.0h2v2h-2zM1958.0 1408.0h2v2h-2zM1976.0 1408.0h2v2h-2zM1994.0 1408.0h2v2h-2zM2012.0 1408.0h2v2h-2zM2030.0 1408.0h2v2h-2zM2048.0 1408.0h2v2h-2zM2066.0 1408.0h2v2h-2zM2084.0 1408.0h2v2h-2zM2102.0 1408.0h2v2h-2zM2120.0 1408.0h2v2h-2zM2138.0 1408.0h2v2h-2zM2156.0 1408.0h2v2h-2zM2174.0 1408.0h2v2h-2zM2192.0 1408.0h2v2h-2zM2210.0 1408.0h2v2h-2zM2228.0 1408.0h2v2h-2zM2246.0 1408.0h2v2h-2zM2264.0 1408.0h2v2h-2zM2282.0 1408.0h2v2h-2zM2300.0 1408.0h2v2h-2zM2318.0 1408.0h2v2h-2zM2336.0 1408.0h2v2h-2zM2354.0 1408.0h2v2h-2zM2372.0 1408.0h2v2h-2zM2390.0 1408.0h2v2h-2zM2408.0 1408.0h2v2h-2zM2426.0 1408.0h2v2h-2zM2444.0 1408.0h2v2h-2zM2462.0 1408.0h2v2h-2zM2480.0 1408.0h2v2h-2zM2498.0 1408.0h2v2h-2zM2516.0 1408.0h2v2h-2zM2534.0 1408.0h2v2h-2zM2552.0 1408.0h2v2h-2zM2570.0 1408.0h2v2h-2zM2588.0 1408.0h2v2h-2zM2606.0 1408.0h2v2h-2zM2624.0 1408.0h2v2h-2zM2642.0 1408.0h2v2h-2zM2660.0 1408.0h2v2h-2zM2678.0 1408.0h2v2h-2zM2696.0 1408.0h2v2h-2zM2714.0 1408.0h2v2h-2zM2732.0 1408.0h2v2h-2zM2750.0 1408.0h2v2h-2zM2768.0 1408.0h2v2h-2zM2786.0 1408.0h2v2h-2zM2804.0 1408.0h2v2h-2zM2822.0 1408.0h2v2h-2zM2840.0 1408.0h2v2h-2zM2858.0 1408.0h2v2h-2zM2876.0 1408.0h2v2h-2zM2894.0 1408.0h2v2h-2zM2912.0 1408.0h2v2h-2zM2930.0 1408.0h2v2h-2zM2948.0 1408.0h2v2h-2zM2966.0 1408.0h2v2h-2zM2984.0 1408.0h2v2h-2zM3002.0 1408.0h2v2h-2zM3020.0 1408.0h2v2h-2zM3038.0 1408.0h2v2h-2zM3056.0 1408.0h2v2h-2zM3074.0 1408.0h2v2h-2zM3092.0 1408.0h2v2h-2zM3110.0 1408.0h2v2h-2zM3128.0 1408.0h2v2h-2zM3146.0 1408.0h2v2h-2zM3164.0 1408.0h2v2h-2zM3182.0 1408.0h2v2h-2zM3200.0 1408.0h2v2h-2zM3218.0 1408.0h2v2h-2zM3236.0 1408.0h2v2h-2zM3254.0 1408.0h2v2h-2zM3272.0 1408.0h2v2h-2zM3290.0 1408.0h2v2h-2zM3308.0 1408.0h2v2h-2zM3326.0 1408.0h2v2h-2zM3344.0 1408.0h2v2h-2zM3362.0 1408.0h2v2h-2zM3380.0 1408.0h2v2h-2zM3398.0 1408.0h2v2h-2zM3416.0 1408.0h2v2h-2zM3434.0 1408.0h2v2h-2zM3452.0 1408.0h2v2h-2zM3470.0 1408.0h2v2h-2zM3488.0 1408.0h2v2h-2zM3506.0 1408.0h2v2h-2zM3524.0 1408.0h2v2h-2zM3542.0 1408.0h2v2h-2zM3560.0 1408.0h2v2h-2zM3578.0 1408.0h2v2h-2zM3596.0 1408.0h2v2h-2zM3614.0 1408.0h2v2h-2zM3632.0 1408.0h2v2h-2zM3650.0 1408.0h2v2h-2zM3668.0 1408.0h2v2h-2zM3686.0 1408.0h2v2h-2zM3704.0 1408.0h2v2h-2zM3722.0 1408.0h2v2h-2zM3740.0 1408.0h2v2h-2zM3758.0 1408.0h2v2h-2zM3776.0 1408.0h2v2h-2zM428.0 1336.0h2v2h-2zM446.0 1336.0h2v2h-2zM464.0 1336.0h2v2h-2zM482.0 1336.0h2v2h-2zM500.0 1336.0h2v2h-2zM518.0 1336.0h2v2h-2zM536.0 1336.0h2v2h-2zM554.0 1336.0h2v2h-2zM572.0 1336.0h2v2h-2zM590.0 1336.0h2v2h-2zM608.0 1336.0h2v2h-2zM626.0 1336.0h2v2h-2zM644.0 1336.0h2v2h-2zM662.0 1336.0h2v2h-2zM680.0 1336.0h2v2h-2zM698.0 1336.0h2v2h-2zM716.0 1336.0h2v2h-2zM734.0 1336.0h2v2h-2zM752.0 1336.0h2v2h-2zM770.0 1336.0h2v2h-2zM788.0 1336.0h2v2h-2zM806.0 1336.0h2v2h-2zM824.0 1336.0h2v2h-2zM842.0 1336.0h2v2h-2zM860.0 1336.0h2v2h-2zM878.0 1336.0h2v2h-2zM896.0 1336.0h2v2h-2zM914.0 1336.0h2v2h-2zM932.0 1336.0h2v2h-2zM950.0 1336.0h2v2h-2zM968.0 1336.0h2v2h-2zM986.0 1336.0h2v2h-2zM1004.0 1336.0h2v2h-2zM1022.0 1336.0h2v2h-2zM1040.0 1336.0h2v2h-2zM1058.0 1336.0h2v2h-2zM1076.0 1336.0h2v2h-2zM1094.0 1336.0h2v2h-2zM1112.0 1336.0h2v2h-2zM1130.0 1336.0h2v2h-2zM1148.0 1336.0h2v2h-2zM1166.0 1336.0h2v2h-2zM1184.0 1336.0h2v2h-2zM1202.0 1336.0h2v2h-2zM1220.0 1336.0h2v2h-2zM1238.0 1336.0h2v2h-2zM1256.0 1336.0h2v2h-2zM1274.0 1336.0h2v2h-2zM1292.0 1336.0h2v2h-2zM1310.0 1336.0h2v2h-2zM1328.0 1336.0h2v2h-2zM1346.0 1336.0h2v2h-2zM1364.0 1336.0h2v2h-2zM1382.0 1336.0h2v2h-2zM1400.0 1336.0h2v2h-2zM1418.0 1336.0h2v2h-2zM1436.0 1336.0h2v2h-2zM1454.0 1336.0h2v2h-2zM1472.0 1336.0h2v2h-2zM1490.0 1336.0h2v2h-2zM1508.0 1336.0h2v2h-2zM1526.0 1336.0h2v2h-2zM1544.0 1336.0h2v2h-2zM1562.0 1336.0h2v2h-2zM1580.0 1336.0h2v2h-2zM1598.0 1336.0h2v2h-2zM1616.0 1336.0h2v2h-2zM1634.0 1336.0h2v2h-2zM1652.0 1336.0h2v2h-2zM1670.0 1336.0h2v2h-2zM1688.0 1336.0h2v2h-2zM1706.0 1336.0h2v2h-2zM1724.0 1336.0h2v2h-2zM1742.0 1336.0h2v2h-2zM1760.0 1336.0h2v2h-2zM1778.0 1336.0h2v2h-2zM1796.0 1336.0h2v2h-2zM1814.0 1336.0h2v2h-2zM1832.0 1336.0h2v2h-2zM1850.0 1336.0h2v2h-2zM1868.0 1336.0h2v2h-2zM1886.0 1336.0h2v2h-2zM1904.0 1336.0h2v2h-2zM1922.0 1336.0h2v2h-2zM1940.0 1336.0h2v2h-2zM1958.0 1336.0h2v2h-2zM1976.0 1336.0h2v2h-2zM1994.0 1336.0h2v2h-2zM2012.0 1336.0h2v2h-2zM2030.0 1336.0h2v2h-2zM2048.0 1336.0h2v2h-2zM2066.0 1336.0h2v2h-2zM2084.0 1336.0h2v2h-2zM2102.0 1336.0h2v2h-2zM2120.0 1336.0h2v2h-2zM2138.0 1336.0h2v2h-2zM2156.0 1336.0h2v2h-2zM2174.0 1336.0h2v2h-2zM2192.0 1336.0h2v2h-2zM2210.0 1336.0h2v2h-2zM2228.0 1336.0h2v2h-2zM2246.0 1336.0h2v2h-2zM2264.0 1336.0h2v2h-2zM2282.0 1336.0h2v2h-2zM2300.0 1336.0h2v2h-2zM2318.0 1336.0h2v2h-2zM2336.0 1336.0h2v2h-2zM2354.0 1336.0h2v2h-2zM2372.0 1336.0h2v2h-2zM2390.0 1336.0h2v2h-2zM2408.0 1336.0h2v2h-2zM2426.0 1336.0h2v2h-2zM2444.0 1336.0h2v2h-2zM2462.0 1336.0h2v2h-2zM2480.0 1336.0h2v2h-2zM2498.0 1336.0h2v2h-2zM2516.0 1336.0h2v2h-2zM2534.0 1336.0h2v2h-2zM2552.0 1336.0h2v2h-2zM2570.0 1336.0h2v2h-2zM2588.0 1336.0h2v2h-2zM2606.0 1336.0h2v2h-2zM2624.0 1336.0h2v2h-2zM2642.0 1336.0h2v2h-2zM2660.0 1336.0h2v2h-2zM2678.0 1336.0h2v2h-2zM2696.0 1336.0h2v2h-2zM2714.0 1336.0h2v2h-2zM2732.0 1336.0h2v2h-2zM2750.0 1336.0h2v2h-2zM2768.0 1336.0h2v2h-2zM2786.0 1336.0h2v2h-2zM2804.0 1336.0h2v2h-2zM2822.0 1336.0h2v2h-2zM2840.0 1336.0h2v2h-2zM2858.0 1336.0h2v2h-2zM2876.0 1336.0h2v2h-2zM2894.0 1336.0h2v2h-2zM2912.0 1336.0h2v2h-2zM2930.0 1336.0h2v2h-2zM2948.0 1336.0h2v2h-2zM2966.0 1336.0h2v2h-2zM2984.0 1336.0h2v2h-2zM3002.0 1336.0h2v2h-2zM3020.0 1336.0h2v2h-2zM3038.0 1336.0h2v2h-2zM3056.0 1336.0h2v2h-2zM3074.0 1336.0h2v2h-2zM3092.0 1336.0h2v2h-2zM3110.0 1336.0h2v2h-2zM3128.0 1336.0h2v2h-2zM3146.0 1336.0h2v2h-2zM3164.0 1336.0h2v2h-2zM3182.0 1336.0h2v2h-2zM3200.0 1336.0h2v2h-2zM3218.0 1336.0h2v2h-2zM3236.0 1336.0h2v2h-2zM3254.0 1336.0h2v2h-2zM3272.0 1336.0h2v2h-2zM3290.0 1336.0h2v2h-2zM3308.0 1336.0h2v2h-2zM3326.0 1336.0h2v2h-2zM3344.0 1336.0h2v2h-2zM3362.0 1336.0h2v2h-2zM3380.0 1336.0h2v2h-2zM3398.0 1336.0h2v2h-2zM3416.0 1336.0h2v2h-2zM3434.0 1336.0h2v2h-2zM3452.0 1336.0h2v2h-2zM3470.0 1336.0h2v2h-2zM3488.0 1336.0h2v2h-2zM3506.0 1336.0h2v2h-2zM3524.0 1336.0h2v2h-2zM3542.0 1336.0h2v2h-2zM3560.0 1336.0h2v2h-2zM3578.0 1336.0h2v2h-2zM3596.0 1336.0h2v2h-2zM3614.0 1336.0h2v2h-2zM3632.0 1336.0h2v2h-2zM3650.0 1336.0h2v2h-2zM3668.0 1336.0h2v2h-2zM3686.0 1336.0h2v2h-2zM3704.0 1336.0h2v2h-2zM3722.0 1336.0h2v2h-2zM3740.0 1336.0h2v2h-2zM3758.0 1336.0h2v2h-2zM3776.0 1336.0h2v2h-2zM428.0 1264.0h2v2h-2zM446.0 1264.0h2v2h-2zM464.0 1264.0h2v2h-2zM482.0 1264.0h2v2h-2zM500.0 1264.0h2v2h-2zM518.0 1264.0h2v2h-2zM536.0 1264.0h2v2h-2zM554.0 1264.0h2v2h-2zM572.0 1264.0h2v2h-2zM590.0 1264.0h2v2h-2zM608.0 1264.0h2v2h-2zM626.0 1264.0h2v2h-2zM644.0 1264.0h2v2h-2zM662.0 1264.0h2v2h-2zM680.0 1264.0h2v2h-2zM698.0 1264.0h2v2h-2zM716.0 1264.0h2v2h-2zM734.0 1264.0h2v2h-2zM752.0 1264.0h2v2h-2zM770.0 1264.0h2v2h-2zM788.0 1264.0h2v2h-2zM806.0 1264.0h2v2h-2zM824.0 1264.0h2v2h-2zM842.0 1264.0h2v2h-2zM860.0 1264.0h2v2h-2zM878.0 1264.0h2v2h-2zM896.0 1264.0h2v2h-2zM914.0 1264.0h2v2h-2zM932.0 1264.0h2v2h-2zM950.0 1264.0h2v2h-2zM968.0 1264.0h2v2h-2zM986.0 1264.0h2v2h-2zM1004.0 1264.0h2v2h-2zM1022.0 1264.0h2v2h-2zM1040.0 1264.0h2v2h-2zM1058.0 1264.0h2v2h-2zM1076.0 1264.0h2v2h-2zM1094.0 1264.0h2v2h-2zM1112.0 1264.0h2v2h-2zM1130.0 1264.0h2v2h-2zM1148.0 1264.0h2v2h-2zM1166.0 1264.0h2v2h-2zM1184.0 1264.0h2v2h-2zM1202.0 1264.0h2v2h-2zM1220.0 1264.0h2v2h-2zM1238.0 1264.0h2v2h-2zM1256.0 1264.0h2v2h-2zM1274.0 1264.0h2v2h-2zM1292.0 1264.0h2v2h-2zM1310.0 1264.0h2v2h-2zM1328.0 1264.0h2v2h-2zM1346.0 1264.0h2v2h-2zM1364.0 1264.0h2v2h-2zM1382.0 1264.0h2v2h-2zM1400.0 1264.0h2v2h-2zM1418.0 1264.0h2v2h-2zM1436.0 1264.0h2v2h-2zM1454.0 1264.0h2v2h-2zM1472.0 1264.0h2v2h-2zM1490.0 1264.0h2v2h-2zM1508.0 1264.0h2v2h-2zM1526.0 1264.0h2v2h-2zM1544.0 1264.0h2v2h-2zM1562.0 1264.0h2v2h-2zM1580.0 1264.0h2v2h-2zM1598.0 1264.0h2v2h-2zM1616.0 1264.0h2v2h-2zM1634.0 1264.0h2v2h-2zM1652.0 1264.0h2v2h-2zM1670.0 1264.0h2v2h-2zM1688.0 1264.0h2v2h-2zM1706.0 1264.0h2v2h-2zM1724.0 1264.0h2v2h-2zM1742.0 1264.0h2v2h-2zM1760.0 1264.0h2v2h-2zM1778.0 1264.0h2v2h-2zM1796.0 1264.0h2v2h-2zM1814.0 1264.0h2v2h-2zM1832.0 1264.0h2v2h-2zM1850.0 1264.0h2v2h-2zM1868.0 1264.0h2v2h-2zM1886.0 1264.0h2v2h-2zM1904.0 1264.0h2v2h-2zM1922.0 1264.0h2v2h-2zM1940.0 1264.0h2v2h-2zM1958.0 1264.0h2v2h-2zM1976.0 1264.0h2v2h-2zM1994.0 1264.0h2v2h-2zM2012.0 1264.0h2v2h-2zM2030.0 1264.0h2v2h-2zM2048.0 1264.0h2v2h-2zM2066.0 1264.0h2v2h-2zM2084.0 1264.0h2v2h-2zM2102.0 1264.0h2v2h-2zM2120.0 1264.0h2v2h-2zM2138.0 1264.0h2v2h-2zM2156.0 1264.0h2v2h-2zM2174.0 1264.0h2v2h-2zM2192.0 1264.0h2v2h-2zM2210.0 1264.0h2v2h-2zM2228.0 1264.0h2v2h-2zM2246.0 1264.0h2v2h-2zM2264.0 1264.0h2v2h-2zM2282.0 1264.0h2v2h-2zM2300.0 1264.0h2v2h-2zM2318.0 1264.0h2v2h-2zM2336.0 1264.0h2v2h-2zM2354.0 1264.0h2v2h-2zM2372.0 1264.0h2v2h-2zM2390.0 1264.0h2v2h-2zM2408.0 1264.0h2v2h-2zM2426.0 1264.0h2v2h-2zM2444.0 1264.0h2v2h-2zM2462.0 1264.0h2v2h-2zM2480.0 1264.0h2v2h-2zM2498.0 1264.0h2v2h-2zM2516.0 1264.0h2v2h-2zM2534.0 1264.0h2v2h-2zM2552.0 1264.0h2v2h-2zM2570.0 1264.0h2v2h-2zM2588.0 1264.0h2v2h-2zM2606.0 1264.0h2v2h-2zM2624.0 1264.0h2v2h-2zM2642.0 1264.0h2v2h-2zM2660.0 1264.0h2v2h-2zM2678.0 1264.0h2v2h-2zM2696.0 1264.0h2v2h-2zM2714.0 1264.0h2v2h-2zM2732.0 1264.0h2v2h-2zM2750.0 1264.0h2v2h-2zM2768.0 1264.0h2v2h-2zM2786.0 1264.0h2v2h-2zM2804.0 1264.0h2v2h-2zM2822.0 1264.0h2v2h-2zM2840.0 1264.0h2v2h-2zM2858.0 1264.0h2v2h-2zM2876.0 1264.0h2v2h-2zM2894.0 1264.0h2v2h-2zM2912.0 1264.0h2v2h-2zM2930.0 1264.0h2v2h-2zM2948.0 1264.0h2v2h-2zM2966.0 1264.0h2v2h-2zM2984.0 1264.0h2v2h-2zM3002.0 1264.0h2v2h-2zM3020.0 1264.0h2v2h-2zM3038.0 1264.0h2v2h-2zM3056.0 1264.0h2v2h-2zM3074.0 1264.0h2v2h-2zM3092.0 1264.0h2v2h-2zM3110.0 1264.0h2v2h-2zM3128.0 1264.0h2v2h-2zM3146.0 1264.0h2v2h-2zM3164.0 1264.0h2v2h-2zM3182.0 1264.0h2v2h-2zM3200.0 1264.0h2v2h-2zM3218.0 1264.0h2v2h-2zM3236.0 1264.0h2v2h-2zM3254.0 1264.0h2v2h-2zM3272.0 1264.0h2v2h-2zM3290.0 1264.0h2v2h-2zM3308.0 1264.0h2v2h-2zM3326.0 1264.0h2v2h-2zM3344.0 1264.0h2v2h-2zM3362.0 1264.0h2v2h-2zM3380.0 1264.0h2v2h-2zM3398.0 1264.0h2v2h-2zM3416.0 1264.0h2v2h-2zM3434.0 1264.0h2v2h-2zM3452.0 1264.0h2v2h-2zM3470.0 1264.0h2v2h-2zM3488.0 1264.0h2v2h-2zM3506.0 1264.0h2v2h-2zM3524.0 1264.0h2v2h-2zM3542.0 1264.0h2v2h-2zM3560.0 1264.0h2v2h-2zM3578.0 1264.0h2v2h-2zM3596.0 1264.0h2v2h-2zM3614.0 1264.0h2v2h-2zM3632.0 1264.0h2v2h-2zM3650.0 1264.0h2v2h-2zM3668.0 1264.0h2v2h-2zM3686.0 1264.0h2v2h-2zM3704.0 1264.0h2v2h-2zM3722.0 1264.0h2v2h-2zM3740.0 1264.0h2v2h-2zM3758.0 1264.0h2v2h-2zM3776.0 1264.0h2v2h-2zM553.5 1552.0h2v2h-2zM553.5 1537.6h2v2h-2zM553.5 1523.2h2v2h-2zM553.5 1508.8h2v2h-2zM553.5 1494.4h2v2h-2zM553.5 1480.0h2v2h-2zM553.5 1465.6h2v2h-2zM553.5 1451.2h2v2h-2zM553.5 1436.8h2v2h-2zM553.5 1422.4h2v2h-2zM553.5 1408.0h2v2h-2zM553.5 1393.6h2v2h-2zM553.5 1379.2h2v2h-2zM553.5 1364.8h2v2h-2zM553.5 1350.4h2v2h-2zM553.5 1336.0h2v2h-2zM553.5 1321.6h2v2h-2zM553.5 1307.2h2v2h-2zM553.5 1292.8h2v2h-2zM553.5 1278.4h2v2h-2zM553.5 1264.0h2v2h-2zM553.5 1249.6h2v2h-2zM841.5 1552.0h2v2h-2zM841.5 1537.6h2v2h-2zM841.5 1523.2h2v2h-2zM841.5 1508.8h2v2h-2zM841.5 1494.4h2v2h-2zM841.5 1480.0h2v2h-2zM841.5 1465.6h2v2h-2zM841.5 1451.2h2v2h-2zM841.5 1436.8h2v2h-2zM841.5 1422.4h2v2h-2zM841.5 1408.0h2v2h-2zM841.5 1393.6h2v2h-2zM841.5 1379.2h2v2h-2zM841.5 1364.8h2v2h-2zM841.5 1350.4h2v2h-2zM841.5 1336.0h2v2h-2zM841.5 1321.6h2v2h-2zM841.5 1307.2h2v2h-2zM841.5 1292.8h2v2h-2zM841.5 1278.4h2v2h-2zM841.5 1264.0h2v2h-2zM841.5 1249.6h2v2h-2zM1129.5 1552.0h2v2h-2zM1129.5 1537.6h2v2h-2zM1129.5 1523.2h2v2h-2zM1129.5 1508.8h2v2h-2zM1129.5 1494.4h2v2h-2zM1129.5 1480.0h2v2h-2zM1129.5 1465.6h2v2h-2zM1129.5 1451.2h2v2h-2zM1129.5 1436.8h2v2h-2zM1129.5 1422.4h2v2h-2zM1129.5 1408.0h2v2h-2zM1129.5 1393.6h2v2h-2zM1129.5 1379.2h2v2h-2zM1129.5 1364.8h2v2h-2zM1129.5 1350.4h2v2h-2zM1129.5 1336.0h2v2h-2zM1129.5 1321.6h2v2h-2zM1129.5 1307.2h2v2h-2zM1129.5 1292.8h2v2h-2zM1129.5 1278.4h2v2h-2zM1129.5 1264.0h2v2h-2zM1129.5 1249.6h2v2h-2zM1417.5 1552.0h2v2h-2zM1417.5 1537.6h2v2h-2zM1417.5 1523.2h2v2h-2zM1417.5 1508.8h2v2h-2zM1417.5 1494.4h2v2h-2zM1417.5 1480.0h2v2h-2zM1417.5 1465.6h2v2h-2zM1417.5 1451.2h2v2h-2zM1417.5 1436.8h2v2h-2zM1417.5 1422.4h2v2h-2zM1417.5 1408.0h2v2h-2zM1417.5 1393.6h2v2h-2zM1417.5 1379.2h2v2h-2zM1417.5 1364.8h2v2h-2zM1417.5 1350.4h2v2h-2zM1417.5 1336.0h2v2h-2zM1417.5 1321.6h2v2h-2zM1417.5 1307.2h2v2h-2zM1417.5 1292.8h2v2h-2zM1417.5 1278.4h2v2h-2zM1417.5 1264.0h2v2h-2zM1417.5 1249.6h2v2h-2zM1705.5 1552.0h2v2h-2zM1705.5 1537.6h2v2h-2zM1705.5 1523.2h2v2h-2zM1705.5 1508.8h2v2h-2zM1705.5 1494.4h2v2h-2zM1705.5 1480.0h2v2h-2zM1705.5 1465.6h2v2h-2zM1705.5 1451.2h2v2h-2zM1705.5 1436.8h2v2h-2zM1705.5 1422.4h2v2h-2zM1705.5 1408.0h2v2h-2zM1705.5 1393.6h2v2h-2zM1705.5 1379.2h2v2h-2zM1705.5 1364.8h2v2h-2zM1705.5 1350.4h2v2h-2zM1705.5 1336.0h2v2h-2zM1705.5 1321.6h2v2h-2zM1705.5 1307.2h2v2h-2zM1705.5 1292.8h2v2h-2zM1705.5 1278.4h2v2h-2zM1705.5 1264.0h2v2h-2zM1705.5 1249.6h2v2h-2zM1993.5 1552.0h2v2h-2zM1993.5 1537.6h2v2h-2zM1993.5 1523.2h2v2h-2zM1993.5 1508.8h2v2h-2zM1993.5 1494.4h2v2h-2zM1993.5 1480.0h2v2h-2zM1993.5 1465.6h2v2h-2zM1993.5 1451.2h2v2h-2zM1993.5 1436.8h2v2h-2zM1993.5 1422.4h2v2h-2zM1993.5 1408.0h2v2h-2zM1993.5 1393.6h2v2h-2zM1993.5 1379.2h2v2h-2zM1993.5 1364.8h2v2h-2zM1993.5 1350.4h2v2h-2zM1993.5 1336.0h2v2h-2zM1993.5 1321.6h2v2h-2zM1993.5 1307.2h2v2h-2zM1993.5 1292.8h2v2h-2zM1993.5 1278.4h2v2h-2zM1993.5 1264.0h2v2h-2zM1993.5 1249.6h2v2h-2zM2281.5 1552.0h2v2h-2zM2281.5 1537.6h2v2h-2zM2281.5 1523.2h2v2h-2zM2281.5 1508.8h2v2h-2zM2281.5 1494.4h2v2h-2zM2281.5 1480.0h2v2h-2zM2281.5 1465.6h2v2h-2zM2281.5 1451.2h2v2h-2zM2281.5 1436.8h2v2h-2zM2281.5 1422.4h2v2h-2zM2281.5 1408.0h2v2h-2zM2281.5 1393.6h2v2h-2zM2281.5 1379.2h2v2h-2zM2281.5 1364.8h2v2h-2zM2281.5 1350.4h2v2h-2zM2281.5 1336.0h2v2h-2zM2281.5 1321.6h2v2h-2zM2281.5 1307.2h2v2h-2zM2281.5 1292.8h2v2h-2zM2281.5 1278.4h2v2h-2zM2281.5 1264.0h2v2h-2zM2281.5 1249.6h2v2h-2zM2569.5 1552.0h2v2h-2zM2569.5 1537.6h2v2h-2zM2569.5 1523.2h2v2h-2zM2569.5 1508.8h2v2h-2zM2569.5 1494.4h2v2h-2zM2569.5 1480.0h2v2h-2zM2569.5 1465.6h2v2h-2zM2569.5 1451.2h2v2h-2zM2569.5 1436.8h2v2h-2zM2569.5 1422.4h2v2h-2zM2569.5 1408.0h2v2h-2zM2569.5 1393.6h2v2h-2zM2569.5 1379.2h2v2h-2zM2569.5 1364.8h2v2h-2zM2569.5 1350.4h2v2h-2zM2569.5 1336.0h2v2h-2zM2569.5 1321.6h2v2h-2zM2569.5 1307.2h2v2h-2zM2569.5 1292.8h2v2h-2zM2569.5 1278.4h2v2h-2zM2569.5 1264.0h2v2h-2zM2569.5 1249.6h2v2h-2zM2857.5 1552.0h2v2h-2zM2857.5 1537.6h2v2h-2zM2857.5 1523.2h2v2h-2zM2857.5 1508.8h2v2h-2zM2857.5 1494.4h2v2h-2zM2857.5 1480.0h2v2h-2zM2857.5 1465.6h2v2h-2zM2857.5 1451.2h2v2h-2zM2857.5 1436.8h2v2h-2zM2857.5 1422.4h2v2h-2zM2857.5 1408.0h2v2h-2zM2857.5 1393.6h2v2h-2zM2857.5 1379.2h2v2h-2zM2857.5 1364.8h2v2h-2zM2857.5 1350.4h2v2h-2zM2857.5 1336.0h2v2h-2zM2857.5 1321.6h2v2h-2zM2857.5 1307.2h2v2h-2zM2857.5 1292.8h2v2h-2zM2857.5 1278.4h2v2h-2zM2857.5 1264.0h2v2h-2zM2857.5 1249.6h2v2h-2zM3145.5 1552.0h2v2h-2zM3145.5 1537.6h2v2h-2zM3145.5 1523.2h2v2h-2zM3145.5 1508.8h2v2h-2zM3145.5 1494.4h2v2h-2zM3145.5 1480.0h2v2h-2zM3145.5 1465.6h2v2h-2zM3145.5 1451.2h2v2h-2zM3145.5 1436.8h2v2h-2zM3145.5 1422.4h2v2h-2zM3145.5 1408.0h2v2h-2zM3145.5 1393.6h2v2h-2zM3145.5 1379.2h2v2h-2zM3145.5 1364.8h2v2h-2zM3145.5 1350.4h2v2h-2zM3145.5 1336.0h2v2h-2zM3145.5 1321.6h2v2h-2zM3145.5 1307.2h2v2h-2zM3145.5 1292.8h2v2h-2zM3145.5 1278.4h2v2h-2zM3145.5 1264.0h2v2h-2zM3145.5 1249.6h2v2h-2zM3433.5 1552.0h2v2h-2zM3433.5 1537.6h2v2h-2zM3433.5 1523.2h2v2h-2zM3433.5 1508.8h2v2h-2zM3433.5 1494.4h2v2h-2zM3433.5 1480.0h2v2h-2zM3433.5 1465.6h2v2h-2zM3433.5 1451.2h2v2h-2zM3433.5 1436.8h2v2h-2zM3433.5 1422.4h2v2h-2zM3433.5 1408.0h2v2h-2zM3433.5 1393.6h2v2h-2zM3433.5 1379.2h2v2h-2zM3433.5 1364.8h2v2h-2zM3433.5 1350.4h2v2h-2zM3433.5 1336.0h2v2h-2zM3433.5 1321.6h2v2h-2zM3433.5 1307.2h2v2h-2zM3433.5 1292.8h2v2h-2zM3433.5 1278.4h2v2h-2zM3433.5 1264.0h2v2h-2zM3433.5 1249.6h2v2h-2zM3721.5 1552.0h2v2h-2zM3721.5 1537.6h2v2h-2zM3721.5 1523.2h2v2h-2zM3721.5 1508.8h2v2h-2zM3721.5 1494.4h2v2h-2zM3721.5 1480.0h2v2h-2zM3721.5 1465.6h2v2h-2zM3721.5 1451.2h2v2h-2zM3721.5 1436.8h2v2h-2zM3721.5 1422.4h2v2h-2zM3721.5 1408.0h2v2h-2zM3721.5 1393.6h2v2h-2zM3721.5 1379.2h2v2h-2zM3721.5 1364.8h2v2h-2zM3721.5 1350.4h2v2h-2zM3721.5 1336.0h2v2h-2zM3721.5 1321.6h2v2h-2zM3721.5 1307.2h2v2h-2zM3721.5 1292.8h2v2h-2zM3721.5 1278.4h2v2h-2zM3721.5 1264.0h2v2h-2zM3721.5 1249.6h2v2h-2zM697.5 1516.0h2v2h-2zM697.5 1444.0h2v2h-2zM697.5 1372.0h2v2h-2zM697.5 1300.0h2v2h-2zM985.5 1516.0h2v2h-2zM985.5 1444.0h2v2h-2zM985.5 1372.0h2v2h-2zM985.5 1300.0h2v2h-2zM1273.5 1516.0h2v2h-2zM1273.5 1444.0h2v2h-2zM1273.5 1372.0h2v2h-2zM1273.5 1300.0h2v2h-2zM1561.5 1516.0h2v2h-2zM1561.5 1444.0h2v2h-2zM1561.5 1372.0h2v2h-2zM1561.5 1300.0h2v2h-2zM1849.5 1516.0h2v2h-2zM1849.5 1444.0h2v2h-2zM1849.5 1372.0h2v2h-2zM1849.5 1300.0h2v2h-2zM2137.5 1516.0h2v2h-2zM2137.5 1444.0h2v2h-2zM2137.5 1372.0h2v2h-2zM2137.5 1300.0h2v2h-2zM2425.5 1516.0h2v2h-2zM2425.5 1444.0h2v2h-2zM2425.5 1372.0h2v2h-2zM2425.5 1300.0h2v2h-2zM2713.5 1516.0h2v2h-2zM2713.5 1444.0h2v2h-2zM2713.5 1372.0h2v2h-2zM2713.5 1300.0h2v2h-2zM3001.5 1516.0h2v2h-2zM3001.5 1444.0h2v2h-2zM3001.5 1372.0h2v2h-2zM3001.5 1300.0h2v2h-2zM3289.5 1516.0h2v2h-2zM3289.5 1444.0h2v2h-2zM3289.5 1372.0h2v2h-2zM3289.5 1300.0h2v2h-2zM3577.5 1516.0h2v2h-2zM3577.5 1444.0h2v2h-2zM3577.5 1372.0h2v2h-2zM3577.5 1300.0h2v2h-2zM446.0 1834.0h2v2h-2zM482.0 1834.0h2v2h-2zM518.0 1834.0h2v2h-2zM554.0 1834.0h2v2h-2zM590.0 1834.0h2v2h-2zM626.0 1834.0h2v2h-2zM662.0 1834.0h2v2h-2zM698.0 1834.0h2v2h-2zM734.0 1834.0h2v2h-2zM770.0 1834.0h2v2h-2zM806.0 1834.0h2v2h-2zM842.0 1834.0h2v2h-2zM878.0 1834.0h2v2h-2zM914.0 1834.0h2v2h-2zM950.0 1834.0h2v2h-2zM986.0 1834.0h2v2h-2zM1022.0 1834.0h2v2h-2zM1058.0 1834.0h2v2h-2zM1094.0 1834.0h2v2h-2zM1130.0 1834.0h2v2h-2zM1166.0 1834.0h2v2h-2zM1202.0 1834.0h2v2h-2zM1238.0 1834.0h2v2h-2zM1274.0 1834.0h2v2h-2zM1310.0 1834.0h2v2h-2zM1346.0 1834.0h2v2h-2zM1382.0 1834.0h2v2h-2zM1418.0 1834.0h2v2h-2zM1454.0 1834.0h2v2h-2zM1490.0 1834.0h2v2h-2zM1526.0 1834.0h2v2h-2zM1562.0 1834.0h2v2h-2zM1598.0 1834.0h2v2h-2zM1634.0 1834.0h2v2h-2zM1670.0 1834.0h2v2h-2zM1706.0 1834.0h2v2h-2zM1742.0 1834.0h2v2h-2zM1778.0 1834.0h2v2h-2zM1814.0 1834.0h2v2h-2zM1850.0 1834.0h2v2h-2zM1886.0 1834.0h2v2h-2zM1922.0 1834.0h2v2h-2zM1958.0 1834.0h2v2h-2zM1994.0 1834.0h2v2h-2zM2030.0 1834.0h2v2h-2zM2066.0 1834.0h2v2h-2zM2102.0 1834.0h2v2h-2zM2138.0 1834.0h2v2h-2zM2174.0 1834.0h2v2h-2zM2210.0 1834.0h2v2h-2zM2246.0 1834.0h2v2h-2zM2282.0 1834.0h2v2h-2zM2318.0 1834.0h2v2h-2zM2354.0 1834.0h2v2h-2zM2390.0 1834.0h2v2h-2zM2426.0 1834.0h2v2h-2zM2462.0 1834.0h2v2h-2zM2498.0 1834.0h2v2h-2zM2534.0 1834.0h2v2h-2zM2570.0 1834.0h2v2h-2zM2606.0 1834.0h2v2h-2zM2642.0 1834.0h2v2h-2zM2678.0 1834.0h2v2h-2zM2714.0 1834.0h2v2h-2zM2750.0 1834.0h2v2h-2zM2786.0 1834.0h2v2h-2zM2822.0 1834.0h2v2h-2zM2858.0 1834.0h2v2h-2zM2894.0 1834.0h2v2h-2zM2930.0 1834.0h2v2h-2zM2966.0 1834.0h2v2h-2zM3002.0 1834.0h2v2h-2zM3038.0 1834.0h2v2h-2zM3074.0 1834.0h2v2h-2zM3110.0 1834.0h2v2h-2zM3146.0 1834.0h2v2h-2zM3182.0 1834.0h2v2h-2zM3218.0 1834.0h2v2h-2zM3254.0 1834.0h2v2h-2zM3290.0 1834.0h2v2h-2zM3326.0 1834.0h2v2h-2zM3362.0 1834.0h2v2h-2zM3398.0 1834.0h2v2h-2zM3434.0 1834.0h2v2h-2zM3470.0 1834.0h2v2h-2zM3506.0 1834.0h2v2h-2zM3542.0 1834.0h2v2h-2zM3578.0 1834.0h2v2h-2zM3614.0 1834.0h2v2h-2zM3650.0 1834.0h2v2h-2zM3686.0 1834.0h2v2h-2zM3722.0 1834.0h2v2h-2zM3758.0 1834.0h2v2h-2zM428.0 1743.5h2v2h-2zM464.0 1743.5h2v2h-2zM500.0 1743.5h2v2h-2zM536.0 1743.5h2v2h-2zM572.0 1743.5h2v2h-2zM608.0 1743.5h2v2h-2zM644.0 1743.5h2v2h-2zM680.0 1743.5h2v2h-2zM716.0 1743.5h2v2h-2zM752.0 1743.5h2v2h-2zM788.0 1743.5h2v2h-2zM824.0 1743.5h2v2h-2zM860.0 1743.5h2v2h-2zM896.0 1743.5h2v2h-2zM932.0 1743.5h2v2h-2zM968.0 1743.5h2v2h-2zM1004.0 1743.5h2v2h-2zM1040.0 1743.5h2v2h-2zM1076.0 1743.5h2v2h-2zM1112.0 1743.5h2v2h-2zM1148.0 1743.5h2v2h-2zM1184.0 1743.5h2v2h-2zM1220.0 1743.5h2v2h-2zM1256.0 1743.5h2v2h-2zM1292.0 1743.5h2v2h-2zM1328.0 1743.5h2v2h-2zM1364.0 1743.5h2v2h-2zM1400.0 1743.5h2v2h-2zM1436.0 1743.5h2v2h-2zM1472.0 1743.5h2v2h-2zM1508.0 1743.5h2v2h-2zM1544.0 1743.5h2v2h-2zM1580.0 1743.5h2v2h-2zM1616.0 1743.5h2v2h-2zM1652.0 1743.5h2v2h-2zM1688.0 1743.5h2v2h-2zM1724.0 1743.5h2v2h-2zM1760.0 1743.5h2v2h-2zM1796.0 1743.5h2v2h-2zM1832.0 1743.5h2v2h-2zM1868.0 1743.5h2v2h-2zM1904.0 1743.5h2v2h-2zM1940.0 1743.5h2v2h-2zM1976.0 1743.5h2v2h-2zM2012.0 1743.5h2v2h-2zM2048.0 1743.5h2v2h-2zM2084.0 1743.5h2v2h-2zM2120.0 1743.5h2v2h-2zM2156.0 1743.5h2v2h-2zM2192.0 1743.5h2v2h-2zM2228.0 1743.5h2v2h-2zM2264.0 1743.5h2v2h-2zM2300.0 1743.5h2v2h-2zM2336.0 1743.5h2v2h-2zM2372.0 1743.5h2v2h-2zM2408.0 1743.5h2v2h-2zM2444.0 1743.5h2v2h-2zM2480.0 1743.5h2v2h-2zM2516.0 1743.5h2v2h-2zM2552.0 1743.5h2v2h-2zM2588.0 1743.5h2v2h-2zM2624.0 1743.5h2v2h-2zM2660.0 1743.5h2v2h-2zM2696.0 1743.5h2v2h-2zM2732.0 1743.5h2v2h-2zM2768.0 1743.5h2v2h-2zM2804.0 1743.5h2v2h-2zM2840.0 1743.5h2v2h-2zM2876.0 1743.5h2v2h-2zM2912.0 1743.5h2v2h-2zM2948.0 1743.5h2v2h-2zM2984.0 1743.5h2v2h-2zM3020.0 1743.5h2v2h-2zM3056.0 1743.5h2v2h-2zM3092.0 1743.5h2v2h-2zM3128.0 1743.5h2v2h-2zM3164.0 1743.5h2v2h-2zM3200.0 1743.5h2v2h-2zM3236.0 1743.5h2v2h-2zM3272.0 1743.5h2v2h-2zM3308.0 1743.5h2v2h-2zM3344.0 1743.5h2v2h-2zM3380.0 1743.5h2v2h-2zM3416.0 1743.5h2v2h-2zM3452.0 1743.5h2v2h-2zM3488.0 1743.5h2v2h-2zM3524.0 1743.5h2v2h-2zM3560.0 1743.5h2v2h-2zM3596.0 1743.5h2v2h-2zM3632.0 1743.5h2v2h-2zM3668.0 1743.5h2v2h-2zM3704.0 1743.5h2v2h-2zM3740.0 1743.5h2v2h-2zM3776.0 1743.5h2v2h-2zM428.0 1656.0h2v2h-2zM464.0 1656.0h2v2h-2zM500.0 1656.0h2v2h-2zM536.0 1656.0h2v2h-2zM572.0 1656.0h2v2h-2zM608.0 1656.0h2v2h-2zM644.0 1656.0h2v2h-2zM680.0 1656.0h2v2h-2zM716.0 1656.0h2v2h-2zM752.0 1656.0h2v2h-2zM788.0 1656.0h2v2h-2zM824.0 1656.0h2v2h-2zM860.0 1656.0h2v2h-2zM896.0 1656.0h2v2h-2zM932.0 1656.0h2v2h-2zM968.0 1656.0h2v2h-2zM1004.0 1656.0h2v2h-2zM1040.0 1656.0h2v2h-2zM1076.0 1656.0h2v2h-2zM1112.0 1656.0h2v2h-2zM1148.0 1656.0h2v2h-2zM1184.0 1656.0h2v2h-2zM1220.0 1656.0h2v2h-2zM1256.0 1656.0h2v2h-2zM1292.0 1656.0h2v2h-2zM1328.0 1656.0h2v2h-2zM1364.0 1656.0h2v2h-2zM1400.0 1656.0h2v2h-2zM1436.0 1656.0h2v2h-2zM1472.0 1656.0h2v2h-2zM1508.0 1656.0h2v2h-2zM1544.0 1656.0h2v2h-2zM1580.0 1656.0h2v2h-2zM1616.0 1656.0h2v2h-2zM1652.0 1656.0h2v2h-2zM1688.0 1656.0h2v2h-2zM1724.0 1656.0h2v2h-2zM1760.0 1656.0h2v2h-2zM1796.0 1656.0h2v2h-2zM1832.0 1656.0h2v2h-2zM1868.0 1656.0h2v2h-2zM1904.0 1656.0h2v2h-2zM1940.0 1656.0h2v2h-2zM1976.0 1656.0h2v2h-2zM2012.0 1656.0h2v2h-2zM2048.0 1656.0h2v2h-2zM2084.0 1656.0h2v2h-2zM2120.0 1656.0h2v2h-2zM2156.0 1656.0h2v2h-2zM2192.0 1656.0h2v2h-2zM2228.0 1656.0h2v2h-2zM2264.0 1656.0h2v2h-2zM2300.0 1656.0h2v2h-2zM2336.0 1656.0h2v2h-2zM2372.0 1656.0h2v2h-2zM2408.0 1656.0h2v2h-2zM2444.0 1656.0h2v2h-2zM2480.0 1656.0h2v2h-2zM2516.0 1656.0h2v2h-2zM2552.0 1656.0h2v2h-2zM2588.0 1656.0h2v2h-2zM2624.0 1656.0h2v2h-2zM2660.0 1656.0h2v2h-2zM2696.0 1656.0h2v2h-2zM2732.0 1656.0h2v2h-2zM2768.0 1656.0h2v2h-2zM2804.0 1656.0h2v2h-2zM2840.0 1656.0h2v2h-2zM2876.0 1656.0h2v2h-2zM2912.0 1656.0h2v2h-2zM2948.0 1656.0h2v2h-2zM2984.0 1656.0h2v2h-2zM3020.0 1656.0h2v2h-2zM3056.0 1656.0h2v2h-2zM3092.0 1656.0h2v2h-2zM3128.0 1656.0h2v2h-2zM3164.0 1656.0h2v2h-2zM3200.0 1656.0h2v2h-2zM3236.0 1656.0h2v2h-2zM3272.0 1656.0h2v2h-2zM3308.0 1656.0h2v2h-2zM3344.0 1656.0h2v2h-2zM3380.0 1656.0h2v2h-2zM3416.0 1656.0h2v2h-2zM3452.0 1656.0h2v2h-2zM3488.0 1656.0h2v2h-2zM3524.0 1656.0h2v2h-2zM3560.0 1656.0h2v2h-2zM3596.0 1656.0h2v2h-2zM3632.0 1656.0h2v2h-2zM3668.0 1656.0h2v2h-2zM3704.0 1656.0h2v2h-2zM3740.0 1656.0h2v2h-2zM3776.0 1656.0h2v2h-2zM553.5 1834.0h2v2h-2zM553.5 1815.9h2v2h-2zM553.5 1797.8h2v2h-2zM553.5 1779.7h2v2h-2zM553.5 1761.6h2v2h-2zM553.5 1743.5h2v2h-2zM553.5 1726.0h2v2h-2zM553.5 1708.5h2v2h-2zM553.5 1691.0h2v2h-2zM553.5 1673.5h2v2h-2zM553.5 1656.0h2v2h-2zM553.5 1638.5h2v2h-2zM553.5 1621.0h2v2h-2zM553.5 1603.5h2v2h-2zM553.5 1586.0h2v2h-2zM553.5 1568.5h2v2h-2zM841.5 1834.0h2v2h-2zM841.5 1815.9h2v2h-2zM841.5 1797.8h2v2h-2zM841.5 1779.7h2v2h-2zM841.5 1761.6h2v2h-2zM841.5 1743.5h2v2h-2zM841.5 1726.0h2v2h-2zM841.5 1708.5h2v2h-2zM841.5 1691.0h2v2h-2zM841.5 1673.5h2v2h-2zM841.5 1656.0h2v2h-2zM841.5 1638.5h2v2h-2zM841.5 1621.0h2v2h-2zM841.5 1603.5h2v2h-2zM841.5 1586.0h2v2h-2zM841.5 1568.5h2v2h-2zM1129.5 1834.0h2v2h-2zM1129.5 1815.9h2v2h-2zM1129.5 1797.8h2v2h-2zM1129.5 1779.7h2v2h-2zM1129.5 1761.6h2v2h-2zM1129.5 1743.5h2v2h-2zM1129.5 1726.0h2v2h-2zM1129.5 1708.5h2v2h-2zM1129.5 1691.0h2v2h-2zM1129.5 1673.5h2v2h-2zM1129.5 1656.0h2v2h-2zM1129.5 1638.5h2v2h-2zM1129.5 1621.0h2v2h-2zM1129.5 1603.5h2v2h-2zM1129.5 1586.0h2v2h-2zM1129.5 1568.5h2v2h-2zM1417.5 1834.0h2v2h-2zM1417.5 1815.9h2v2h-2zM1417.5 1797.8h2v2h-2zM1417.5 1779.7h2v2h-2zM1417.5 1761.6h2v2h-2zM1417.5 1743.5h2v2h-2zM1417.5 1726.0h2v2h-2zM1417.5 1708.5h2v2h-2zM1417.5 1691.0h2v2h-2zM1417.5 1673.5h2v2h-2zM1417.5 1656.0h2v2h-2zM1417.5 1638.5h2v2h-2zM1417.5 1621.0h2v2h-2zM1417.5 1603.5h2v2h-2zM1417.5 1586.0h2v2h-2zM1417.5 1568.5h2v2h-2zM1705.5 1834.0h2v2h-2zM1705.5 1815.9h2v2h-2zM1705.5 1797.8h2v2h-2zM1705.5 1779.7h2v2h-2zM1705.5 1761.6h2v2h-2zM1705.5 1743.5h2v2h-2zM1705.5 1726.0h2v2h-2zM1705.5 1708.5h2v2h-2zM1705.5 1691.0h2v2h-2zM1705.5 1673.5h2v2h-2zM1705.5 1656.0h2v2h-2zM1705.5 1638.5h2v2h-2zM1705.5 1621.0h2v2h-2zM1705.5 1603.5h2v2h-2zM1705.5 1586.0h2v2h-2zM1705.5 1568.5h2v2h-2zM1993.5 1834.0h2v2h-2zM1993.5 1815.9h2v2h-2zM1993.5 1797.8h2v2h-2zM1993.5 1779.7h2v2h-2zM1993.5 1761.6h2v2h-2zM1993.5 1743.5h2v2h-2zM1993.5 1726.0h2v2h-2zM1993.5 1708.5h2v2h-2zM1993.5 1691.0h2v2h-2zM1993.5 1673.5h2v2h-2zM1993.5 1656.0h2v2h-2zM1993.5 1638.5h2v2h-2zM1993.5 1621.0h2v2h-2zM1993.5 1603.5h2v2h-2zM1993.5 1586.0h2v2h-2zM1993.5 1568.5h2v2h-2zM2281.5 1834.0h2v2h-2zM2281.5 1815.9h2v2h-2zM2281.5 1797.8h2v2h-2zM2281.5 1779.7h2v2h-2zM2281.5 1761.6h2v2h-2zM2281.5 1743.5h2v2h-2zM2281.5 1726.0h2v2h-2zM2281.5 1708.5h2v2h-2zM2281.5 1691.0h2v2h-2zM2281.5 1673.5h2v2h-2zM2281.5 1656.0h2v2h-2zM2281.5 1638.5h2v2h-2zM2281.5 1621.0h2v2h-2zM2281.5 1603.5h2v2h-2zM2281.5 1586.0h2v2h-2zM2281.5 1568.5h2v2h-2zM2569.5 1834.0h2v2h-2zM2569.5 1815.9h2v2h-2zM2569.5 1797.8h2v2h-2zM2569.5 1779.7h2v2h-2zM2569.5 1761.6h2v2h-2zM2569.5 1743.5h2v2h-2zM2569.5 1726.0h2v2h-2zM2569.5 1708.5h2v2h-2zM2569.5 1691.0h2v2h-2zM2569.5 1673.5h2v2h-2zM2569.5 1656.0h2v2h-2zM2569.5 1638.5h2v2h-2zM2569.5 1621.0h2v2h-2zM2569.5 1603.5h2v2h-2zM2569.5 1586.0h2v2h-2zM2569.5 1568.5h2v2h-2zM2857.5 1834.0h2v2h-2zM2857.5 1815.9h2v2h-2zM2857.5 1797.8h2v2h-2zM2857.5 1779.7h2v2h-2zM2857.5 1761.6h2v2h-2zM2857.5 1743.5h2v2h-2zM2857.5 1726.0h2v2h-2zM2857.5 1708.5h2v2h-2zM2857.5 1691.0h2v2h-2zM2857.5 1673.5h2v2h-2zM2857.5 1656.0h2v2h-2zM2857.5 1638.5h2v2h-2zM2857.5 1621.0h2v2h-2zM2857.5 1603.5h2v2h-2zM2857.5 1586.0h2v2h-2zM2857.5 1568.5h2v2h-2zM3145.5 1834.0h2v2h-2zM3145.5 1815.9h2v2h-2zM3145.5 1797.8h2v2h-2zM3145.5 1779.7h2v2h-2zM3145.5 1761.6h2v2h-2zM3145.5 1743.5h2v2h-2zM3145.5 1726.0h2v2h-2zM3145.5 1708.5h2v2h-2zM3145.5 1691.0h2v2h-2zM3145.5 1673.5h2v2h-2zM3145.5 1656.0h2v2h-2zM3145.5 1638.5h2v2h-2zM3145.5 1621.0h2v2h-2zM3145.5 1603.5h2v2h-2zM3145.5 1586.0h2v2h-2zM3145.5 1568.5h2v2h-2zM3433.5 1834.0h2v2h-2zM3433.5 1815.9h2v2h-2zM3433.5 1797.8h2v2h-2zM3433.5 1779.7h2v2h-2zM3433.5 1761.6h2v2h-2zM3433.5 1743.5h2v2h-2zM3433.5 1726.0h2v2h-2zM3433.5 1708.5h2v2h-2zM3433.5 1691.0h2v2h-2zM3433.5 1673.5h2v2h-2zM3433.5 1656.0h2v2h-2zM3433.5 1638.5h2v2h-2zM3433.5 1621.0h2v2h-2zM3433.5 1603.5h2v2h-2zM3433.5 1586.0h2v2h-2zM3433.5 1568.5h2v2h-2zM3721.5 1834.0h2v2h-2zM3721.5 1815.9h2v2h-2zM3721.5 1797.8h2v2h-2zM3721.5 1779.7h2v2h-2zM3721.5 1761.6h2v2h-2zM3721.5 1743.5h2v2h-2zM3721.5 1726.0h2v2h-2zM3721.5 1708.5h2v2h-2zM3721.5 1691.0h2v2h-2zM3721.5 1673.5h2v2h-2zM3721.5 1656.0h2v2h-2zM3721.5 1638.5h2v2h-2zM3721.5 1621.0h2v2h-2zM3721.5 1603.5h2v2h-2zM3721.5 1586.0h2v2h-2zM3721.5 1568.5h2v2h-2zM697.5 1788.8h2v2h-2zM697.5 1699.8h2v2h-2zM697.5 1612.2h2v2h-2zM985.5 1788.8h2v2h-2zM985.5 1699.8h2v2h-2zM985.5 1612.2h2v2h-2zM1273.5 1788.8h2v2h-2zM1273.5 1699.8h2v2h-2zM1273.5 1612.2h2v2h-2zM1561.5 1788.8h2v2h-2zM1561.5 1699.8h2v2h-2zM1561.5 1612.2h2v2h-2zM1849.5 1788.8h2v2h-2zM1849.5 1699.8h2v2h-2zM1849.5 1612.2h2v2h-2zM2137.5 1788.8h2v2h-2zM2137.5 1699.8h2v2h-2zM2137.5 1612.2h2v2h-2zM2425.5 1788.8h2v2h-2zM2425.5 1699.8h2v2h-2zM2425.5 1612.2h2v2h-2zM2713.5 1788.8h2v2h-2zM2713.5 1699.8h2v2h-2zM2713.5 1612.2h2v2h-2zM3001.5 1788.8h2v2h-2zM3001.5 1699.8h2v2h-2zM3001.5 1612.2h2v2h-2zM3289.5 1788.8h2v2h-2zM3289.5 1699.8h2v2h-2zM3289.5 1612.2h2v2h-2zM3577.5 1788.8h2v2h-2zM3577.5 1699.8h2v2h-2zM3577.5 1612.2h2v2h-2z" fill="#000"/><g stroke-width="2" stroke-dasharray="1.5 1.5"><line x1="418" y1="1322.6" x2="3808" y2="1322.6" stroke="#f07a7a"/><line x1="418" y1="1495.4" x2="3808" y2="1495.4" stroke="#6a6af4"/><line x1="418" y1="1657.0" x2="3808" y2="1657.0" stroke="#e85050"/><line x1="418" y1="1744.5" x2="3808" y2="1744.5" stroke="#555"/><line x1="418" y1="1835.0" x2="3808" y2="1835.0" stroke="#4040f0"/></g><path d="M519 1071.7V1120.1M537 1071.7V1106.2M555 1007.9V1079.3M573 860.3V1004.8M591 821.9V975.6M609 658.9V838.8M627 368.4V765.8M645 314.6V748.8M663 452.9V861.8M681 578.2V893.3M699 725.8V856.4M717 774.2V860.3M735 841.1V1019.4M753 860.3V971.7M771 921.8V977.1M789 683.5V938.7M807 641.2V771.9M825 664.3V790.4M843 764.2V854.9M861 724.3V843.4M879 811.9V981.0M897 927.9V1033.2M915 931.8V991.0M933 948.7V1083.2M951 931.8V1067.8M969 858.0V950.2M987 846.5V962.5M1005 899.5V979.4M1023 900.3V975.6M1041 898.7V954.8M1059 937.2V977.1M1077 930.2V977.1M1095 892.6V964.1M1113 865.7V926.4M1131 870.3V922.5M1149 860.3V914.1M1167 854.1V934.1M1185 894.9V937.2M1203 874.1V920.2M1221 887.2V920.2M1239 906.4V943.3M1257 583.6V933.3M1275 502.9V729.6M1293 599.0V847.2M1311 674.3V871.8M1329 716.6V942.5M1347 927.9V1038.6M1365 951.0V1044.8M1383 988.6V1040.9M1401 942.5V996.3M1419 908.7V962.5M1437 908.7V947.1M1455 917.9V1015.6M1473 848.8V971.7M1491 833.4V960.2M1509 893.3V1021.7M1527 1006.3V1115.5M1545 1087.0V1134.7M1563 1021.7V1115.5M1581 1038.6V1090.9M1599 1031.7V1089.3M1617 1054.7V1097.0M1635 1038.6V1094.7M1653 1052.4V1089.3M1671 1062.4V1107.8M1689 1083.2V1119.3M1707 1097.0V1147.0M1725 1117.8V1177.0M1743 1152.4V1196.9M1761 1087.0V1173.1M1779 1104.7V1177.7M1797 1139.3V1184.6M1815 1090.9V1161.6M1833 1100.1V1127.0M1851 1084.7V1129.3M1869 754.2V1100.9M1887 539.8V812.6M1905 685.8V917.9M1923 771.9V884.9M1941 808.0V944.8M1959 870.3V1000.2M1977 946.4V1060.1M1995 942.5V1069.4M2013 933.3V1004.8M2031 919.5V1033.2M2049 934.1V1025.5M2067 649.7V997.1M2085 373.8V818.8M2103 695.8V861.1M2121 754.2V910.3M2139 783.4V919.5M2157 866.4V1008.6M2175 923.3V1043.2M2193 948.7V1038.6M2211 961.7V1038.6M2229 956.4V1052.4M2247 1033.2V1098.6M2265 900.3V1098.6M2283 960.2V1044.8M2301 1024.0V1087.0M2319 979.4V1123.2M2337 1064.0V1154.7M2355 1121.6V1163.9M2373 1138.5V1179.3M2391 1173.1V1203.9M2409 1189.3V1217.7M2427 1169.3V1212.3M2445 1160.0V1202.3M2463 1152.4V1202.3M2481 1117.8V1177.0M2499 1129.3V1175.4M2517 1127.8V1173.9M2535 1125.5V1167.7M2553 1138.5V1171.6M2571 1097.0V1148.5M2589 1077.8V1139.3M2607 1077.8V1146.2M2625 1010.2V1125.5M2643 923.3V1052.4M2661 939.5V1033.2M2679 1011.7V1084.7M2697 1012.5V1067.8M2715 957.9V1029.4M2733 996.3V1054.7M2751 1007.9V1058.6M2769 946.4V1037.1M2787 958.7V1014.0M2805 981.0V1038.6M2823 931.8V1016.3M2841 914.1V981.7M2859 824.2V958.7M2877 871.8V960.2M2895 873.4V956.4M2913 938.7V1033.2M2931 965.6V1027.8M2949 904.9V1004.8M2967 919.5V1002.5M2985 885.7V958.7M3003 893.3V962.5M3021 808.8V950.2M3039 747.3V870.3M3057 602.8V820.3M3075 442.9V652.8M3093 409.1V612.8M3111 452.9V647.4M3129 574.4V692.7M3147 614.3V810.3M3165 761.9V891.0M3183 760.4V864.1M3201 778.1V941.0M3219 861.8V941.0M3237 891.0V987.1M3255 939.5V1004.8M3273 981.0V1035.5M3291 710.4V1006.3M3309 685.1V847.2M3327 710.4V862.6M3345 656.6V842.6M3363 779.6V957.9M3381 893.3V966.4M3399 917.9V998.6M3417 921.8V1002.5M3435 925.6V1004.8M3453 898.7V981.0M3471 851.1V933.3M3489 806.5V938.7M3507 864.1V933.3M3525 904.1V998.6M3543 904.1V962.5M3561 938.7V985.6M3579 942.5V988.6M3597 961.7V1002.5M3615 996.3V1062.4M3633 960.2V1050.9M3651 1016.3V1060.1M3669 1010.2V1079.3M3687 998.6V1070.1M3705 920.2V1062.4M3723 943.3V1047.1M3741 969.4V1060.1M3759 954.1V1052.4" stroke="#000" stroke-width="2"/><path d="M515 1098.8h8v14.9h-8zM533 1077.3h8v21.1h-8zM551 1011.2h8v64.9h-8zM569 879.0h8v124.8h-8zM587 837.5h8v46.4h-8zM605 659.9h8v170.9h-8zM623 404.0h8v237.0h-8zM677 759.8h8v72.6h-8zM767 925.1h8v11.1h-8zM785 686.8h8v249.3h-8zM911 950.8h8v5.0h-8zM947 949.7h8v101.8h-8zM965 917.4h8v26.4h-8zM1001 915.9h8v29.5h-8zM1019 901.3h8v14.1h-8zM1073 963.1h8v5.0h-8zM1091 927.4h8v34.1h-8zM1109 920.8h8v5.0h-8zM1127 883.6h8v33.4h-8zM1181 909.7h8v26.4h-8zM1199 903.1h8v5.0h-8zM1253 610.0h8v318.5h-8zM1307 729.9h8v85.6h-8zM1361 1025.0h8v12.6h-8zM1379 999.6h8v21.1h-8zM1397 959.7h8v35.7h-8zM1415 934.3h8v24.9h-8zM1469 857.4h8v90.2h-8zM1559 1063.4h8v36.4h-8zM1595 1059.6h8v28.7h-8zM1631 1055.0h8v14.1h-8zM1757 1107.2h8v64.9h-8zM1793 1161.4h8v5.0h-8zM1811 1117.2h8v43.3h-8zM1847 1093.4h8v31.0h-8zM1865 765.2h8v328.5h-8zM1883 707.6h8v34.1h-8zM1991 992.0h8v65.6h-8zM2009 957.4h8v30.3h-8zM2045 988.1h8v36.4h-8zM2063 761.4h8v224.7h-8zM2081 757.1h8v5.0h-8zM2189 985.8h8v38.7h-8zM2261 959.7h8v134.0h-8zM2423 1170.3h8v31.0h-8zM2459 1178.0h8v21.8h-8zM2477 1159.5h8v16.4h-8zM2531 1151.8h8v11.1h-8zM2549 1144.1h8v5.0h-8zM2567 1118.8h8v26.4h-8zM2603 1093.4h8v25.7h-8zM2621 1026.5h8v67.2h-8zM2639 959.7h8v64.9h-8zM2693 1017.3h8v40.3h-8zM2747 1015.0h8v22.6h-8zM2765 961.2h8v51.8h-8zM2801 1004.6h8v5.0h-8zM2819 953.5h8v49.5h-8zM2837 928.9h8v16.4h-8zM2873 882.8h8v72.6h-8zM2927 992.0h8v9.5h-8zM2945 985.8h8v5.0h-8zM2963 955.8h8v24.9h-8zM2981 928.9h8v24.9h-8zM3017 840.5h8v84.1h-8zM3035 786.7h8v54.9h-8zM3053 616.9h8v165.6h-8zM3071 532.3h8v81.0h-8zM3287 803.6h8v199.4h-8zM3323 751.4h8v65.6h-8zM3413 959.7h8v12.6h-8zM3431 953.9h8v5.0h-8zM3449 907.4h8v46.4h-8zM3467 882.8h8v22.6h-8zM3539 953.1h8v5.0h-8zM3665 1015.0h8v40.3h-8zM3701 949.7h8v84.1h-8zM3755 978.9h8v49.5h-8z" fill="#72f44a" stroke="#000" stroke-width="2"/><path d="M641 394.0h8v73.3h-8zM659 482.4h8v355.4h-8zM695 749.8h8v77.9h-8zM713 848.2h8v11.1h-8zM731 872.1h8v13.4h-8zM749 884.4h8v53.3h-8zM803 687.9h8v5.0h-8zM821 693.7h8v95.6h-8zM857 790.6h8v38.7h-8zM875 823.6h8v131.7h-8zM893 951.9h8v5.0h-8zM929 955.1h8v100.2h-8zM983 915.9h8v34.1h-8zM1037 901.3h8v44.1h-8zM1055 947.4h8v18.0h-8zM1145 881.2h8v5.0h-8zM1163 892.0h8v36.4h-8zM1217 903.6h8v8.0h-8zM1235 915.1h8v6.5h-8zM1271 567.7h8v24.1h-8zM1289 605.3h8v229.3h-8zM1325 745.2h8v179.4h-8zM1343 928.9h8v108.7h-8zM1433 934.3h8v7.2h-8zM1487 853.6h8v98.7h-8zM1505 953.5h8v42.6h-8zM1523 1011.2h8v78.7h-8zM1541 1096.4h8v5.0h-8zM1577 1061.1h8v28.7h-8zM1613 1059.6h8v12.6h-8zM1649 1055.0h8v31.0h-8zM1667 1085.7h8v5.0h-8zM1685 1091.9h8v13.4h-8zM1703 1109.6h8v24.1h-8zM1721 1132.6h8v39.5h-8zM1775 1105.7h8v58.7h-8zM1829 1117.2h8v5.7h-8zM1901 696.0h8v131.7h-8zM1919 831.3h8v5.0h-8zM1937 835.2h8v108.7h-8zM1955 945.8h8v38.0h-8zM1973 978.1h8v73.3h-8zM2027 965.1h8v61.8h-8zM2099 745.2h8v102.5h-8zM2135 851.3h8v44.1h-8zM2153 899.0h8v104.8h-8zM2171 1005.0h8v17.2h-8zM2207 989.6h8v17.2h-8zM2225 1007.3h8v26.4h-8zM2243 1034.2h8v55.6h-8zM2279 965.1h8v61.0h-8zM2297 1026.5h8v58.0h-8zM2315 1082.6h8v7.2h-8zM2333 1097.3h8v44.1h-8zM2351 1145.7h8v11.8h-8zM2369 1159.5h8v12.6h-8zM2387 1174.1h8v19.5h-8zM2405 1197.1h8v5.0h-8zM2441 1171.0h8v28.0h-8zM2495 1158.7h8v5.0h-8zM2585 1115.7h8v5.0h-8zM2657 959.7h8v63.3h-8zM2675 1020.4h8v37.2h-8zM2729 1020.4h8v17.2h-8zM2783 959.7h8v48.0h-8zM2855 928.9h8v26.4h-8zM2891 882.8h8v61.0h-8zM2909 942.0h8v57.2h-8zM3107 540.8h8v103.3h-8zM3125 647.2h8v5.0h-8zM3143 653.0h8v134.8h-8zM3161 786.7h8v42.6h-8zM3197 816.7h8v87.2h-8zM3215 900.5h8v25.7h-8zM3233 925.1h8v49.5h-8zM3251 975.0h8v20.3h-8zM3269 997.3h8v8.0h-8zM3305 806.0h8v9.5h-8zM3341 753.7h8v75.6h-8zM3359 842.1h8v95.6h-8zM3377 938.2h8v5.7h-8zM3395 947.4h8v24.9h-8zM3485 882.8h8v40.3h-8zM3521 920.5h8v41.0h-8zM3557 953.1h8v5.0h-8zM3575 958.9h8v21.8h-8zM3593 982.0h8v15.7h-8zM3611 1013.5h8v16.4h-8zM3647 1034.2h8v18.8h-8zM3683 1001.2h8v34.9h-8zM3719 949.7h8v32.6h-8zM3737 984.3h8v53.3h-8z" fill="#ea4426" stroke="#000" stroke-width="2"/><rect x="838" y="786.8" width="10" height="4" fill="#72f44a"/><rect x="1450" y="939.0" width="10" height="4" fill="#ea4426"/><rect x="1738" y="1169.6" width="10" height="4" fill="#ea4426"/><rect x="2116" y="846.8" width="10" height="4" fill="#ea4426"/><rect x="2512" y="1161.9" width="10" height="4" fill="#72f44a"/><rect x="2710" y="1013.6" width="10" height="4" fill="#ea4426"/><rect x="2998" y="925.9" width="10" height="4" fill="#72f44a"/><rect x="3088" y="533.2" width="10" height="4" fill="#ea4426"/><rect x="3178" y="813.7" width="10" height="4" fill="#72f44a"/><rect x="3502" y="919.8" width="10" height="4" fill="#72f44a"/><rect x="3628" y="1028.9" width="10" height="4" fill="#ea4426"/><path d="M609 1271.9 L627 1274.4 L645 1280.7 L663 1299.9 L681 1322.6 L699 1348.1 L717 1371.5 L735 1395.3 L753 1418.7 L771 1441.4 L789 1448.4 L807 1448.4 L825 1446.6 L843 1442.4 L861 1438.6 L879 1442.4 L897 1448.4 L915 1456.4 L933 1469.3 L951 1474.6 L969 1472.1 L987 1470.4 L1005 1462.4 L1023 1455.4 L1041 1446.6 L1059 1439.6 L1077 1434.4 L1095 1423.9 L1113 1413.4 L1131 1403.0 L1149 1394.2 L1167 1392.5 L1185 1392.5 L1203 1390.7 L1221 1390.7 L1239 1394.2 L1257 1372.6 L1275 1359.3 L1293 1371.5 L1311 1380.2 L1329 1406.5 L1347 1436.1 L1365 1462.4 L1383 1479.8 L1401 1491.4 L1419 1497.3 L1437 1499.0 L1455 1497.3 L1473 1489.3 L1491 1483.3 L1509 1482.3 L1527 1485.1 L1545 1490.3 L1563 1491.4 L1581 1494.5 L1599 1494.5 L1617 1494.5 L1635 1490.3 L1653 1491.4 L1671 1492.1 L1689 1492.1 L1707 1497.3 L1725 1500.8 L1743 1504.3 L1761 1494.8 L1779 1490.3 L1797 1487.9 L1815 1476.3 L1833 1464.8 L1851 1443.1 L1869 1401.2 L1887 1376.8 L1905 1370.8 L1923 1372.6 L1941 1382.0 L1959 1397.7 L1977 1418.7 L1995 1434.4 L2013 1448.4 L2031 1457.1 L2049 1466.5 L2067 1457.8 L2085 1451.9 L2103 1451.9 L2121 1452.6 L2139 1453.6 L2157 1465.8 L2175 1478.8 L2193 1490.3 L2211 1501.8 L2229 1509.5 L2247 1518.3 L2265 1518.3 L2283 1515.8 L2301 1516.5 L2319 1516.5 L2337 1519.3 L2355 1524.5 L2373 1528.7 L2391 1531.2 L2409 1532.2 L2427 1531.5 L2445 1529.8 L2463 1527.0 L2481 1520.7 L2499 1513.0 L2517 1499.0 L2535 1481.6 L2553 1457.1 L2571 1436.1 L2589 1413.4 L2607 1390.7 L2625 1369.8 L2643 1352.3 L2661 1348.8 L2679 1355.8 L2697 1360.0 L2715 1363.8 L2733 1369.8 L2751 1373.3 L2769 1369.8 L2787 1369.1 L2805 1371.5 L2823 1368.0 L2841 1357.5 L2859 1359.3 L2877 1360.0 L2895 1366.3 L2913 1387.2 L2931 1408.2 L2949 1423.9 L2967 1429.2 L2985 1429.9 L3003 1427.4 L3021 1409.9 L3039 1387.2 L3057 1364.5 L3075 1348.1 L3093 1337.6 L3111 1338.3 L3129 1343.6 L3147 1362.8 L3165 1383.7 L3183 1406.5 L3201 1430.9 L3219 1453.6 L3237 1478.1 L3255 1500.8 L3273 1501.8 L3291 1499.0 L3309 1490.3 L3327 1471.1 L3345 1451.9 L3363 1448.4 L3381 1450.1 L3399 1457.1 L3417 1463.4 L3435 1470.4 L3453 1471.1 L3471 1470.4 L3489 1472.1 L3507 1474.6 L3525 1476.3 L3543 1478.1 L3561 1479.8 L3579 1484.4 L3597 1493.8 L3615 1500.8 L3633 1506.0 L3651 1510.2 L3669 1509.5 L3687 1507.1 L3705 1488.6 L3723 1468.6 L3741 1461.7 L3759 1448.4" fill="none" stroke="#ec3a28" stroke-width="2.3" stroke-linejoin="round"/><path d="M573 1274.4 L591 1274.4 L609 1270.9 L627 1273.7 L645 1291.1 L663 1350.5 L681 1369.8 L699 1396.3 L717 1421.8 L735 1446.6 L753 1469.3 L771 1484.0 L789 1462.4 L807 1448.4 L825 1444.9 L843 1434.4 L861 1429.2 L879 1446.6 L897 1460.6 L915 1471.1 L933 1493.8 L951 1484.0 L969 1470.4 L987 1469.3 L1005 1453.6 L1023 1438.6 L1041 1430.9 L1059 1427.4 L1077 1421.5 L1095 1405.8 L1113 1393.5 L1131 1380.9 L1149 1375.0 L1167 1390.7 L1185 1390.7 L1203 1387.2 L1221 1390.7 L1239 1400.2 L1257 1330.3 L1275 1327.1 L1293 1394.2 L1311 1401.2 L1329 1446.6 L1347 1493.8 L1365 1513.0 L1383 1518.3 L1401 1513.7 L1419 1507.1 L1437 1504.3 L1455 1497.3 L1473 1473.9 L1491 1473.9 L1509 1476.3 L1527 1488.6 L1545 1500.1 L1563 1494.5 L1581 1498.0 L1599 1492.8 L1617 1492.8 L1635 1487.5 L1653 1492.8 L1671 1494.5 L1689 1494.5 L1707 1500.8 L1725 1512.0 L1743 1512.0 L1761 1474.6 L1779 1479.8 L1797 1481.6 L1815 1453.6 L1833 1438.6 L1851 1399.5 L1869 1319.1 L1887 1331.3 L1905 1359.3 L1923 1373.3 L1941 1401.2 L1959 1424.6 L1977 1450.1 L1995 1462.4 L2013 1464.8 L2031 1479.8 L2049 1488.6 L2067 1448.4 L2085 1438.9 L2103 1446.6 L2121 1451.9 L2139 1462.4 L2157 1485.1 L2175 1505.3 L2193 1511.3 L2211 1520.0 L2229 1528.0 L2247 1535.7 L2265 1515.8 L2283 1509.5 L2301 1518.3 L2319 1516.5 L2337 1523.5 L2355 1530.5 L2373 1534.0 L2391 1537.5 L2409 1538.2 L2427 1528.7 L2445 1528.7 L2463 1521.8 L2481 1509.5 L2499 1497.3 L2517 1479.8 L2535 1455.4 L2553 1427.4 L2571 1390.7 L2589 1378.5 L2607 1350.5 L2625 1323.6 L2643 1314.6 L2661 1341.8 L2679 1369.8 L2697 1369.8 L2715 1369.8 L2733 1383.7 L2751 1383.7 L2769 1361.0 L2787 1368.0 L2805 1377.4 L2823 1355.8 L2841 1336.6 L2859 1369.8 L2877 1357.5 L2895 1375.0 L2913 1415.2 L2931 1438.9 L2949 1451.9 L2967 1448.4 L2985 1436.1 L3003 1425.0 L3021 1390.7 L3039 1354.0 L3057 1313.9 L3075 1311.1 L3093 1315.6 L3111 1340.1 L3129 1355.8 L3147 1389.0 L3165 1422.2 L3183 1439.6 L3201 1469.3 L3219 1495.5 L3237 1514.8 L3255 1527.0 L3273 1529.8 L3291 1486.8 L3309 1464.1 L3327 1429.2 L3345 1420.4 L3363 1437.9 L3381 1453.6 L3399 1470.4 L3417 1478.8 L3435 1482.3 L3453 1478.8 L3471 1470.4 L3489 1474.6 L3507 1478.8 L3525 1482.3 L3543 1479.8 L3561 1481.6 L3579 1492.1 L3597 1508.5 L3615 1512.3 L3633 1514.8 L3651 1524.2 L3669 1506.0 L3687 1499.0 L3705 1451.9 L3723 1432.7 L3741 1445.9 L3759 1422.2" fill="none" stroke="#2f40f2" stroke-width="2.3" stroke-linejoin="round"/><path d="M537 1699.2 L555 1665.3 L573 1630.4 L591 1622.3 L609 1602.4 L627 1590.9 L645 1621.6 L663 1734.1 L681 1720.5 L699 1736.9 L717 1743.2 L735 1750.9 L753 1762.1 L771 1756.1 L789 1703.7 L807 1703.7 L825 1731.7 L843 1731.7 L861 1744.6 L879 1776.4 L897 1776.4 L915 1774.7 L933 1799.8 L951 1761.4 L969 1752.7 L987 1762.1 L1005 1748.5 L1023 1744.6 L1041 1759.6 L1059 1768.4 L1077 1766.6 L1095 1748.5 L1113 1744.6 L1131 1726.5 L1149 1728.2 L1167 1752.0 L1185 1742.2 L1203 1738.7 L1221 1744.6 L1239 1752.0 L1257 1641.9 L1275 1640.8 L1293 1743.2 L1311 1717.0 L1329 1764.9 L1347 1785.8 L1365 1782.4 L1383 1773.6 L1401 1761.4 L1419 1754.4 L1437 1756.1 L1455 1756.1 L1473 1727.1 L1491 1759.6 L1509 1771.2 L1527 1796.3 L1545 1799.8 L1563 1782.4 L1581 1790.4 L1599 1774.7 L1617 1779.9 L1635 1770.1 L1653 1782.4 L1671 1784.1 L1689 1791.1 L1707 1803.3 L1725 1818.3 L1743 1818.3 L1761 1764.9 L1779 1791.8 L1797 1788.6 L1815 1758.9 L1833 1762.1 L1851 1740.4 L1869 1641.9 L1887 1636.7 L1905 1690.8 L1923 1694.3 L1941 1732.7 L1959 1747.4 L1977 1768.4 L1995 1746.7 L2013 1735.2 L2031 1760.3 L2049 1744.6 L2067 1688.7 L2085 1687.0 L2103 1720.2 L2121 1720.2 L2139 1738.7 L2157 1770.1 L2175 1774.7 L2193 1760.7 L2211 1768.4 L2229 1776.4 L2247 1793.9 L2265 1741.1 L2283 1763.1 L2301 1778.9 L2319 1780.6 L2337 1797.0 L2355 1800.9 L2373 1804.4 L2391 1810.3 L2409 1812.1 L2427 1790.4 L2445 1801.6 L2463 1784.8 L2481 1772.6 L2499 1776.4 L2517 1774.7 L2535 1764.2 L2553 1758.6 L2571 1734.5 L2589 1736.2 L2607 1710.7 L2625 1672.3 L2643 1648.9 L2661 1705.5 L2679 1728.2 L2697 1708.3 L2715 1708.3 L2733 1726.5 L2751 1709.0 L2769 1684.5 L2787 1722.3 L2805 1718.8 L2823 1694.0 L2841 1682.8 L2859 1706.2 L2877 1674.7 L2895 1717.7 L2913 1750.2 L2931 1742.2 L2949 1742.2 L2967 1723.0 L2985 1710.0 L3003 1708.3 L3021 1668.8 L3039 1654.8 L3057 1621.6 L3075 1612.9 L3093 1615.7 L3111 1682.8 L3129 1686.3 L3147 1744.6 L3165 1758.6 L3183 1752.7 L3201 1781.7 L3219 1788.6 L3237 1802.3 L3255 1808.6 L3273 1810.3 L3291 1721.9 L3309 1728.2 L3327 1709.0 L3345 1743.9 L3363 1772.6 L3381 1773.6 L3399 1784.1 L3417 1776.4 L3435 1774.7 L3453 1750.2 L3471 1738.7 L3489 1758.6 L3507 1756.8 L3525 1776.4 L3543 1770.1 L3561 1771.9 L3579 1787.6 L3597 1794.6 L3615 1810.3 L3633 1810.3 L3651 1820.1 L3669 1780.6 L3687 1792.1 L3705 1728.9 L3723 1749.2 L3741 1780.6 L3759 1743.9" fill="none" stroke="#2f40f2" stroke-width="2.3" stroke-linejoin="round"/><rect x="416" y="285" width="3394" height="3" fill="#000"/><rect x="416" y="285" width="2" height="1561" fill="#000"/><rect x="3808" y="285" width="2" height="1561" fill="#000"/><rect x="416" y="1242" width="3394" height="4" fill="#000"/><rect x="416" y="1562" width="3394" height="4" fill="#000"/><rect x="416" y="1844" width="3394" height="2" fill="#000"/><path d="M3804 1236.7H3808M418 1236.7H422M3804 1221.5H3808M418 1221.5H422M3804 1206.2H3808M418 1206.2H422M3798 1191.0H3808M418 1191.0H426M3804 1175.8H3808M418 1175.8H422M3804 1160.5H3808M418 1160.5H422M3804 1145.3H3808M418 1145.3H422M3804 1130.0H3808M418 1130.0H422M3798 1114.8H3808M418 1114.8H426M3804 1099.5H3808M418 1099.5H422M3804 1084.3H3808M418 1084.3H422M3804 1069.1H3808M418 1069.1H422M3804 1053.8H3808M418 1053.8H422M3798 1038.6H3808M418 1038.6H426M3804 1023.3H3808M418 1023.3H422M3804 1008.1H3808M418 1008.1H422M3804 992.9H3808M418 992.9H422M3804 977.6H3808M418 977.6H422M3798 962.4H3808M418 962.4H426M3804 947.1H3808M418 947.1H422M3804 931.9H3808M418 931.9H422M3804 916.6H3808M418 916.6H422M3804 901.4H3808M418 901.4H422M3798 886.2H3808M418 886.2H426M3804 870.9H3808M418 870.9H422M3804 855.7H3808M418 855.7H422M3804 840.4H3808M418 840.4H422M3804 825.2H3808M418 825.2H422M3798 810.0H3808M418 810.0H426M3804 794.7H3808M418 794.7H422M3804 779.5H3808M418 779.5H422M3804 764.2H3808M418 764.2H422M3804 749.0H3808M418 749.0H422M3798 733.7H3808M418 733.7H426M3804 718.5H3808M418 718.5H422M3804 703.3H3808M418 703.3H422M3804 688.0H3808M418 688.0H422M3804 672.8H3808M418 672.8H422M3798 657.5H3808M418 657.5H426M3804 642.3H3808M418 642.3H422M3804 627.0H3808M418 627.0H422M3804 611.8H3808M418 611.8H422M3804 596.6H3808M418 596.6H422M3798 581.3H3808M418 581.3H426M3804 566.1H3808M418 566.1H422M3804 550.8H3808M418 550.8H422M3804 535.6H3808M418 535.6H422M3804 520.4H3808M418 520.4H422M3798 505.1H3808M418 505.1H426M3804 489.9H3808M418 489.9H422M3804 474.6H3808M418 474.6H422M3804 459.4H3808M418 459.4H422M3804 444.1H3808M418 444.1H422M3798 428.9H3808M418 428.9H426M3804 413.7H3808M418 413.7H422M3804 398.4H3808M418 398.4H422M3804 383.2H3808M418 383.2H422M3804 367.9H3808M418 367.9H422M3798 352.7H3808M418 352.7H426M3804 337.4H3808M418 337.4H422M3804 322.2H3808M418 322.2H422M3804 307.0H3808M418 307.0H422M3804 291.7H3808M418 291.7H422M3798 1553.0H3808M418 1553.0H426M3804 1538.6H3808M418 1538.6H422M3804 1524.2H3808M418 1524.2H422M3804 1509.8H3808M418 1509.8H422M3804 1495.4H3808M418 1495.4H422M3798 1481.0H3808M418 1481.0H426M3804 1466.6H3808M418 1466.6H422M3804 1452.2H3808M418 1452.2H422M3804 1437.8H3808M418 1437.8H422M3804 1423.4H3808M418 1423.4H422M3798 1409.0H3808M418 1409.0H426M3804 1394.6H3808M418 1394.6H422M3804 1380.2H3808M418 1380.2H422M3804 1365.8H3808M418 1365.8H422M3804 1351.4H3808M418 1351.4H422M3798 1337.0H3808M418 1337.0H426M3804 1322.6H3808M418 1322.6H422M3804 1308.2H3808M418 1308.2H422M3804 1293.8H3808M418 1293.8H422M3804 1279.4H3808M418 1279.4H422M3798 1265.0H3808M418 1265.0H426M3804 1250.6H3808M418 1250.6H422M3798 1835.0H3808M418 1835.0H426M3804 1816.9H3808M418 1816.9H422M3804 1798.8H3808M418 1798.8H422M3804 1780.7H3808M418 1780.7H422M3804 1762.6H3808M418 1762.6H422M3798 1744.5H3808M418 1744.5H426M3804 1727.0H3808M418 1727.0H422M3804 1709.5H3808M418 1709.5H422M3804 1692.0H3808M418 1692.0H422M3804 1674.5H3808M418 1674.5H422M3798 1657.0H3808M418 1657.0H426M3804 1639.5H3808M418 1639.5H422M3804 1622.0H3808M418 1622.0H422M3804 1604.5H3808M418 1604.5H422M3804 1587.0H3808M418 1587.0H422M3798 1569.5H3808M418 1569.5H426" stroke="#000" stroke-width="2"/><text transform="translate(558.00,1870.0) scale(1.05,1)" x="7.67 23.00 38.33 53.67" y="0" text-anchor="middle" font-family='"Liberation Sans", sans-serif' font-size="24.5" font-weight="normal" fill="#000">1976</text><text transform="translate(846.00,1870.0) scale(1.05,1)" x="7.67 23.00 38.33 53.67" y="0" text-anchor="middle" font-family='"Liberation Sans", sans-serif' font-size="24.5" font-weight="normal" fill="#000">1980</text><text transform="translate(1134.00,1870.0) scale(1.05,1)" x="7.67 23.00 38.33 53.67" y="0" text-anchor="middle" font-family='"Liberation Sans", sans-serif' font-size="24.5" font-weight="normal" fill="#000">1984</text><text transform="translate(1422.00,1870.0) scale(1.05,1)" x="7.67 23.00 38.33 53.67" y="0" text-anchor="middle" font-family='"Liberation Sans", sans-serif' font-size="24.5" font-weight="normal" fill="#000">1988</text><text transform="translate(1710.00,1870.0) scale(1.05,1)" x="7.67 23.00 38.33 53.67" y="0" text-anchor="middle" font-family='"Liberation Sans", sans-serif' font-size="24.5" font-weight="normal" fill="#000">1992</text><text transform="translate(1998.00,1870.0) scale(1.05,1)" x="7.67 23.00 38.33 53.67" y="0" text-anchor="middle" font-family='"Liberation Sans", sans-serif' font-size="24.5" font-weight="normal" fill="#000">1996</text><text transform="translate(2286.00,1870.0) scale(1.05,1)" x="7.67 23.00 38.33 53.67" y="0" text-anchor="middle" font-family='"Liberation Sans", sans-serif' font-size="24.5" font-weight="normal" fill="#000">2000</text><text transform="translate(2574.00,1870.0) scale(1.05,1)" x="7.67 23.00 38.33 53.67" y="0" text-anchor="middle" font-family='"Liberation Sans", sans-serif' font-size="24.5" font-weight="normal" fill="#000">2004</text><text transform="translate(2862.00,1870.0) scale(1.05,1)" x="7.67 23.00 38.33 53.67" y="0" text-anchor="middle" font-family='"Liberation Sans", sans-serif' font-size="24.5" font-weight="normal" fill="#000">2008</text><text transform="translate(3150.00,1870.0) scale(1.05,1)" x="7.67 23.00 38.33 53.67" y="0" text-anchor="middle" font-family='"Liberation Sans", sans-serif' font-size="24.5" font-weight="normal" fill="#000">2012</text><text transform="translate(3438.00,1870.0) scale(1.05,1)" x="7.67 23.00 38.33 53.67" y="0" text-anchor="middle" font-family='"Liberation Sans", sans-serif' font-size="24.5" font-weight="normal" fill="#000">2016</text><text transform="translate(3726.00,1870.0) scale(1.05,1)" x="7.67 23.00 38.33 53.67" y="0" text-anchor="middle" font-family='"Liberation Sans", sans-serif' font-size="24.5" font-weight="normal" fill="#000">2020</text><path d="M554.5 1846V1877M842.5 1846V1877M1130.5 1846V1877M1418.5 1846V1877M1706.5 1846V1877M1994.5 1846V1877M2282.5 1846V1877M2570.5 1846V1877M2858.5 1846V1877M3146.5 1846V1877M3434.5 1846V1877M3722.5 1846V1877" stroke="#000" stroke-width="2"/><text transform="translate(3826.40,433.4) scale(1.05,1)" x="7.67 23.00 38.33 53.67 69.00 84.33" y="0" text-anchor="middle" font-family='"Liberation Sans", sans-serif' font-size="24.5" font-weight="normal" fill="#000">300.00</text><text transform="translate(3826.40,585.8) scale(1.05,1)" x="7.67 23.00 38.33 53.67 69.00 84.33" y="0" text-anchor="middle" font-family='"Liberation Sans", sans-serif' font-size="24.5" font-weight="normal" fill="#000">250.00</text><text transform="translate(3826.40,738.2) scale(1.05,1)" x="7.67 23.00 38.33 53.67 69.00 84.33" y="0" text-anchor="middle" font-family='"Liberation Sans", sans-serif' font-size="24.5" font-weight="normal" fill="#000">200.00</text><text transform="translate(3826.40,890.7) scale(1.05,1)" x="7.67 23.00 38.33 53.67 69.00 84.33" y="0" text-anchor="middle" font-family='"Liberation Sans", sans-serif' font-size="24.5" font-weight="normal" fill="#000">150.00</text><text transform="translate(3826.40,1043.1) scale(1.05,1)" x="7.67 23.00 38.33 53.67 69.00 84.33" y="0" text-anchor="middle" font-family='"Liberation Sans", sans-serif' font-size="24.5" font-weight="normal" fill="#000">100.00</text><text transform="translate(3842.50,1195.5) scale(1.05,1)" x="7.67 23.00 38.33 53.67 69.00" y="0" text-anchor="middle" font-family='"Liberation Sans", sans-serif' font-size="24.5" font-weight="normal" fill="#000">50.00</text><text transform="translate(3843.70,1270.5) scale(1.05,1)" x="7.67 23.00 38.33" y="0" text-anchor="middle" font-family='"Liberation Sans", sans-serif' font-size="24.5" font-weight="normal" fill="#000">100</text><text transform="translate(3859.80,1342.5) scale(1.05,1)" x="7.67 23.00" y="0" text-anchor="middle" font-family='"Liberation Sans", sans-serif' font-size="24.5" font-weight="normal" fill="#000">75</text><text transform="translate(3859.80,1414.5) scale(1.05,1)" x="7.67 23.00" y="0" text-anchor="middle" font-family='"Liberation Sans", sans-serif' font-size="24.5" font-weight="normal" fill="#000">50</text><text transform="translate(3859.80,1486.5) scale(1.05,1)" x="7.67 23.00" y="0" text-anchor="middle" font-family='"Liberation Sans", sans-serif' font-size="24.5" font-weight="normal" fill="#000">25</text><text transform="translate(3875.90,1558.5) scale(1.05,1)" x="7.67" y="0" text-anchor="middle" font-family='"Liberation Sans", sans-serif' font-size="24.5" font-weight="normal" fill="#000">0</text><text transform="translate(3859.80,1663.5) scale(1.05,1)" x="7.67 23.00" y="0" text-anchor="middle" font-family='"Liberation Sans", sans-serif' font-size="24.5" font-weight="normal" fill="#000">75</text><text transform="translate(3859.80,1841.5) scale(1.05,1)" x="7.67 23.00" y="0" text-anchor="middle" font-family='"Liberation Sans", sans-serif' font-size="24.5" font-weight="normal" fill="#000">25</text><rect x="3810" y="962" width="117" height="29" fill="#1a1a1a" stroke="#777" stroke-width="1"/><text transform="translate(3826.40,984.0) scale(1.05,1)" x="7.67 23.00 38.33 53.67 69.00 84.33" y="0" text-anchor="middle" font-family='"Liberation Sans", sans-serif' font-size="24.5" font-weight="normal" fill="#fff">119.40</text><rect x="3810" y="1406" width="118" height="29" fill="#2a3cf0"/><text transform="translate(3858.60,1428.0) scale(1.05,1)" x="7.67 23.00 38.33 53.67" y="0" text-anchor="middle" font-family='"Liberation Sans", sans-serif' font-size="24.5" font-weight="normal" fill="#fff">45.2</text><rect x="3810" y="1436" width="118" height="26" fill="#e8402a"/><text transform="translate(3858.60,1456.0) scale(1.05,1)" x="7.67 23.00 38.33 53.67" y="0" text-anchor="middle" font-family='"Liberation Sans", sans-serif' font-size="24.5" font-weight="normal" fill="#fff">36.1</text><rect x="3810" y="1728" width="118" height="30" fill="#2a3cf0"/><text transform="translate(3858.60,1751.0) scale(1.05,1)" x="7.67 23.00 38.33 53.67" y="0" text-anchor="middle" font-family='"Liberation Sans", sans-serif' font-size="24.5" font-weight="normal" fill="#fff">50.5</text><rect x="418" y="288" width="152" height="126" fill="#fff"/><text transform="translate(420.50,306.0) scale(0.88,1)" x="9.15" y="0" text-anchor="middle" font-family='"Liberation Sans", sans-serif' font-size="24.5" font-weight="normal" fill="#000">O</text><text transform="translate(420.50,306.0) scale(1.1,1)" x="21.95" y="0" text-anchor="middle" font-family='"Liberation Sans", sans-serif' font-size="24.5" font-weight="normal" fill="#000">=</text><text transform="translate(420.50,306.0) scale(1.05,1)" x="53.67 69.00 84.33 99.67 115.00 130.33" y="0" text-anchor="middle" font-family='"Liberation Sans", sans-serif' font-size="24.5" font-weight="normal" fill="#000">115.65</text><text transform="translate(420.50,332.0) scale(0.88,1)" x="9.15" y="0" text-anchor="middle" font-family='"Liberation Sans", sans-serif' font-size="24.5" font-weight="normal" fill="#000">H</text><text transform="translate(420.50,332.0) scale(1.1,1)" x="21.95" y="0" text-anchor="middle" font-family='"Liberation Sans", sans-serif' font-size="24.5" font-weight="normal" fill="#000">=</text><text transform="translate(420.50,332.0) scale(1.05,1)" x="53.67 69.00 84.33 99.67 115.00 130.33" y="0" text-anchor="middle" font-family='"Liberation Sans", sans-serif' font-size="24.5" font-weight="normal" fill="#000">119.75</text><text transform="translate(420.50,358.0) scale(0.88,1)" x="9.15" y="0" text-anchor="middle" font-family='"Liberation Sans", sans-serif' font-size="24.5" font-weight="normal" fill="#000">L</text><text transform="translate(420.50,358.0) scale(1.1,1)" x="21.95" y="0" text-anchor="middle" font-family='"Liberation Sans", sans-serif' font-size="24.5" font-weight="normal" fill="#000">=</text><text transform="translate(420.50,358.0) scale(1.05,1)" x="53.67 69.00 84.33 99.67 115.00 130.33" y="0" text-anchor="middle" font-family='"Liberation Sans", sans-serif' font-size="24.5" font-weight="normal" fill="#000">115.65</text><text transform="translate(420.50,384.0) scale(0.88,1)" x="9.15" y="0" text-anchor="middle" font-family='"Liberation Sans", sans-serif' font-size="24.5" font-weight="normal" fill="#000">L</text><text transform="translate(420.50,384.0) scale(1.1,1)" x="21.95" y="0" text-anchor="middle" font-family='"Liberation Sans", sans-serif' font-size="24.5" font-weight="normal" fill="#000">=</text><text transform="translate(420.50,384.0) scale(1.05,1)" x="53.67 69.00 84.33 99.67 115.00 130.33" y="0" text-anchor="middle" font-family='"Liberation Sans", sans-serif' font-size="24.5" font-weight="normal" fill="#000">119.40</text><text transform="translate(420.50,410.0) scale(0.88,1)" x="9.15" y="0" text-anchor="middle" font-family='"Liberation Sans", sans-serif' font-size="24.5" font-weight="normal" fill="#000">Δ</text><text transform="translate(420.50,410.0) scale(1.1,1)" x="21.95" y="0" text-anchor="middle" font-family='"Liberation Sans", sans-serif' font-size="24.5" font-weight="normal" fill="#000">=</text><text transform="translate(420.50,410.0) scale(1.05,1)" x="69.00 84.33 99.67 115.00 130.33" y="0" text-anchor="middle" font-family='"Liberation Sans", sans-serif' font-size="24.5" font-weight="normal" fill="#000">+3.85</text><rect x="583" y="293" width="8" height="118" fill="#72f44a" stroke="#000" stroke-width="2"/><rect x="584" y="294" width="6" height="9" fill="#ea4426"/><path d="M584 400 L584 410 L592 408 Z" fill="#f0f040" stroke="#000" stroke-width="1"/><rect x="418" y="1106" width="166" height="137" fill="#fff" stroke="#777" stroke-width="2"/><text transform="translate(420.50,1129.0) scale(1.05,1)" x="7.67 23.00 115.00 130.33" y="0" text-anchor="middle" font-family='"Liberation Sans", sans-serif' font-size="24.5" font-weight="normal" fill="#000">0120</text><text transform="translate(420.50,1129.0) scale(0.88,1)" x="64.03" y="0" text-anchor="middle" font-family='"Liberation Sans", sans-serif' font-size="24.5" font-weight="normal" fill="#000">J</text><text transform="translate(420.50,1129.0) scale(0.98,1)" x="73.93 90.36" y="0" text-anchor="middle" font-family='"Liberation Sans", sans-serif' font-size="24.5" font-weight="normal" fill="#000">ul</text><text transform="translate(420.50,1155.0) scale(0.88,1)" x="9.15" y="0" text-anchor="middle" font-family='"Liberation Sans", sans-serif' font-size="24.5" font-weight="normal" fill="#000">O</text><text transform="translate(420.50,1155.0) scale(1.1,1)" x="21.95" y="0" text-anchor="middle" font-family='"Liberation Sans", sans-serif' font-size="24.5" font-weight="normal" fill="#000">=</text><text transform="translate(420.50,1155.0) scale(1.05,1)" x="69.00 84.33 99.67 115.00 130.33 145.67" y="0" text-anchor="middle" font-family='"Liberation Sans", sans-serif' font-size="24.5" font-weight="normal" fill="#000">102.80</text><text transform="translate(420.50,1181.0) scale(0.88,1)" x="9.15" y="0" text-anchor="middle" font-family='"Liberation Sans", sans-serif' font-size="24.5" font-weight="normal" fill="#000">H</text><text transform="translate(420.50,1181.0) scale(1.1,1)" x="21.95" y="0" text-anchor="middle" font-family='"Liberation Sans", sans-serif' font-size="24.5" font-weight="normal" fill="#000">=</text><text transform="translate(420.50,1181.0) scale(1.05,1)" x="69.00 84.33 99.67 115.00 130.33 145.67" y="0" text-anchor="middle" font-family='"Liberation Sans", sans-serif' font-size="24.5" font-weight="normal" fill="#000">127.25</text><text transform="translate(420.50,1207.0) scale(0.88,1)" x="9.15" y="0" text-anchor="middle" font-family='"Liberation Sans", sans-serif' font-size="24.5" font-weight="normal" fill="#000">L</text><text transform="translate(420.50,1207.0) scale(1.1,1)" x="21.95" y="0" text-anchor="middle" font-family='"Liberation Sans", sans-serif' font-size="24.5" font-weight="normal" fill="#000">=</text><text transform="translate(420.50,1207.0) scale(1.05,1)" x="84.33 99.67 115.00 130.33 145.67" y="0" text-anchor="middle" font-family='"Liberation Sans", sans-serif' font-size="24.5" font-weight="normal" fill="#000">95.45</text><text transform="translate(420.50,1233.0) scale(0.88,1)" x="9.15" y="0" text-anchor="middle" font-family='"Liberation Sans", sans-serif' font-size="24.5" font-weight="normal" fill="#000">C</text><text transform="translate(420.50,1233.0) scale(1.1,1)" x="21.95" y="0" text-anchor="middle" font-family='"Liberation Sans", sans-serif' font-size="24.5" font-weight="normal" fill="#000">=</text><text transform="translate(420.50,1233.0) scale(1.05,1)" x="69.00 84.33 99.67 115.00 130.33 145.67" y="0" text-anchor="middle" font-family='"Liberation Sans", sans-serif' font-size="24.5" font-weight="normal" fill="#000">119.40</text><rect x="418" y="1247" width="108" height="30" fill="#fff"/><text transform="translate(426.50,1272.0) scale(0.88,1)" x="9.15 27.44" y="0" text-anchor="middle" font-family='"Liberation Sans", sans-serif' font-size="24.5" font-weight="normal" fill="#000">SS</text><text transform="translate(426.50,1272.0) scale(0.98,1)" x="41.07 57.50 73.93 90.36" y="0" text-anchor="middle" font-family='"Liberation Sans", sans-serif' font-size="24.5" font-weight="normal" fill="#000">toch</text><rect x="418" y="1505" width="197" height="59" fill="#fff" stroke="#777" stroke-width="2"/><text transform="translate(420.50,1527.0) scale(0.88,1)" x="9.15 27.44 45.74" y="0" text-anchor="middle" font-family='"Liberation Sans", sans-serif' font-size="24.5" font-weight="normal" fill="#000">SSK</text><text transform="translate(420.50,1527.0) scale(1.1,1)" x="51.23" y="0" text-anchor="middle" font-family='"Liberation Sans", sans-serif' font-size="24.5" font-weight="normal" fill="#000">=</text><text transform="translate(420.50,1527.0) scale(1.05,1)" x="115.00 130.33 145.67 161.00 176.33" y="0" text-anchor="middle" font-family='"Liberation Sans", sans-serif' font-size="24.5" font-weight="normal" fill="#000">45.22</text><text transform="translate(420.50,1553.0) scale(0.88,1)" x="9.15 27.44 45.74" y="0" text-anchor="middle" font-family='"Liberation Sans", sans-serif' font-size="24.5" font-weight="normal" fill="#000">SSD</text><text transform="translate(420.50,1553.0) scale(1.1,1)" x="51.23" y="0" text-anchor="middle" font-family='"Liberation Sans", sans-serif' font-size="24.5" font-weight="normal" fill="#000">=</text><text transform="translate(420.50,1553.0) scale(1.05,1)" x="115.00 130.33 145.67 161.00 176.33" y="0" text-anchor="middle" font-family='"Liberation Sans", sans-serif' font-size="24.5" font-weight="normal" fill="#000">36.14</text><rect x="418" y="1567" width="62" height="30" fill="#fff"/><text transform="translate(426.50,1592.0) scale(0.88,1)" x="9.15 27.44 45.74" y="0" text-anchor="middle" font-family='"Liberation Sans", sans-serif' font-size="24.5" font-weight="normal" fill="#000">RSI</text><rect x="418" y="1813" width="197" height="32" fill="#fff" stroke="#777" stroke-width="2"/><text transform="translate(420.50,1836.0) scale(0.88,1)" x="9.15 27.44 45.74" y="0" text-anchor="middle" font-family='"Liberation Sans", sans-serif' font-size="24.5" font-weight="normal" fill="#000">RSI</text><text transform="translate(420.50,1836.0) scale(1.1,1)" x="51.23" y="0" text-anchor="middle" font-family='"Liberation Sans", sans-serif' font-size="24.5" font-weight="normal" fill="#000">=</text><text transform="translate(420.50,1836.0) scale(1.05,1)" x="115.00 130.33 145.67 161.00 176.33" y="0" text-anchor="middle" font-family='"Liberation Sans", sans-serif' font-size="24.5" font-weight="normal" fill="#000">50.50</text><rect x="418" y="1841" width="39" height="40" fill="#fff" stroke="#666" stroke-width="2"/><rect x="418" y="1842" width="2" height="26" fill="#000"/></svg>
</body></html>
